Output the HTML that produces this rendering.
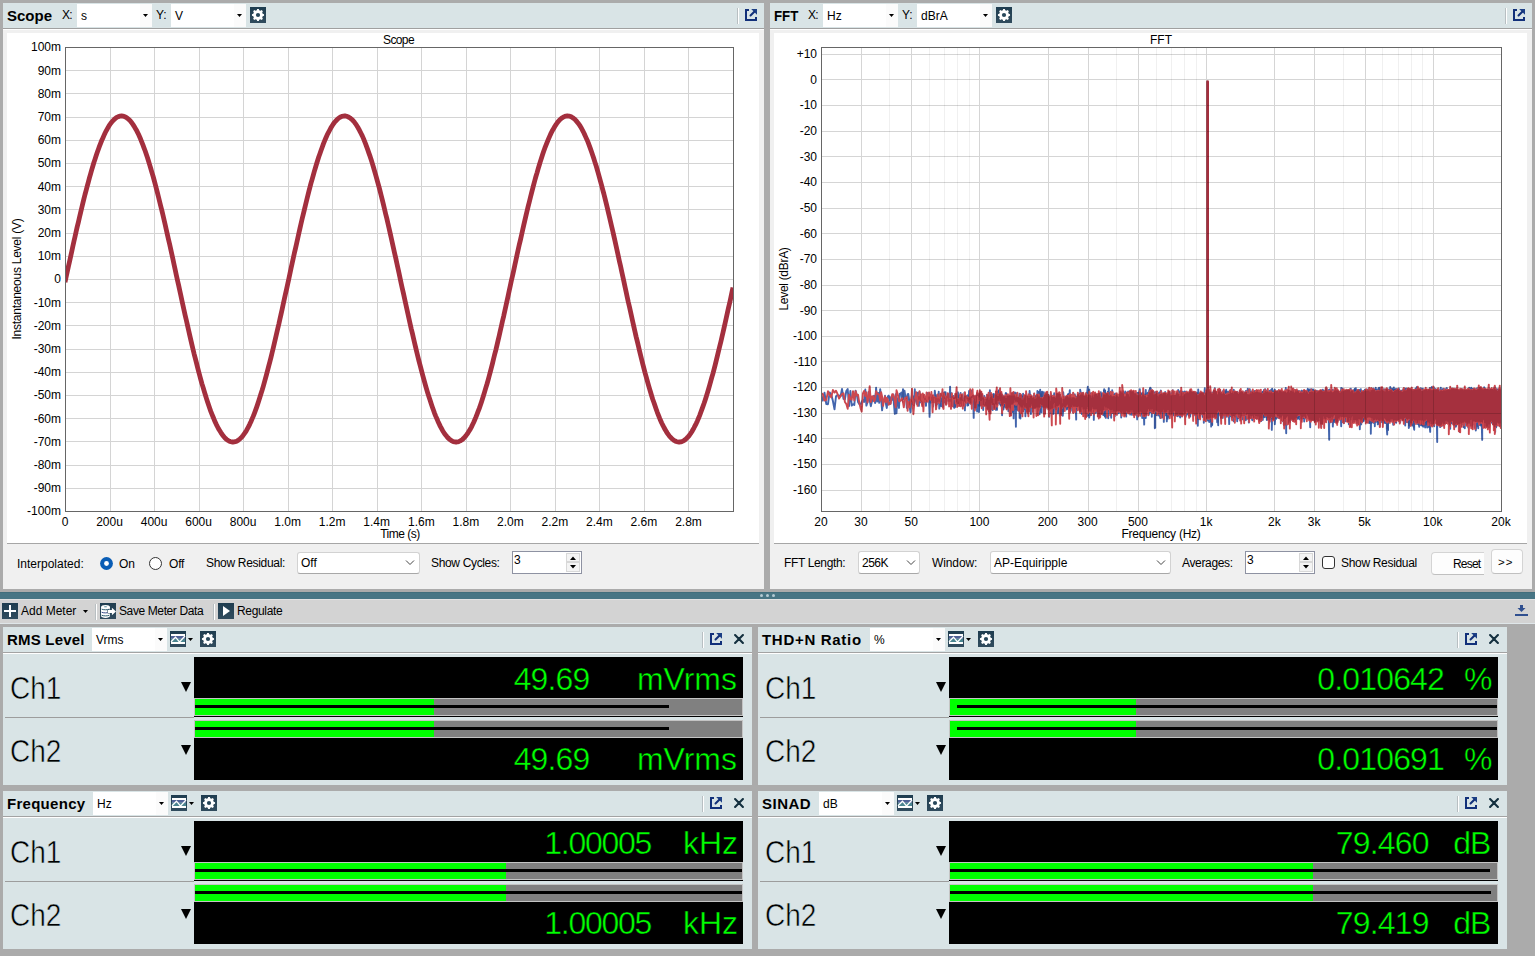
<!DOCTYPE html><html><head><meta charset="utf-8"><title>APx</title><style>
*{margin:0;padding:0;box-sizing:border-box}
html,body{width:1535px;height:956px;overflow:hidden;background:#ababab;position:relative;font-family:"Liberation Sans",sans-serif;font-size:12px;color:#000}
.a{position:absolute}
.t{position:absolute;white-space:nowrap;line-height:14px;height:14px}
.b{font-weight:bold;font-size:15px;line-height:18px;height:18px}
.pan{position:absolute;background:#d9e4e6}
.dd{position:absolute;background:#fff;height:23px}
.dd i{position:absolute;right:0;top:0;bottom:0;width:12px;background:#fbfbfb}
.arr{position:absolute;width:5px;height:3px;background:#000;clip-path:polygon(0 0,100% 0,50% 100%)}
.sep{position:absolute;width:2px;height:16px;background:linear-gradient(90deg,#b8bfc2 50%,#fff 50%)}
.ico{position:absolute;width:16px;height:16px;background:#27475a}
.cb{position:absolute;background:#fff;border:1px solid #d2d2d2;border-bottom-color:#a8a8a8;border-radius:3px}
.ch{position:absolute;font-size:32px;line-height:40px;height:40px;white-space:nowrap;color:#000;-webkit-text-stroke:0.55px #d9e4e6;transform:scaleX(0.875);transform-origin:0 0}
.val{position:absolute;font-size:32px;line-height:40px;height:40px;white-space:nowrap;color:#00ff00;-webkit-text-stroke:0.45px #000}
.tri{position:absolute;width:0;height:0;border-left:5.5px solid transparent;border-right:5.5px solid transparent;border-top:10px solid #000}
.bar{position:absolute;height:18px;background:#808080;border:1px solid #c4c4c4}
.bar b{position:absolute;left:0;top:0;height:16px;background:#00ff00}
.bar u{position:absolute;top:6px;height:3px;background:#000}
</style></head><body>
<svg width="0" height="0" style="position:absolute"><defs><linearGradient id="ig" x1="0" y1="0" x2="0" y2="1"><stop offset="0" stop-color="#1f3d50"/><stop offset="1" stop-color="#314c5e"/></linearGradient></defs></svg>
<div class="pan" style="left:3px;top:3px;width:761px;height:586px;background:#f0f0f0"></div>
<div class="pan" style="left:3px;top:3px;width:761px;height:25px"></div>
<div class="a" style="left:3px;top:28px;width:761px;height:1px;background:#a0a0a0"></div><div class="a" style="left:3px;top:29px;width:761px;height:1px;background:#fff"></div>
<div class="a" style="left:7px;top:33px;width:752px;height:510px;background:#fff"></div>
<div class="a" style="left:7px;top:543px;width:752px;height:1px;background:#a6a6a6"></div>
<div class="pan" style="left:770px;top:3px;width:762px;height:586px;background:#f0f0f0"></div>
<div class="pan" style="left:770px;top:3px;width:762px;height:25px"></div>
<div class="a" style="left:770px;top:28px;width:762px;height:1px;background:#a0a0a0"></div><div class="a" style="left:770px;top:29px;width:762px;height:1px;background:#fff"></div>
<div class="a" style="left:774px;top:33px;width:753px;height:510px;background:#fff"></div>
<div class="a" style="left:774px;top:543px;width:753px;height:1px;background:#a6a6a6"></div>
<div class="t b" style="left:7px;top:7px">Scope</div>
<div class="t" style="left:62px;top:8px;letter-spacing:-0.8px">X:</div>
<div class="dd" style="left:77px;top:4px;width:75px"><i></i></div><div class="t" style="left:81px;top:9px">s</div><div class="arr" style="left:143px;top:14px"></div>
<div class="t" style="left:156px;top:8px">Y:</div>
<div class="dd" style="left:171px;top:4px;width:75px"><i></i></div><div class="t" style="left:175px;top:9px">V</div><div class="arr" style="left:237px;top:14px"></div>
<svg class="a" style="left:250px;top:7px" width="16" height="16" viewBox="0 0 16 16"><rect width="16" height="16" fill="url(#ig)"/><path d="M7.14 1.96 L8.86 1.96 L9.21 3.30 L10.47 3.83 L11.66 3.12 L12.88 4.34 L12.17 5.53 L12.70 6.79 L14.04 7.14 L14.04 8.86 L12.70 9.21 L12.17 10.47 L12.88 11.66 L11.66 12.88 L10.47 12.17 L9.21 12.70 L8.86 14.04 L7.14 14.04 L6.79 12.70 L5.53 12.17 L4.34 12.88 L3.12 11.66 L3.83 10.47 L3.30 9.21 L1.96 8.86 L1.96 7.14 L3.30 6.79 L3.83 5.53 L3.12 4.34 L4.34 3.12 L5.53 3.83 L6.79 3.30Z" fill="#fff"/><circle cx="8" cy="8" r="2.1" fill="#27475a"/></svg>
<div class="sep" style="left:737px;top:8px"></div>
<svg class="a" style="left:745px;top:9px" width="12" height="12" viewBox="0 0 12 12"><path d="M0 0H4V2H2V10H10V8H12V12H0Z" fill="#12307a"/><path d="M6.2 0H12V5.800Z" fill="#1c3f85"/><path d="M9.3 2.700L5.500 6.500" stroke="#12307a" stroke-width="2" stroke-linecap="round"/></svg>
<div class="t b" style="left:774px;top:7px;transform:scaleX(0.885);transform-origin:0 0">FFT</div>
<div class="t" style="left:808px;top:8px;letter-spacing:-0.8px">X:</div>
<div class="dd" style="left:823px;top:4px;width:75px"><i></i></div><div class="t" style="left:827px;top:9px">Hz</div><div class="arr" style="left:889px;top:14px"></div>
<div class="t" style="left:902px;top:8px">Y:</div>
<div class="dd" style="left:917px;top:4px;width:75px"><i></i></div><div class="t" style="left:921px;top:9px">dBrA</div><div class="arr" style="left:983px;top:14px"></div>
<svg class="a" style="left:996px;top:7px" width="16" height="16" viewBox="0 0 16 16"><rect width="16" height="16" fill="url(#ig)"/><path d="M7.14 1.96 L8.86 1.96 L9.21 3.30 L10.47 3.83 L11.66 3.12 L12.88 4.34 L12.17 5.53 L12.70 6.79 L14.04 7.14 L14.04 8.86 L12.70 9.21 L12.17 10.47 L12.88 11.66 L11.66 12.88 L10.47 12.17 L9.21 12.70 L8.86 14.04 L7.14 14.04 L6.79 12.70 L5.53 12.17 L4.34 12.88 L3.12 11.66 L3.83 10.47 L3.30 9.21 L1.96 8.86 L1.96 7.14 L3.30 6.79 L3.83 5.53 L3.12 4.34 L4.34 3.12 L5.53 3.83 L6.79 3.30Z" fill="#fff"/><circle cx="8" cy="8" r="2.1" fill="#27475a"/></svg>
<div class="sep" style="left:1505px;top:8px"></div>
<svg class="a" style="left:1513px;top:9px" width="12" height="12" viewBox="0 0 12 12"><path d="M0 0H4V2H2V10H10V8H12V12H0Z" fill="#12307a"/><path d="M6.2 0H12V5.800Z" fill="#1c3f85"/><path d="M9.3 2.700L5.500 6.500" stroke="#12307a" stroke-width="2" stroke-linecap="round"/></svg>
<svg class="a" style="left:0;top:0" width="1535" height="590" viewBox="0 0 1535 590" font-family="Liberation Sans, sans-serif" font-size="12"><path d="M110.5 47 V511 M154.5 47 V511 M199.5 47 V511 M243.5 47 V511 M288.5 47 V511 M332.5 47 V511 M377.5 47 V511 M421.5 47 V511 M466.5 47 V511 M510.5 47 V511 M555.5 47 V511 M599.5 47 V511 M644.5 47 V511 M688.5 47 V511 M65 70.5 H733 M65 93.5 H733 M65 117.5 H733 M65 140.5 H733 M65 163.5 H733 M65 186.5 H733 M65 209.5 H733 M65 233.5 H733 M65 256.5 H733 M65 279.5 H733 M65 302.5 H733 M65 325.5 H733 M65 349.5 H733 M65 372.5 H733 M65 395.5 H733 M65 418.5 H733 M65 441.5 H733 M65 465.5 H733 M65 488.5 H733" stroke="#000" stroke-opacity="0.17" stroke-width="1" fill="none" shape-rendering="crispEdges"/><clipPath id="c1"><rect x="65" y="47" width="669" height="464"/></clipPath><path clip-path="url(#c1)" d="M65.0 282.2 L66.1 277.1 L67.2 272.0 L68.3 266.9 L69.5 261.8 L70.6 256.7 L71.7 251.7 L72.8 246.6 L73.9 241.6 L75.0 236.7 L76.1 231.8 L77.2 226.9 L78.4 222.1 L79.5 217.3 L80.6 212.6 L81.7 208.0 L82.8 203.4 L83.9 198.9 L85.0 194.5 L86.2 190.2 L87.3 185.9 L88.4 181.8 L89.5 177.7 L90.6 173.8 L91.7 169.9 L92.8 166.2 L93.9 162.5 L95.1 159.0 L96.2 155.6 L97.3 152.3 L98.4 149.2 L99.5 146.2 L100.6 143.3 L101.7 140.5 L102.9 137.9 L104.0 135.4 L105.1 133.0 L106.2 130.8 L107.3 128.8 L108.4 126.9 L109.5 125.1 L110.6 123.5 L111.8 122.0 L112.9 120.7 L114.0 119.6 L115.1 118.6 L116.2 117.8 L117.3 117.1 L118.4 116.6 L119.6 116.2 L120.7 116.0 L121.8 116.0 L122.9 116.1 L124.0 116.4 L125.1 116.8 L126.2 117.4 L127.3 118.2 L128.5 119.1 L129.6 120.2 L130.7 121.4 L131.8 122.8 L132.9 124.4 L134.0 126.1 L135.1 127.9 L136.3 129.9 L137.4 132.1 L138.5 134.3 L139.6 136.8 L140.7 139.3 L141.8 142.1 L142.9 144.9 L144.0 147.9 L145.2 151.0 L146.3 154.2 L147.4 157.5 L148.5 161.0 L149.6 164.6 L150.7 168.3 L151.8 172.1 L153.0 176.0 L154.1 180.0 L155.2 184.1 L156.3 188.3 L157.4 192.6 L158.5 197.0 L159.6 201.5 L160.7 206.0 L161.9 210.6 L163.0 215.3 L164.1 220.0 L165.2 224.8 L166.3 229.7 L167.4 234.6 L168.5 239.5 L169.7 244.5 L170.8 249.5 L171.9 254.5 L173.0 259.6 L174.1 264.7 L175.2 269.8 L176.3 274.9 L177.4 280.0 L178.6 285.1 L179.7 290.2 L180.8 295.3 L181.9 300.4 L183.0 305.5 L184.1 310.5 L185.2 315.5 L186.4 320.5 L187.5 325.4 L188.6 330.3 L189.7 335.1 L190.8 339.9 L191.9 344.6 L193.0 349.2 L194.1 353.8 L195.3 358.3 L196.4 362.7 L197.5 367.1 L198.6 371.3 L199.7 375.5 L200.8 379.6 L201.9 383.6 L203.1 387.4 L204.2 391.2 L205.3 394.8 L206.4 398.4 L207.5 401.8 L208.6 405.1 L209.7 408.3 L210.8 411.3 L212.0 414.3 L213.1 417.0 L214.2 419.7 L215.3 422.2 L216.4 424.6 L217.5 426.8 L218.6 428.9 L219.8 430.8 L220.9 432.6 L222.0 434.3 L223.1 435.7 L224.2 437.1 L225.3 438.2 L226.4 439.3 L227.5 440.1 L228.7 440.8 L229.8 441.4 L230.9 441.7 L232.0 442.0 L233.1 442.0 L234.2 441.9 L235.3 441.7 L236.5 441.3 L237.6 440.7 L238.7 439.9 L239.8 439.0 L240.9 438.0 L242.0 436.8 L243.1 435.4 L244.2 433.9 L245.4 432.2 L246.5 430.4 L247.6 428.4 L248.7 426.3 L249.8 424.1 L250.9 421.7 L252.0 419.1 L253.2 416.4 L254.3 413.6 L255.4 410.7 L256.5 407.6 L257.6 404.4 L258.7 401.0 L259.8 397.6 L260.9 394.0 L262.1 390.3 L263.2 386.6 L264.3 382.7 L265.4 378.7 L266.5 374.6 L267.6 370.4 L268.7 366.1 L269.9 361.7 L271.0 357.3 L272.1 352.8 L273.2 348.2 L274.3 343.5 L275.4 338.8 L276.5 334.0 L277.6 329.2 L278.8 324.3 L279.9 319.3 L281.0 314.4 L282.1 309.4 L283.2 304.3 L284.3 299.3 L285.4 294.2 L286.6 289.1 L287.7 284.0 L288.8 278.9 L289.9 273.8 L291.0 268.6 L292.1 263.5 L293.2 258.5 L294.3 253.4 L295.5 248.4 L296.6 243.4 L297.7 238.4 L298.8 233.5 L299.9 228.6 L301.0 223.7 L302.1 219.0 L303.3 214.2 L304.4 209.6 L305.5 205.0 L306.6 200.5 L307.7 196.0 L308.8 191.7 L309.9 187.4 L311.0 183.2 L312.2 179.1 L313.3 175.1 L314.4 171.2 L315.5 167.5 L316.6 163.8 L317.7 160.2 L318.8 156.8 L320.0 153.5 L321.1 150.3 L322.2 147.2 L323.3 144.2 L324.4 141.4 L325.5 138.8 L326.6 136.2 L327.7 133.8 L328.9 131.6 L330.0 129.5 L331.1 127.5 L332.2 125.7 L333.3 124.0 L334.4 122.5 L335.5 121.2 L336.7 120.0 L337.8 118.9 L338.9 118.0 L340.0 117.3 L341.1 116.7 L342.2 116.3 L343.3 116.1 L344.4 116.0 L345.6 116.0 L346.7 116.3 L347.8 116.7 L348.9 117.2 L350.0 117.9 L351.1 118.8 L352.2 119.8 L353.4 121.0 L354.5 122.3 L355.6 123.8 L356.7 125.5 L357.8 127.3 L358.9 129.2 L360.0 131.3 L361.1 133.5 L362.3 135.9 L363.4 138.4 L364.5 141.1 L365.6 143.9 L366.7 146.8 L367.8 149.9 L368.9 153.1 L370.1 156.4 L371.2 159.8 L372.3 163.4 L373.4 167.0 L374.5 170.8 L375.6 174.7 L376.7 178.6 L377.8 182.7 L379.0 186.9 L380.1 191.2 L381.2 195.5 L382.3 199.9 L383.4 204.4 L384.5 209.0 L385.6 213.7 L386.8 218.4 L387.9 223.2 L389.0 228.0 L390.1 232.9 L391.2 237.8 L392.3 242.8 L393.4 247.8 L394.5 252.8 L395.7 257.9 L396.8 262.9 L397.9 268.0 L399.0 273.1 L400.1 278.3 L401.2 283.4 L402.3 288.5 L403.5 293.6 L404.6 298.7 L405.7 303.7 L406.8 308.8 L407.9 313.8 L409.0 318.8 L410.1 323.7 L411.2 328.6 L412.4 333.4 L413.5 338.2 L414.6 343.0 L415.7 347.6 L416.8 352.2 L417.9 356.8 L419.0 361.2 L420.2 365.6 L421.3 369.9 L422.4 374.1 L423.5 378.2 L424.6 382.2 L425.7 386.1 L426.8 389.9 L427.9 393.6 L429.1 397.2 L430.2 400.6 L431.3 404.0 L432.4 407.2 L433.5 410.3 L434.6 413.3 L435.7 416.1 L436.9 418.8 L438.0 421.4 L439.1 423.8 L440.2 426.1 L441.3 428.2 L442.4 430.2 L443.5 432.0 L444.6 433.7 L445.8 435.2 L446.9 436.6 L448.0 437.9 L449.1 438.9 L450.2 439.8 L451.3 440.6 L452.4 441.2 L453.6 441.6 L454.7 441.9 L455.8 442.0 L456.9 442.0 L458.0 441.8 L459.1 441.4 L460.2 440.9 L461.3 440.2 L462.5 439.4 L463.6 438.4 L464.7 437.2 L465.8 435.9 L466.9 434.4 L468.0 432.8 L469.1 431.0 L470.3 429.1 L471.4 427.1 L472.5 424.8 L473.6 422.5 L474.7 420.0 L475.8 417.4 L476.9 414.6 L478.0 411.7 L479.2 408.6 L480.3 405.5 L481.4 402.2 L482.5 398.8 L483.6 395.3 L484.7 391.6 L485.8 387.9 L487.0 384.0 L488.1 380.1 L489.2 376.0 L490.3 371.8 L491.4 367.6 L492.5 363.3 L493.6 358.8 L494.7 354.3 L495.9 349.8 L497.0 345.1 L498.1 340.4 L499.2 335.7 L500.3 330.8 L501.4 326.0 L502.5 321.0 L503.7 316.1 L504.8 311.1 L505.9 306.1 L507.0 301.0 L508.1 295.9 L509.2 290.8 L510.3 285.7 L511.4 280.6 L512.6 275.5 L513.7 270.4 L514.8 265.3 L515.9 260.2 L517.0 255.1 L518.1 250.1 L519.2 245.1 L520.4 240.1 L521.5 235.2 L522.6 230.3 L523.7 225.4 L524.8 220.6 L525.9 215.9 L527.0 211.2 L528.1 206.6 L529.3 202.0 L530.4 197.5 L531.5 193.2 L532.6 188.9 L533.7 184.6 L534.8 180.5 L535.9 176.5 L537.1 172.6 L538.2 168.7 L539.3 165.0 L540.4 161.4 L541.5 158.0 L542.6 154.6 L543.7 151.3 L544.8 148.2 L546.0 145.2 L547.1 142.4 L548.2 139.7 L549.3 137.1 L550.4 134.6 L551.5 132.3 L552.6 130.2 L553.8 128.2 L554.9 126.3 L556.0 124.6 L557.1 123.0 L558.2 121.6 L559.3 120.3 L560.4 119.3 L561.5 118.3 L562.7 117.5 L563.8 116.9 L564.9 116.4 L566.0 116.1 L567.1 116.0 L568.2 116.0 L569.3 116.2 L570.5 116.5 L571.6 117.0 L572.7 117.7 L573.8 118.5 L574.9 119.4 L576.0 120.6 L577.1 121.9 L578.2 123.3 L579.4 124.9 L580.5 126.6 L581.6 128.5 L582.7 130.6 L583.8 132.8 L584.9 135.1 L586.0 137.6 L587.2 140.2 L588.3 142.9 L589.4 145.8 L590.5 148.8 L591.6 152.0 L592.7 155.2 L593.8 158.6 L594.9 162.1 L596.1 165.7 L597.2 169.5 L598.3 173.3 L599.4 177.3 L600.5 181.3 L601.6 185.4 L602.7 189.7 L603.9 194.0 L605.0 198.4 L606.1 202.9 L607.2 207.4 L608.3 212.1 L609.4 216.8 L610.5 221.5 L611.6 226.3 L612.8 231.2 L613.9 236.1 L615.0 241.1 L616.1 246.0 L617.2 251.1 L618.3 256.1 L619.4 261.2 L620.6 266.3 L621.7 271.4 L622.8 276.5 L623.9 281.6 L625.0 286.7 L626.1 291.8 L627.2 296.9 L628.3 302.0 L629.5 307.0 L630.6 312.1 L631.7 317.0 L632.8 322.0 L633.9 326.9 L635.0 331.8 L636.1 336.6 L637.3 341.3 L638.4 346.0 L639.5 350.7 L640.6 355.2 L641.7 359.7 L642.8 364.1 L643.9 368.4 L645.0 372.6 L646.2 376.8 L647.3 380.8 L648.4 384.8 L649.5 388.6 L650.6 392.3 L651.7 396.0 L652.8 399.5 L654.0 402.8 L655.1 406.1 L656.2 409.2 L657.3 412.3 L658.4 415.1 L659.5 417.9 L660.6 420.5 L661.7 423.0 L662.9 425.3 L664.0 427.5 L665.1 429.5 L666.2 431.4 L667.3 433.1 L668.4 434.7 L669.5 436.2 L670.7 437.4 L671.8 438.6 L672.9 439.5 L674.0 440.4 L675.1 441.0 L676.2 441.5 L677.3 441.8 L678.4 442.0 L679.6 442.0 L680.7 441.9 L681.8 441.6 L682.9 441.1 L684.0 440.5 L685.1 439.7 L686.2 438.7 L687.4 437.6 L688.5 436.4 L689.6 435.0 L690.7 433.4 L691.8 431.7 L692.9 429.8 L694.0 427.8 L695.1 425.6 L696.3 423.3 L697.4 420.9 L698.5 418.3 L699.6 415.6 L700.7 412.7 L701.8 409.7 L702.9 406.6 L704.1 403.3 L705.2 400.0 L706.3 396.5 L707.4 392.9 L708.5 389.2 L709.6 385.4 L710.7 381.4 L711.8 377.4 L713.0 373.3 L714.1 369.1 L715.2 364.8 L716.3 360.4 L717.4 355.9 L718.5 351.3 L719.6 346.7 L720.8 342.0 L721.9 337.3 L723.0 332.5 L724.1 327.6 L725.2 322.7 L726.3 317.8 L727.4 312.8 L728.5 307.8 L729.7 302.7 L730.8 297.7 L731.9 292.6 L733.0 287.5" stroke="#a32f3e" stroke-width="4.8" fill="none" stroke-linejoin="round"/><rect x="65.5" y="47.5" width="668" height="464" fill="none" stroke="#666" stroke-width="1" shape-rendering="crispEdges"/><text x="61" y="51.3" text-anchor="end">100m</text><text x="61" y="74.5" text-anchor="end">90m</text><text x="61" y="97.7" text-anchor="end">80m</text><text x="61" y="120.9" text-anchor="end">70m</text><text x="61" y="144.1" text-anchor="end">60m</text><text x="61" y="167.3" text-anchor="end">50m</text><text x="61" y="190.5" text-anchor="end">40m</text><text x="61" y="213.7" text-anchor="end">30m</text><text x="61" y="236.9" text-anchor="end">20m</text><text x="61" y="260.1" text-anchor="end">10m</text><text x="61" y="283.3" text-anchor="end">0</text><text x="61" y="306.5" text-anchor="end">-10m</text><text x="61" y="329.7" text-anchor="end">-20m</text><text x="61" y="352.9" text-anchor="end">-30m</text><text x="61" y="376.1" text-anchor="end">-40m</text><text x="61" y="399.3" text-anchor="end">-50m</text><text x="61" y="422.5" text-anchor="end">-60m</text><text x="61" y="445.7" text-anchor="end">-70m</text><text x="61" y="468.9" text-anchor="end">-80m</text><text x="61" y="492.1" text-anchor="end">-90m</text><text x="61" y="515.3" text-anchor="end">-100m</text><text x="65.0" y="526" text-anchor="middle">0</text><text x="109.5" y="526" text-anchor="middle">200u</text><text x="154.1" y="526" text-anchor="middle">400u</text><text x="198.6" y="526" text-anchor="middle">600u</text><text x="243.1" y="526" text-anchor="middle">800u</text><text x="287.7" y="526" text-anchor="middle">1.0m</text><text x="332.2" y="526" text-anchor="middle">1.2m</text><text x="376.7" y="526" text-anchor="middle">1.4m</text><text x="421.3" y="526" text-anchor="middle">1.6m</text><text x="465.8" y="526" text-anchor="middle">1.8m</text><text x="510.3" y="526" text-anchor="middle">2.0m</text><text x="554.9" y="526" text-anchor="middle">2.2m</text><text x="599.4" y="526" text-anchor="middle">2.4m</text><text x="643.9" y="526" text-anchor="middle">2.6m</text><text x="688.5" y="526" text-anchor="middle">2.8m</text><text x="398.5" y="44" text-anchor="middle" letter-spacing="-0.6">Scope</text><text x="400" y="538" text-anchor="middle" letter-spacing="-0.5">Time (s)</text><text transform="translate(21,279) rotate(-90)" text-anchor="middle" letter-spacing="-0.25">Instantaneous Level (V)</text><clipPath id="c2"><rect x="822" y="47" width="679" height="464"/></clipPath><path clip-path="url(#c2)" d="M819.2 395.3 L821.0 394.4 L822.8 400.6 L824.5 392.6 L826.3 404.0 L828.0 404.2 L829.6 392.4 L831.3 394.6 L832.9 401.0 L834.5 409.3 L836.0 396.3 L837.6 395.1 L839.1 395.5 L840.6 396.2 L842.0 388.9 L843.5 398.8 L844.9 399.4 L846.3 391.0 L847.7 389.0 L849.0 406.2 L850.4 390.9 L851.7 405.6 L853.0 404.3 L854.3 405.0 L855.6 390.7 L856.9 395.3 L858.1 402.2 L859.3 404.1 L860.5 404.7 L861.7 401.8 L862.9 399.9 L864.1 401.9 L865.3 389.5 L866.4 405.6 L867.5 402.0 L868.6 391.9 L869.7 400.3 L870.8 406.2 L871.9 401.5 L873.0 399.1 L874.0 395.8 L875.1 403.1 L876.1 387.8 L877.2 401.6 L878.2 392.9 L879.2 402.9 L880.2 389.1 L881.1 398.5 L882.1 410.3 L883.1 402.0 L884.0 401.7 L885.0 395.8 L885.9 403.7 L886.8 408.0 L887.8 396.5 L888.7 395.6 L889.6 398.4 L890.5 403.8 L891.4 396.4 L892.2 399.9 L893.1 394.4 L894.0 405.0 L894.8 413.9 L895.7 394.3 L896.5 413.2 L897.3 398.1 L898.2 400.9 L899.0 408.0 L899.8 393.7 L900.6 393.7 L901.4 392.5 L902.2 400.4 L903.0 389.1 L903.8 399.3 L904.5 390.6 L905.3 396.0 L906.1 396.7 L906.8 407.9 L907.6 394.1 L908.3 394.0 L909.1 399.1 L909.8 407.8 L910.5 412.3 L911.3 398.5 L912.0 394.8 L912.7 396.4 L913.4 401.7 L914.1 403.8 L914.8 389.2 L915.5 399.3 L916.2 401.3 L916.9 404.0 L917.5 392.6 L918.2 397.0 L918.9 405.9 L919.5 391.8 L920.2 394.8 L920.9 402.4 L921.5 399.3 L922.2 403.8 L922.8 396.4 L923.4 401.7 L924.1 395.0 L924.7 401.8 L925.3 399.3 L926.0 405.9 L926.6 396.5 L927.2 396.5 L927.8 392.9 L928.4 395.5 L929.0 399.1 L929.6 416.9 L930.2 395.0 L930.8 402.7 L931.4 395.4 L932.0 396.9 L932.6 400.5 L933.1 406.5 L933.7 396.7 L934.3 400.8 L934.8 390.8 L935.4 396.3 L936.0 395.0 L936.5 396.5 L937.1 404.1 L937.6 398.3 L938.2 401.9 L938.7 391.7 L939.3 408.6 L939.8 398.1 L940.4 399.1 L940.9 401.7 L941.4 406.3 L942.0 398.7 L942.5 392.3 L943.0 404.1 L943.5 402.6 L944.0 396.7 L944.6 392.2 L945.1 402.2 L945.6 392.2 L946.1 404.5 L946.6 397.9 L947.1 398.5 L947.6 397.4 L948.1 400.7 L948.6 398.1 L949.1 395.9 L949.6 398.5 L950.1 386.6 L950.5 403.2 L951.0 407.0 L951.6 393.2 L951.9 399.6 L952.5 405.0 L952.9 405.0 L953.4 396.0 L953.9 401.6 L954.3 407.9 L954.8 407.2 L955.3 403.7 L955.7 398.8 L956.2 401.3 L956.6 398.8 L957.1 404.8 L957.6 397.0 L957.9 392.3 L958.4 395.1 L958.9 402.5 L959.3 404.5 L959.8 404.0 L960.2 403.6 L960.6 392.9 L961.1 401.0 L961.6 396.3 L961.9 399.3 L962.4 399.3 L962.8 405.3 L963.2 398.6 L963.6 398.3 L964.1 405.4 L964.4 392.7 L964.9 410.4 L965.3 400.1 L965.7 402.4 L966.2 399.2 L966.6 397.8 L966.9 396.0 L967.4 405.6 L967.8 395.3 L968.2 405.2 L968.6 399.3 L969.1 390.9 L969.4 396.0 L969.8 397.4 L970.2 397.9 L970.6 403.8 L970.9 395.2 L971.4 393.6 L971.8 390.8 L972.2 396.2 L972.6 394.8 L972.9 395.7 L973.3 402.2 L973.7 417.9 L974.1 397.3 L974.4 404.4 L974.8 396.8 L975.2 396.9 L975.6 399.1 L975.9 396.2 L976.3 397.7 L976.7 403.9 L977.1 411.5 L977.4 401.7 L977.8 404.1 L978.2 398.8 L978.6 398.1 L978.9 412.0 L979.3 406.4 L979.6 406.1 L979.9 397.9 L980.3 399.3 L980.7 401.9 L981.1 397.1 L981.4 403.5 L981.8 403.2 L982.1 404.3 L982.4 406.5 L982.8 401.5 L983.2 410.0 L983.6 400.9 L983.9 399.4 L984.2 395.9 L984.6 398.1 L984.9 397.7 L985.2 405.3 L985.6 399.3 L985.9 400.7 L986.2 400.5 L986.6 398.5 L986.9 394.7 L987.2 395.7 L987.6 408.1 L987.9 394.6 L988.2 402.2 L988.6 396.7 L988.9 398.3 L989.2 395.3 L989.6 404.3 L989.9 390.2 L990.2 403.8 L990.6 397.8 L990.9 399.2 L991.1 409.4 L991.4 399.0 L991.8 402.0 L992.1 405.2 L992.4 395.6 L992.7 410.1 L993.1 394.1 L993.4 395.0 L993.6 401.1 L993.9 394.0 L994.3 397.3 L994.6 402.9 L994.9 395.6 L995.2 401.1 L995.6 408.9 L995.9 409.9 L996.1 398.9 L996.4 396.8 L996.8 405.2 L997.1 409.7 L997.4 396.0 L997.6 403.7 L997.9 402.3 L998.3 402.2 L998.6 396.4 L998.9 390.2 L999.1 394.3 L999.4 403.1 L999.7 389.2 L1000.1 404.5 L1000.4 402.2 L1000.6 401.7 L1000.9 405.7 L1001.1 394.5 L1001.4 393.4 L1001.8 406.2 L1002.1 415.3 L1002.4 399.3 L1002.6 399.3 L1002.9 409.7 L1003.1 395.9 L1003.4 409.6 L1003.8 407.2 L1004.1 397.6 L1004.4 405.1 L1004.6 399.7 L1004.9 401.8 L1005.1 400.2 L1005.4 396.2 L1005.6 393.8 L1005.9 392.9 L1006.3 393.6 L1006.6 399.7 L1006.9 394.4 L1007.1 401.4 L1007.4 395.8 L1007.6 402.1 L1007.9 405.6 L1008.1 403.7 L1008.4 411.3 L1008.6 408.4 L1008.9 395.1 L1009.1 411.1 L1009.4 398.7 L1009.8 406.1 L1010.1 404.9 L1010.4 398.6 L1010.6 406.1 L1010.9 406.5 L1011.1 403.3 L1011.4 394.1 L1011.6 404.4 L1011.9 399.4 L1012.1 400.4 L1012.4 412.1 L1012.6 394.5 L1012.9 399.7 L1013.1 404.1 L1013.4 397.5 L1013.6 418.4 L1013.9 402.3 L1014.1 396.5 L1014.4 407.0 L1014.6 403.2 L1014.9 392.5 L1015.1 397.9 L1015.4 404.3 L1015.6 407.2 L1015.9 426.8 L1016.1 393.3 L1016.4 409.9 L1016.6 396.5 L1016.9 400.5 L1017.1 394.9 L1017.4 399.5 L1017.6 407.0 L1017.9 403.4 L1018.1 410.3 L1018.4 400.8 L1018.6 402.6 L1018.9 408.8 L1019.1 400.8 L1019.4 393.8 L1019.6 417.9 L1019.9 396.6 L1020.1 399.2 L1020.4 418.6 L1020.6 394.7 L1020.9 398.3 L1021.2 403.7 L1021.2 402.0 L1021.6 404.6 L1021.9 396.2 L1022.1 396.4 L1022.4 407.6 L1022.6 397.3 L1022.9 406.4 L1023.1 393.7 L1023.4 409.6 L1023.6 407.1 L1023.9 401.8 L1024.2 395.5 L1024.2 402.2 L1024.6 401.7 L1024.9 401.9 L1025.1 397.6 L1025.4 416.3 L1025.6 402.9 L1025.9 408.9 L1026.1 400.2 L1026.4 394.0 L1026.8 407.6 L1026.8 402.8 L1027.1 396.6 L1027.4 406.0 L1027.6 398.2 L1027.9 410.0 L1028.1 399.1 L1028.4 403.2 L1028.8 402.6 L1028.8 408.2 L1029.1 399.6 L1029.4 399.4 L1029.6 391.0 L1029.9 394.3 L1030.2 408.3 L1030.2 404.0 L1030.6 399.6 L1030.9 414.1 L1031.1 397.7 L1031.4 397.5 L1031.8 402.3 L1031.8 407.6 L1032.1 399.2 L1032.4 400.1 L1032.6 399.3 L1032.9 398.0 L1033.2 400.9 L1033.2 397.5 L1033.6 395.8 L1033.9 400.6 L1034.2 393.7 L1034.2 401.9 L1034.6 400.0 L1034.9 401.5 L1035.2 403.4 L1035.2 396.4 L1035.6 395.9 L1035.9 398.9 L1036.1 408.3 L1036.4 400.4 L1036.8 400.0 L1036.8 412.1 L1037.1 405.2 L1037.4 391.0 L1037.8 405.5 L1037.8 397.6 L1038.1 399.4 L1038.4 409.4 L1038.8 403.4 L1038.8 408.3 L1039.2 402.1 L1039.2 391.8 L1039.6 414.3 L1039.9 403.7 L1040.2 389.8 L1040.2 404.0 L1040.6 393.8 L1040.9 400.9 L1041.2 406.3 L1041.2 392.4 L1041.6 412.4 L1041.9 396.5 L1042.2 391.6 L1042.2 397.1 L1042.8 405.5 L1042.8 396.9 L1043.1 406.6 L1043.4 397.7 L1043.8 392.3 L1043.8 405.4 L1044.2 409.8 L1044.2 401.5 L1044.6 400.0 L1044.9 398.9 L1045.2 395.9 L1045.2 410.0 L1045.8 406.5 L1045.8 401.1 L1046.2 399.6 L1046.2 402.4 L1046.6 402.9 L1046.9 395.3 L1047.2 400.4 L1047.2 395.4 L1047.8 395.3 L1047.8 401.5 L1048.2 405.6 L1048.2 400.6 L1048.6 399.0 L1048.9 399.4 L1049.2 401.6 L1049.2 416.7 L1049.8 410.8 L1049.8 399.4 L1050.2 395.2 L1050.2 413.2 L1050.8 410.0 L1050.8 398.6 L1051.2 394.1 L1051.2 407.3 L1051.8 411.6 L1051.8 400.7 L1052.2 401.3 L1052.2 413.5 L1052.6 401.8 L1052.9 414.1 L1053.2 405.5 L1053.2 395.8 L1053.8 401.2 L1053.8 413.5 L1054.2 403.2 L1054.2 393.1 L1054.8 402.3 L1054.8 405.8 L1055.2 407.2 L1055.2 405.8 L1055.8 397.3 L1055.8 403.9 L1056.2 406.7 L1056.2 402.4 L1056.8 395.8 L1056.8 402.9 L1057.2 410.3 L1057.2 403.6 L1057.8 400.3 L1057.8 413.4 L1058.2 403.8 L1058.2 397.1 L1058.8 396.7 L1058.8 407.7 L1059.2 405.8 L1059.2 402.2 L1059.8 397.8 L1059.8 415.5 L1060.2 405.8 L1060.2 397.8 L1060.8 401.8 L1060.8 411.8 L1061.2 407.1 L1061.2 402.2 L1061.8 397.2 L1061.8 407.6 L1062.2 412.2 L1062.2 402.4 L1062.8 399.3 L1062.8 415.7 L1063.2 406.6 L1063.2 392.1 L1063.8 398.6 L1063.8 402.9 L1064.2 408.1 L1064.2 403.9 L1064.8 397.6 L1064.8 406.5 L1065.2 403.2 L1065.2 399.7 L1065.8 397.4 L1065.8 407.4 L1066.2 402.8 L1066.2 396.3 L1066.8 400.5 L1066.8 409.5 L1067.2 409.0 L1067.2 395.8 L1067.8 395.2 L1067.8 405.1 L1068.2 403.5 L1068.2 393.9 L1068.8 394.3 L1068.8 408.6 L1069.2 399.3 L1069.2 397.5 L1069.8 390.1 L1069.8 412.7 L1070.2 404.4 L1070.2 400.0 L1070.8 395.1 L1070.8 404.5 L1071.2 407.0 L1071.2 397.4 L1071.8 398.7 L1071.8 405.7 L1072.2 410.7 L1072.2 401.0 L1072.8 395.0 L1072.8 412.0 L1073.2 404.6 L1073.2 393.3 L1073.8 396.8 L1073.8 408.8 L1074.2 402.4 L1074.2 395.3 L1074.8 394.4 L1074.8 402.6 L1075.2 403.2 L1075.2 398.1 L1075.8 396.5 L1075.8 409.9 L1076.2 419.6 L1076.2 402.4 L1076.8 400.2 L1076.8 409.3 L1077.2 405.9 L1077.2 397.2 L1077.8 398.4 L1077.8 406.8 L1078.2 409.1 L1078.2 393.6 L1078.8 397.6 L1078.8 402.7 L1079.2 401.3 L1079.2 398.7 L1079.8 396.6 L1079.8 402.4 L1080.2 408.6 L1080.2 389.8 L1080.8 393.1 L1080.8 405.2 L1081.2 411.0 L1081.2 395.5 L1081.8 393.6 L1081.8 414.0 L1082.2 409.0 L1082.2 393.3 L1082.8 392.9 L1082.8 411.1 L1083.2 403.5 L1083.2 398.7 L1083.8 397.5 L1083.8 408.5 L1084.2 408.0 L1084.2 396.7 L1084.8 400.7 L1084.8 405.6 L1085.2 404.5 L1085.2 396.5 L1085.8 401.7 L1085.8 404.4 L1086.2 402.3 L1086.2 394.7 L1086.8 399.4 L1086.8 410.3 L1087.2 415.9 L1087.2 392.1 L1087.8 386.8 L1087.8 401.4 L1088.2 411.5 L1088.2 402.5 L1088.8 398.8 L1088.8 408.1 L1089.2 417.5 L1089.2 389.4 L1089.8 400.3 L1089.8 415.8 L1090.2 408.7 L1090.2 395.8 L1090.8 393.4 L1090.8 406.0 L1091.2 407.8 L1091.2 396.8 L1091.8 398.5 L1091.8 413.1 L1092.2 403.8 L1092.2 398.3 L1092.8 396.7 L1092.8 403.1 L1093.2 412.8 L1093.2 400.1 L1093.8 396.5 L1093.8 419.9 L1094.2 404.0 L1094.2 399.1 L1094.8 393.6 L1094.8 405.3 L1095.2 412.3 L1095.2 394.4 L1095.8 398.6 L1095.8 413.0 L1096.2 401.8 L1096.2 395.8 L1096.8 398.1 L1096.8 409.2 L1097.2 408.8 L1097.2 399.9 L1097.8 398.0 L1097.8 402.8 L1098.2 409.6 L1098.2 406.5 L1098.8 394.2 L1098.8 402.8 L1099.2 411.7 L1099.2 399.7 L1099.8 400.0 L1099.8 414.3 L1100.2 406.5 L1100.2 395.7 L1100.8 392.1 L1100.8 404.5 L1101.2 408.6 L1101.2 400.3 L1101.8 393.6 L1101.8 404.8 L1102.2 412.5 L1102.2 395.9 L1102.8 398.3 L1102.8 409.4 L1103.2 415.0 L1103.2 393.8 L1103.8 397.4 L1103.8 401.2 L1104.2 408.5 L1104.2 389.1 L1104.8 393.7 L1104.8 416.6 L1105.2 400.6 L1105.2 393.3 L1105.8 394.5 L1105.8 417.9 L1106.2 407.2 L1106.2 395.8 L1106.8 404.4 L1106.8 407.0 L1107.2 410.9 L1107.2 395.6 L1107.8 391.6 L1107.8 403.7 L1108.2 418.2 L1108.2 399.5 L1108.8 388.1 L1108.8 408.5 L1109.2 411.3 L1109.2 392.8 L1109.8 396.3 L1109.8 408.9 L1110.2 407.7 L1110.2 394.1 L1110.8 396.3 L1110.8 412.7 L1111.2 417.8 L1111.2 401.0 L1111.8 392.8 L1111.8 404.1 L1112.2 404.6 L1112.2 390.2 L1112.8 400.8 L1112.8 410.0 L1113.2 410.4 L1113.2 394.6 L1113.8 400.1 L1113.8 405.3 L1114.2 406.7 L1114.2 394.5 L1114.8 399.2 L1114.8 416.2 L1115.2 409.5 L1115.2 393.4 L1115.8 395.5 L1115.8 402.9 L1116.2 406.9 L1116.2 397.7 L1116.8 396.7 L1116.8 414.4 L1117.2 405.8 L1117.2 396.3 L1117.8 397.1 L1117.8 408.0 L1118.2 411.4 L1118.2 396.2 L1118.8 397.7 L1118.8 413.2 L1119.2 411.3 L1119.2 401.3 L1119.8 397.5 L1119.8 409.1 L1120.2 404.4 L1120.2 399.0 L1120.8 393.0 L1120.8 403.1 L1121.2 417.5 L1121.2 396.3 L1121.8 394.9 L1121.8 412.2 L1122.2 405.5 L1122.2 395.9 L1122.8 392.5 L1122.8 407.5 L1123.2 411.2 L1123.2 397.8 L1123.8 393.3 L1123.8 408.1 L1124.2 409.2 L1124.2 395.0 L1124.8 397.7 L1124.8 408.1 L1125.2 407.4 L1125.2 391.5 L1125.8 400.4 L1125.8 413.2 L1126.2 416.6 L1126.2 398.3 L1126.8 394.2 L1126.8 405.5 L1127.2 402.5 L1127.2 392.8 L1127.8 395.6 L1127.8 406.1 L1128.2 402.8 L1128.2 391.4 L1128.8 393.7 L1128.8 411.3 L1129.2 407.4 L1129.2 392.2 L1129.8 395.1 L1129.8 411.4 L1130.2 414.6 L1130.2 394.9 L1130.8 391.4 L1130.8 411.8 L1131.2 412.3 L1131.2 394.3 L1131.8 400.0 L1131.8 414.7 L1132.2 412.9 L1132.2 394.2 L1132.8 400.5 L1132.8 408.1 L1133.2 403.9 L1133.2 392.8 L1133.8 394.0 L1133.8 409.4 L1134.2 408.3 L1134.2 398.5 L1134.8 393.9 L1134.8 406.9 L1135.2 402.8 L1135.2 393.9 L1135.8 395.9 L1135.8 407.8 L1136.2 414.4 L1136.2 394.9 L1136.8 392.9 L1136.8 407.8 L1137.2 419.4 L1137.2 398.1 L1137.8 399.4 L1137.8 412.3 L1138.2 408.2 L1138.2 392.9 L1138.8 392.7 L1138.8 411.9 L1139.2 411.4 L1139.2 392.2 L1139.8 389.2 L1139.8 413.9 L1140.2 410.2 L1140.2 394.8 L1140.8 393.2 L1140.8 408.9 L1141.2 410.0 L1141.2 394.2 L1141.8 398.8 L1141.8 406.7 L1142.2 418.0 L1142.2 395.7 L1142.8 392.4 L1142.8 410.5 L1143.2 413.3 L1143.2 395.8 L1143.8 394.3 L1143.8 411.6 L1144.2 424.6 L1144.2 398.2 L1144.8 394.6 L1144.8 409.2 L1145.2 413.5 L1145.2 397.5 L1145.8 389.9 L1145.8 418.0 L1146.2 407.1 L1146.2 395.3 L1146.8 393.7 L1146.8 413.0 L1147.2 405.2 L1147.2 398.2 L1147.8 392.6 L1147.8 402.1 L1148.2 413.1 L1148.2 396.7 L1148.8 396.1 L1148.8 414.8 L1149.2 409.6 L1149.2 390.1 L1149.8 395.9 L1149.8 406.5 L1150.2 408.3 L1150.2 387.6 L1150.8 388.3 L1150.8 412.2 L1151.2 406.7 L1151.2 392.3 L1151.8 391.7 L1151.8 416.8 L1152.2 401.8 L1152.2 393.8 L1152.8 397.9 L1152.8 409.1 L1153.2 406.2 L1153.2 395.2 L1153.8 393.6 L1153.8 412.7 L1154.2 411.3 L1154.2 392.1 L1154.8 395.1 L1154.8 428.3 L1155.2 427.7 L1155.2 396.7 L1155.8 399.4 L1155.8 408.3 L1156.2 415.3 L1156.2 391.6 L1156.8 398.6 L1156.8 413.8 L1157.2 410.6 L1157.2 397.5 L1157.8 394.2 L1157.8 410.9 L1158.2 415.5 L1158.2 394.7 L1158.8 393.1 L1158.8 412.1 L1159.2 409.3 L1159.2 394.1 L1159.8 393.7 L1159.8 415.4 L1160.2 418.0 L1160.2 391.8 L1160.8 390.6 L1160.8 410.1 L1161.2 415.6 L1161.2 397.4 L1161.8 392.9 L1161.8 410.8 L1162.2 407.0 L1162.2 398.9 L1162.8 396.4 L1162.8 417.5 L1163.2 410.6 L1163.2 396.1 L1163.8 395.8 L1163.8 421.9 L1164.2 413.4 L1164.2 399.3 L1164.8 395.7 L1164.8 406.0 L1165.2 415.4 L1165.2 391.9 L1165.8 395.5 L1165.8 410.8 L1166.2 410.9 L1166.2 396.0 L1166.8 396.4 L1166.8 421.4 L1167.2 409.9 L1167.2 396.1 L1167.8 396.4 L1167.8 418.8 L1168.2 407.2 L1168.2 393.2 L1168.8 396.4 L1168.8 405.9 L1169.2 417.1 L1169.2 392.3 L1169.8 395.0 L1169.8 412.5 L1170.2 408.3 L1170.2 397.4 L1170.8 397.2 L1170.8 405.8 L1171.2 410.4 L1171.2 393.2 L1171.8 394.5 L1171.8 408.3 L1172.2 415.9 L1172.2 396.0 L1172.8 390.3 L1172.8 415.6 L1173.2 414.5 L1173.2 393.3 L1173.8 396.4 L1173.8 412.8 L1174.2 414.3 L1174.2 393.9 L1174.8 394.9 L1174.8 407.7 L1175.2 414.3 L1175.2 394.2 L1175.8 394.7 L1175.8 411.4 L1176.2 415.5 L1176.2 396.6 L1176.8 396.8 L1176.8 415.5 L1177.2 406.8 L1177.2 397.1 L1177.8 391.3 L1177.8 416.2 L1178.2 411.2 L1178.2 390.0 L1178.8 397.9 L1178.8 411.4 L1179.2 408.7 L1179.2 394.5 L1179.8 393.7 L1179.8 415.7 L1180.2 417.6 L1180.2 391.2 L1180.8 392.0 L1180.8 409.6 L1181.2 410.6 L1181.2 395.2 L1181.8 392.2 L1181.8 408.3 L1182.2 416.3 L1182.2 396.0 L1182.8 391.7 L1182.8 410.6 L1183.2 412.6 L1183.2 397.6 L1183.8 397.1 L1183.8 414.1 L1184.2 409.6 L1184.2 394.8 L1184.8 391.5 L1184.8 413.3 L1185.2 411.2 L1185.2 400.4 L1185.8 395.3 L1185.8 416.8 L1186.2 410.0 L1186.2 392.0 L1186.8 395.9 L1186.8 412.8 L1187.2 414.5 L1187.2 393.2 L1187.8 395.7 L1187.8 410.6 L1188.2 410.8 L1188.2 396.2 L1188.8 392.5 L1188.8 409.5 L1189.2 406.5 L1189.2 395.8 L1189.8 394.3 L1189.8 415.4 L1190.2 416.6 L1190.2 394.7 L1190.8 395.0 L1190.8 407.5 L1191.2 407.5 L1191.2 396.2 L1191.8 393.9 L1191.8 413.3 L1192.2 406.3 L1192.2 392.1 L1192.8 393.9 L1192.8 407.5 L1193.2 411.1 L1193.2 395.0 L1193.8 398.3 L1193.8 415.5 L1194.2 414.4 L1194.2 397.1 L1194.8 392.5 L1194.8 409.6 L1195.2 406.0 L1195.2 396.6 L1195.8 392.4 L1195.8 409.9 L1196.2 404.8 L1196.2 393.2 L1196.8 393.0 L1196.8 415.8 L1197.2 403.4 L1197.2 393.5 L1197.8 393.0 L1197.8 425.8 L1198.2 409.6 L1198.2 389.4 L1198.8 396.1 L1198.8 417.8 L1199.2 410.5 L1199.2 394.4 L1199.8 396.5 L1199.8 418.8 L1200.2 417.1 L1200.2 393.2 L1200.8 396.4 L1200.8 414.6 L1201.2 407.4 L1201.2 394.6 L1201.8 398.1 L1201.8 411.9 L1202.2 414.2 L1202.2 394.3 L1202.8 392.9 L1202.8 417.0 L1203.2 409.6 L1203.2 397.1 L1203.8 394.8 L1203.8 422.8 L1204.2 413.6 L1204.2 395.8 L1204.8 388.2 L1204.8 407.7 L1205.2 409.8 L1205.2 398.0 L1205.8 394.4 L1205.8 417.7 L1206.2 413.9 L1206.2 395.0 L1206.8 393.4 L1206.8 412.3 L1207.2 413.2 L1207.2 394.6 L1207.8 394.6 L1207.8 420.5 L1208.2 419.0 L1208.2 397.9 L1208.8 392.0 L1208.8 413.7 L1209.2 422.0 L1209.2 392.4 L1209.8 390.7 L1209.8 419.3 L1210.2 412.4 L1210.2 391.5 L1210.8 392.9 L1210.8 411.4 L1211.2 426.6 L1211.2 393.1 L1211.8 392.9 L1211.8 411.9 L1212.2 425.0 L1212.2 395.9 L1212.8 392.5 L1212.8 409.4 L1213.2 416.1 L1213.2 397.8 L1213.8 392.7 L1213.8 414.3 L1214.2 410.6 L1214.2 391.7 L1214.8 388.2 L1214.8 413.3 L1215.2 404.1 L1215.2 393.3 L1215.8 391.6 L1215.8 415.6 L1216.2 415.0 L1216.2 391.9 L1216.8 395.7 L1216.8 411.6 L1217.2 422.3 L1217.2 394.4 L1217.8 393.6 L1217.8 412.5 L1218.2 425.2 L1218.2 392.8 L1218.8 393.4 L1218.8 414.2 L1219.2 409.5 L1219.2 394.5 L1219.8 394.0 L1219.8 410.8 L1220.2 414.5 L1220.2 394.6 L1220.8 395.2 L1220.8 408.4 L1221.2 417.7 L1221.2 395.7 L1221.8 397.3 L1221.8 412.7 L1222.2 410.5 L1222.2 396.8 L1222.8 391.2 L1222.8 417.9 L1223.2 408.4 L1223.2 393.0 L1223.8 396.3 L1223.8 408.7 L1224.2 413.6 L1224.2 392.4 L1224.8 391.1 L1224.8 416.1 L1225.2 408.6 L1225.2 391.8 L1225.8 390.7 L1225.8 410.1 L1226.2 415.9 L1226.2 389.8 L1226.8 394.2 L1226.8 416.7 L1227.2 408.8 L1227.2 395.5 L1227.8 393.5 L1227.8 412.2 L1228.2 409.9 L1228.2 391.7 L1228.8 392.1 L1228.8 412.3 L1229.2 424.1 L1229.2 400.0 L1229.8 394.0 L1229.8 408.2 L1230.2 413.4 L1230.2 395.5 L1230.8 389.9 L1230.8 412.4 L1231.2 416.5 L1231.2 391.6 L1231.8 394.8 L1231.8 419.1 L1232.2 416.8 L1232.2 395.7 L1232.8 393.7 L1232.8 417.9 L1233.2 407.9 L1233.2 391.4 L1233.8 389.8 L1233.8 421.3 L1234.2 415.6 L1234.2 396.6 L1234.8 392.3 L1234.8 413.3 L1235.2 413.4 L1235.2 394.8 L1235.8 392.3 L1235.8 411.0 L1236.2 412.3 L1236.2 394.2 L1236.8 395.6 L1236.8 413.4 L1237.2 421.2 L1237.2 391.7 L1237.8 393.0 L1237.8 418.8 L1238.2 415.9 L1238.2 394.7 L1238.8 395.7 L1238.8 413.4 L1239.2 411.4 L1239.2 393.6 L1239.8 395.3 L1239.8 410.2 L1240.2 414.2 L1240.2 391.2 L1240.8 394.3 L1240.8 419.4 L1241.2 411.7 L1241.2 395.5 L1241.8 393.7 L1241.8 412.6 L1242.2 419.4 L1242.2 392.8 L1242.8 392.5 L1242.8 413.9 L1243.2 410.0 L1243.2 392.1 L1243.8 393.2 L1243.8 417.0 L1244.2 410.7 L1244.2 393.1 L1244.8 392.6 L1244.8 409.6 L1245.2 410.0 L1245.2 393.2 L1245.8 391.0 L1245.8 420.2 L1246.2 414.2 L1246.2 393.0 L1246.8 396.6 L1246.8 409.1 L1247.2 413.2 L1247.2 393.5 L1247.8 388.6 L1247.8 418.8 L1248.2 418.0 L1248.2 390.4 L1248.8 394.7 L1248.8 422.6 L1249.2 415.2 L1249.2 393.0 L1249.8 389.2 L1249.8 414.5 L1250.2 413.1 L1250.2 394.0 L1250.8 392.4 L1250.8 416.0 L1251.2 410.9 L1251.2 391.8 L1251.8 393.9 L1251.8 417.7 L1252.2 420.2 L1252.2 391.2 L1252.8 392.5 L1252.8 417.3 L1253.2 415.0 L1253.2 395.1 L1253.8 395.0 L1253.8 417.0 L1254.2 419.5 L1254.2 390.9 L1254.8 391.9 L1254.8 408.0 L1255.2 416.2 L1255.2 395.8 L1255.8 390.9 L1255.8 415.0 L1256.2 409.4 L1256.2 394.5 L1256.8 395.1 L1256.8 416.5 L1257.2 414.5 L1257.2 394.1 L1257.8 393.8 L1257.8 414.6 L1258.2 418.4 L1258.2 393.7 L1258.8 397.0 L1258.8 418.0 L1259.2 415.9 L1259.2 393.8 L1259.8 392.0 L1259.8 414.5 L1260.2 409.7 L1260.2 392.3 L1260.8 393.1 L1260.8 412.2 L1261.2 421.1 L1261.2 394.1 L1261.8 395.2 L1261.8 413.9 L1262.2 410.1 L1262.2 392.0 L1262.8 395.8 L1262.8 419.9 L1263.2 412.9 L1263.2 393.7 L1263.8 390.3 L1263.8 417.1 L1264.2 416.8 L1264.2 389.8 L1264.8 393.0 L1264.8 417.2 L1265.2 413.9 L1265.2 389.1 L1265.8 393.6 L1265.8 414.4 L1266.2 412.3 L1266.2 391.7 L1266.8 390.8 L1266.8 420.1 L1267.2 419.7 L1267.2 394.9 L1267.8 392.4 L1267.8 414.9 L1268.2 415.1 L1268.2 391.2 L1268.8 393.8 L1268.8 410.5 L1269.2 413.4 L1269.2 392.8 L1269.8 390.8 L1269.8 413.9 L1270.2 419.1 L1270.2 393.4 L1270.8 393.1 L1270.8 416.8 L1271.2 407.8 L1271.2 389.6 L1271.8 393.1 L1271.8 429.9 L1272.2 414.4 L1272.2 388.8 L1272.8 393.3 L1272.8 413.3 L1273.2 416.2 L1273.2 394.4 L1273.8 391.2 L1273.8 415.9 L1274.2 414.0 L1274.2 391.4 L1274.8 389.6 L1274.8 424.3 L1275.2 418.5 L1275.2 393.4 L1275.8 394.2 L1275.8 413.0 L1276.2 418.7 L1276.2 393.9 L1276.8 395.5 L1276.8 415.5 L1277.2 417.6 L1277.2 391.3 L1277.8 393.5 L1277.8 415.8 L1278.2 415.0 L1278.2 397.2 L1278.8 392.3 L1278.8 417.9 L1279.2 416.0 L1279.2 394.6 L1279.8 391.2 L1279.8 416.6 L1280.2 414.5 L1280.2 393.2 L1280.8 391.6 L1280.8 417.3 L1281.2 414.3 L1281.2 392.4 L1281.8 391.1 L1281.8 414.0 L1282.2 416.6 L1282.2 394.0 L1282.8 393.0 L1282.8 412.4 L1283.2 421.4 L1283.2 393.9 L1283.8 392.2 L1283.8 424.7 L1284.2 411.0 L1284.2 392.7 L1284.8 391.8 L1284.8 410.5 L1285.2 413.6 L1285.2 395.4 L1285.8 387.9 L1285.8 413.1 L1286.2 433.2 L1286.2 393.6 L1286.8 390.2 L1286.8 413.7 L1287.2 412.7 L1287.2 394.0 L1287.8 389.6 L1287.8 418.9 L1288.2 412.6 L1288.2 392.4 L1288.8 390.2 L1288.8 413.9 L1289.2 411.3 L1289.2 393.3 L1289.8 392.6 L1289.8 412.2 L1290.2 415.3 L1290.2 395.4 L1290.8 394.6 L1290.8 411.4 L1291.2 417.3 L1291.2 391.2 L1291.8 393.4 L1291.8 414.0 L1292.2 419.9 L1292.2 391.9 L1292.8 393.3 L1292.8 415.4 L1293.2 416.0 L1293.2 393.5 L1293.8 391.1 L1293.8 415.2 L1294.2 414.3 L1294.2 389.7 L1294.8 392.4 L1294.8 417.3 L1295.2 415.6 L1295.2 390.1 L1295.8 394.8 L1295.8 415.1 L1296.2 413.3 L1296.2 391.4 L1296.8 392.3 L1296.8 414.6 L1297.2 418.9 L1297.2 394.4 L1297.8 390.8 L1297.8 418.1 L1298.2 418.5 L1298.2 394.7 L1298.8 394.1 L1298.8 411.5 L1299.2 416.5 L1299.2 391.2 L1299.8 392.2 L1299.8 419.4 L1300.2 416.5 L1300.2 393.0 L1300.8 393.1 L1300.8 415.4 L1301.2 416.6 L1301.2 391.3 L1301.8 390.6 L1301.8 417.5 L1302.2 418.2 L1302.2 391.2 L1302.8 391.2 L1302.8 414.6 L1303.2 411.2 L1303.2 391.8 L1303.8 391.3 L1303.8 408.2 L1304.2 421.5 L1304.2 394.0 L1304.8 391.5 L1304.8 414.0 L1305.2 418.6 L1305.2 393.8 L1305.8 394.6 L1305.8 414.5 L1306.2 416.9 L1306.2 392.3 L1306.8 392.8 L1306.8 415.0 L1307.2 415.7 L1307.2 391.1 L1307.8 388.8 L1307.8 411.4 L1308.2 414.3 L1308.2 393.2 L1308.8 389.7 L1308.8 416.0 L1309.2 418.9 L1309.2 392.8 L1309.8 389.5 L1309.8 413.8 L1310.2 427.3 L1310.2 391.6 L1310.8 393.8 L1310.8 414.4 L1311.2 411.3 L1311.2 389.2 L1311.8 391.0 L1311.8 413.5 L1312.2 418.0 L1312.2 389.4 L1312.8 393.1 L1312.8 414.5 L1313.2 411.6 L1313.2 389.4 L1313.8 394.3 L1313.8 411.8 L1314.2 413.4 L1314.2 390.8 L1314.8 392.7 L1314.8 421.5 L1315.2 417.0 L1315.2 392.2 L1315.8 392.5 L1315.8 421.1 L1316.2 409.3 L1316.2 393.3 L1316.8 390.6 L1316.8 412.1 L1317.2 415.6 L1317.2 391.3 L1317.8 392.7 L1317.8 421.2 L1318.2 416.1 L1318.2 393.4 L1318.8 393.9 L1318.8 418.0 L1319.2 414.5 L1319.2 394.9 L1319.8 392.0 L1319.8 420.0 L1320.2 421.1 L1320.2 391.4 L1320.8 390.6 L1320.8 421.3 L1321.2 426.9 L1321.2 392.2 L1321.8 391.5 L1321.8 420.7 L1322.2 414.9 L1322.2 392.4 L1322.8 389.6 L1322.8 416.7 L1323.2 413.6 L1323.2 390.8 L1323.8 393.9 L1323.8 420.0 L1324.2 419.4 L1324.2 390.9 L1324.8 393.9 L1324.8 417.0 L1325.2 411.9 L1325.2 391.9 L1325.8 393.7 L1325.8 417.3 L1326.2 420.4 L1326.2 388.1 L1326.8 390.5 L1326.8 415.8 L1327.2 416.1 L1327.2 391.9 L1327.8 393.9 L1327.8 411.5 L1328.2 419.8 L1328.2 390.8 L1328.8 390.0 L1328.8 422.8 L1329.2 439.7 L1329.2 392.9 L1329.8 389.5 L1329.8 416.8 L1330.2 422.4 L1330.2 391.7 L1330.8 393.8 L1330.8 421.1 L1331.2 419.4 L1331.2 393.1 L1331.8 390.5 L1331.8 414.5 L1332.2 416.5 L1332.2 393.8 L1332.8 389.8 L1332.8 426.6 L1333.2 420.8 L1333.2 394.8 L1333.8 393.0 L1333.8 421.2 L1334.2 416.7 L1334.2 391.1 L1334.8 391.5 L1334.8 422.1 L1335.2 420.2 L1335.2 392.0 L1335.8 390.5 L1335.8 418.4 L1336.2 416.5 L1336.2 390.5 L1336.8 391.4 L1336.8 417.5 L1337.2 422.3 L1337.2 391.5 L1337.8 393.6 L1337.8 419.7 L1338.2 417.1 L1338.2 392.7 L1338.8 393.2 L1338.8 420.0 L1339.2 413.7 L1339.2 392.1 L1339.8 392.6 L1339.8 417.4 L1340.2 413.6 L1340.2 394.0 L1340.8 393.1 L1340.8 416.2 L1341.2 426.3 L1341.2 387.9 L1341.8 390.5 L1341.8 418.1 L1342.2 419.7 L1342.2 388.5 L1342.8 391.9 L1342.8 413.9 L1343.2 422.4 L1343.2 393.0 L1343.8 393.0 L1343.8 423.1 L1344.2 411.7 L1344.2 391.9 L1344.8 392.5 L1344.8 418.9 L1345.2 421.4 L1345.2 393.4 L1345.8 392.0 L1345.8 415.9 L1346.2 419.2 L1346.2 392.4 L1346.8 390.7 L1346.8 417.3 L1347.2 420.0 L1347.2 393.4 L1347.8 390.3 L1347.8 417.7 L1348.2 421.3 L1348.2 393.0 L1348.8 392.9 L1348.8 424.3 L1349.2 415.5 L1349.2 391.0 L1349.8 390.7 L1349.8 423.7 L1350.2 417.5 L1350.2 391.7 L1350.8 388.7 L1350.8 414.8 L1351.2 420.4 L1351.2 394.1 L1351.8 391.8 L1351.8 418.9 L1352.2 417.8 L1352.2 394.3 L1352.8 394.8 L1352.8 417.5 L1353.2 420.4 L1353.2 390.7 L1353.8 390.6 L1353.8 412.8 L1354.2 421.1 L1354.2 390.0 L1354.8 388.8 L1354.8 420.0 L1355.2 418.0 L1355.2 389.5 L1355.8 388.2 L1355.8 420.1 L1356.2 414.4 L1356.2 392.1 L1356.8 391.2 L1356.8 415.1 L1357.2 417.0 L1357.2 391.5 L1357.8 393.8 L1357.8 419.9 L1358.2 415.6 L1358.2 391.3 L1358.8 389.9 L1358.8 420.4 L1359.2 418.4 L1359.2 391.0 L1359.8 391.1 L1359.8 429.3 L1360.2 418.2 L1360.2 390.6 L1360.8 389.2 L1360.8 418.8 L1361.2 424.4 L1361.2 392.2 L1361.8 391.3 L1361.8 415.8 L1362.2 420.9 L1362.2 393.0 L1362.8 391.4 L1362.8 421.7 L1363.2 418.6 L1363.2 391.1 L1363.8 391.0 L1363.8 421.0 L1364.2 417.6 L1364.2 391.5 L1364.8 389.8 L1364.8 415.5 L1365.2 415.7 L1365.2 394.4 L1365.8 392.3 L1365.8 415.8 L1366.2 413.5 L1366.2 391.8 L1366.8 393.8 L1366.8 418.8 L1367.2 414.2 L1367.2 389.4 L1367.8 391.6 L1367.8 415.3 L1368.2 417.2 L1368.2 391.1 L1368.8 393.5 L1368.8 422.7 L1369.2 420.6 L1369.2 388.8 L1369.8 392.9 L1369.8 420.3 L1370.2 415.5 L1370.2 391.4 L1370.8 392.4 L1370.8 433.8 L1371.2 415.8 L1371.2 392.0 L1371.8 391.8 L1371.8 421.8 L1372.2 422.0 L1372.2 390.3 L1372.8 390.4 L1372.8 420.5 L1373.2 422.9 L1373.2 388.5 L1373.8 393.8 L1373.8 421.2 L1374.2 419.3 L1374.2 389.5 L1374.8 390.6 L1374.8 426.3 L1375.2 417.2 L1375.2 389.6 L1375.8 387.8 L1375.8 420.4 L1376.2 421.8 L1376.2 390.4 L1376.8 392.2 L1376.8 417.1 L1377.2 414.6 L1377.2 390.8 L1377.8 395.4 L1377.8 424.4 L1378.2 422.4 L1378.2 389.2 L1378.8 387.9 L1378.8 417.3 L1379.2 417.4 L1379.2 387.8 L1379.8 394.9 L1379.8 426.2 L1380.2 412.0 L1380.2 392.8 L1380.8 392.2 L1380.8 420.9 L1381.2 421.9 L1381.2 388.1 L1381.8 392.8 L1381.8 417.2 L1382.2 417.5 L1382.2 392.3 L1382.8 392.7 L1382.8 423.4 L1383.2 414.4 L1383.2 390.1 L1383.8 389.2 L1383.8 422.9 L1384.2 420.6 L1384.2 394.4 L1384.8 389.8 L1384.8 418.3 L1385.2 423.0 L1385.2 393.6 L1385.8 390.2 L1385.8 417.5 L1386.2 420.7 L1386.2 391.5 L1386.8 389.1 L1386.8 428.8 L1387.2 434.5 L1387.2 392.0 L1387.8 390.1 L1387.8 430.3 L1388.2 420.5 L1388.2 392.3 L1388.8 389.4 L1388.8 421.0 L1389.2 418.1 L1389.2 393.0 L1389.8 391.2 L1389.8 415.4 L1390.2 414.3 L1390.2 386.9 L1390.8 392.0 L1390.8 415.9 L1391.2 420.9 L1391.2 388.4 L1391.8 390.5 L1391.8 419.2 L1392.2 419.2 L1392.2 389.3 L1392.8 390.2 L1392.8 415.9 L1393.2 424.8 L1393.2 389.3 L1393.8 387.4 L1393.8 422.8 L1394.2 417.8 L1394.2 391.7 L1394.8 389.3 L1394.8 417.9 L1395.2 422.3 L1395.2 390.6 L1395.8 388.9 L1395.8 418.1 L1396.2 422.7 L1396.2 391.8 L1396.8 389.2 L1396.8 419.4 L1397.2 420.1 L1397.2 392.1 L1397.8 390.8 L1397.8 416.8 L1398.2 417.5 L1398.2 390.1 L1398.8 388.5 L1398.8 419.8 L1399.2 421.3 L1399.2 389.8 L1399.8 390.8 L1399.8 418.5 L1400.2 422.3 L1400.2 391.3 L1400.8 393.0 L1400.8 418.6 L1401.2 417.3 L1401.2 390.6 L1401.8 391.0 L1401.8 415.6 L1402.2 416.2 L1402.2 391.2 L1402.8 390.9 L1402.8 419.6 L1403.2 417.2 L1403.2 390.3 L1403.8 388.7 L1403.8 422.3 L1404.2 413.8 L1404.2 392.6 L1404.8 388.8 L1404.8 420.2 L1405.2 425.5 L1405.2 392.8 L1405.8 390.8 L1405.8 415.9 L1406.2 421.2 L1406.2 388.4 L1406.8 393.0 L1406.8 420.3 L1407.2 422.3 L1407.2 390.1 L1407.8 390.2 L1407.8 417.2 L1408.2 420.9 L1408.2 391.7 L1408.8 390.5 L1408.8 428.0 L1409.2 426.0 L1409.2 392.5 L1409.8 393.5 L1409.8 425.9 L1410.2 416.5 L1410.2 389.8 L1410.8 391.2 L1410.8 422.9 L1411.2 422.8 L1411.2 392.4 L1411.8 391.9 L1411.8 415.5 L1412.2 425.5 L1412.2 392.4 L1412.8 389.8 L1412.8 416.6 L1413.2 419.2 L1413.2 391.8 L1413.8 391.3 L1413.8 427.2 L1414.2 429.7 L1414.2 391.9 L1414.8 391.6 L1414.8 421.7 L1415.2 419.6 L1415.2 389.3 L1415.8 391.5 L1415.8 422.0 L1416.2 418.8 L1416.2 388.4 L1416.8 387.0 L1416.8 415.7 L1417.2 424.0 L1417.2 391.8 L1417.8 393.1 L1417.8 419.4 L1418.2 420.8 L1418.2 388.8 L1418.8 391.0 L1418.8 420.8 L1419.2 426.7 L1419.2 392.2 L1419.8 389.6 L1419.8 421.7 L1420.2 424.9 L1420.2 392.4 L1420.8 388.1 L1420.8 416.4 L1421.2 424.0 L1421.2 391.8 L1421.8 388.9 L1421.8 423.4 L1422.2 425.8 L1422.2 391.9 L1422.8 388.7 L1422.8 425.8 L1423.2 426.7 L1423.2 390.6 L1423.8 392.0 L1423.8 416.4 L1424.2 422.3 L1424.2 389.7 L1424.8 393.4 L1424.8 425.6 L1425.2 427.5 L1425.2 391.0 L1425.8 389.7 L1425.8 419.4 L1426.2 422.4 L1426.2 390.6 L1426.8 390.7 L1426.8 419.0 L1427.2 427.5 L1427.2 390.2 L1427.8 390.2 L1427.8 424.4 L1428.2 416.0 L1428.2 391.3 L1428.8 391.3 L1428.8 416.4 L1429.2 417.9 L1429.2 393.6 L1429.8 388.0 L1429.8 427.6 L1430.2 431.9 L1430.2 391.6 L1430.8 391.3 L1430.8 421.7 L1431.2 420.5 L1431.2 389.9 L1431.8 387.0 L1431.8 418.0 L1432.2 418.4 L1432.2 391.3 L1432.8 393.6 L1432.8 421.6 L1433.2 418.7 L1433.2 392.8 L1433.8 387.2 L1433.8 418.0 L1434.2 426.2 L1434.2 390.8 L1434.8 389.0 L1434.8 420.9 L1435.2 418.4 L1435.2 393.2 L1435.8 389.3 L1435.8 422.6 L1436.2 419.8 L1436.2 392.0 L1436.8 390.0 L1436.8 420.3 L1437.2 442.0 L1437.2 390.3 L1437.8 391.3 L1437.8 417.8 L1438.2 423.5 L1438.2 388.7 L1438.8 392.1 L1438.8 419.7 L1439.2 423.8 L1439.2 391.6 L1439.8 391.7 L1439.8 419.6 L1440.2 427.1 L1440.2 391.4 L1440.8 387.7 L1440.8 421.9 L1441.2 420.2 L1441.2 390.1 L1441.8 392.4 L1441.8 425.9 L1442.2 416.3 L1442.2 389.7 L1442.8 390.2 L1442.8 418.0 L1443.2 415.4 L1443.2 388.6 L1443.8 390.1 L1443.8 421.9 L1444.2 425.6 L1444.2 389.8 L1444.8 391.3 L1444.8 423.1 L1445.2 418.3 L1445.2 390.7 L1445.8 391.1 L1445.8 417.8 L1446.2 420.4 L1446.2 388.9 L1446.8 388.0 L1446.8 422.7 L1447.2 422.6 L1447.2 393.5 L1447.8 390.2 L1447.8 420.5 L1448.2 422.3 L1448.2 392.0 L1448.8 390.6 L1448.8 418.5 L1449.2 421.2 L1449.2 390.7 L1449.8 391.4 L1449.8 423.0 L1450.2 428.8 L1450.2 388.8 L1450.8 392.3 L1450.8 420.3 L1451.2 420.2 L1451.2 390.4 L1451.8 388.8 L1451.8 420.6 L1452.2 423.6 L1452.2 388.6 L1452.8 391.8 L1452.8 417.9 L1453.2 414.9 L1453.2 389.9 L1453.8 390.5 L1453.8 416.3 L1454.2 423.0 L1454.2 392.1 L1454.8 388.8 L1454.8 422.8 L1455.2 419.7 L1455.2 389.1 L1455.8 390.3 L1455.8 426.8 L1456.2 419.3 L1456.2 390.7 L1456.8 390.6 L1456.8 418.0 L1457.2 416.7 L1457.2 388.7 L1457.8 390.3 L1457.8 417.7 L1458.2 424.3 L1458.2 390.2 L1458.8 391.1 L1458.8 424.3 L1459.2 422.3 L1459.2 391.8 L1459.8 390.7 L1459.8 432.1 L1460.2 425.2 L1460.2 390.5 L1460.8 391.5 L1460.8 419.6 L1461.2 418.1 L1461.2 391.3 L1461.8 389.0 L1461.8 423.3 L1462.2 424.2 L1462.2 389.6 L1462.8 392.1 L1462.8 419.9 L1463.2 422.6 L1463.2 390.6 L1463.8 390.6 L1463.8 427.2 L1464.2 416.5 L1464.2 391.6 L1464.8 391.3 L1464.8 428.2 L1465.2 416.4 L1465.2 390.0 L1465.8 389.4 L1465.8 420.4 L1466.2 421.0 L1466.2 392.1 L1466.8 390.9 L1466.8 421.9 L1467.2 421.9 L1467.2 393.5 L1467.8 391.1 L1467.8 422.8 L1468.2 427.5 L1468.2 389.2 L1468.8 392.2 L1468.8 419.5 L1469.2 420.3 L1469.2 387.8 L1469.8 391.0 L1469.8 420.5 L1470.2 422.3 L1470.2 392.7 L1470.8 388.6 L1470.8 418.1 L1471.2 422.2 L1471.2 387.8 L1471.8 392.6 L1471.8 424.6 L1472.2 417.4 L1472.2 388.9 L1472.8 390.3 L1472.8 420.4 L1473.2 422.3 L1473.2 388.7 L1473.8 390.4 L1473.8 421.5 L1474.2 424.4 L1474.2 390.9 L1474.8 391.8 L1474.8 427.8 L1475.2 421.6 L1475.2 391.1 L1475.8 389.1 L1475.8 430.5 L1476.2 426.6 L1476.2 391.2 L1476.8 390.2 L1476.8 418.7 L1477.2 420.0 L1477.2 388.3 L1477.8 390.3 L1477.8 421.7 L1478.2 428.2 L1478.2 390.3 L1478.8 390.7 L1478.8 419.4 L1479.2 421.6 L1479.2 387.9 L1479.8 391.2 L1479.8 420.7 L1480.2 417.8 L1480.2 387.7 L1480.8 388.3 L1480.8 425.6 L1481.2 420.2 L1481.2 389.7 L1481.8 389.9 L1481.8 426.3 L1482.2 439.9 L1482.2 390.5 L1482.8 390.2 L1482.8 425.0 L1483.2 425.4 L1483.2 390.2 L1483.8 389.7 L1483.8 425.9 L1484.2 421.9 L1484.2 387.3 L1484.8 388.4 L1484.8 421.0 L1485.2 421.6 L1485.2 390.9 L1485.8 391.1 L1485.8 418.0 L1486.2 421.4 L1486.2 390.3 L1486.8 391.2 L1486.8 419.4 L1487.2 420.2 L1487.2 389.7 L1487.8 391.1 L1487.8 418.8 L1488.2 424.6 L1488.2 390.2 L1488.8 387.9 L1488.8 422.3 L1489.2 424.2 L1489.2 388.4 L1489.8 390.1 L1489.8 425.8 L1490.2 420.5 L1490.2 390.6 L1490.8 390.6 L1490.8 423.0 L1491.2 421.8 L1491.2 390.6 L1491.8 390.2 L1491.8 417.5 L1492.2 419.9 L1492.2 390.8 L1492.8 391.2 L1492.8 423.8 L1493.2 421.1 L1493.2 391.1 L1493.8 390.5 L1493.8 421.2 L1494.2 420.8 L1494.2 388.8 L1494.8 389.7 L1494.8 419.4 L1495.2 431.9 L1495.2 387.1 L1495.8 391.1 L1495.8 422.5 L1496.2 427.2 L1496.2 389.8 L1496.8 392.1 L1496.8 419.5 L1497.2 423.0 L1497.2 389.3 L1497.8 389.7 L1497.8 420.3 L1498.2 420.6 L1498.2 390.4 L1498.8 390.3 L1498.8 419.6 L1499.2 425.5 L1499.2 390.2 L1499.8 390.3 L1499.8 419.7 L1500.2 425.6 L1500.2 389.6 L1500.8 391.2 L1500.8 424.4 L1501.1 400.5 L1501.4 406.8" stroke="#4365ad" stroke-width="1.9" fill="none" stroke-linejoin="round"/><path clip-path="url(#c2)" d="M902 392.3 H902 V392.3 H903 H903 V390.4 H904 H904 V399.5 H903 H903 V399.5 H902Z M906 395.8 H906 V395.8 H907 H907 V396.9 H906Z M909 398.9 H909 V398.9 H910 H910 V408.0 H909Z M911 396.2 H911 V396.2 H912 H912 V396.2 H913 H913 V396.2 H914 H914 V399.1 H915 H915 V401.9 H914 H914 V401.9 H913 H913 V398.7 H912 H912 V398.7 H911Z M916 399.1 H916 V399.1 H917 H917 V401.5 H916Z M918 392.4 H918 V392.4 H919 H919 V394.6 H920 H920 V394.6 H921 H921 V399.1 H922 H922 V399.1 H923 H923 V396.2 H924 H924 V399.1 H925 H925 V399.1 H926 H926 V396.3 H927 H927 V395.3 H928 H928 V395.3 H929 H929 V395.3 H930 H930 V395.2 H931 H931 V395.2 H932 H932 V396.5 H933 H933 V400.7 H932 H932 V400.7 H931 H931 V402.9 H930 H930 V402.9 H929 H929 V399.3 H928 H928 V396.7 H927 H927 V399.5 H926 H926 V402.0 H925 H925 V401.9 H924 H924 V401.9 H923 H923 V401.9 H922 H922 V402.6 H921 H921 V399.5 H920 H920 V397.2 H919 H919 V397.2 H918Z M935 394.8 H935 V394.8 H936 H936 V396.1 H937 H937 V396.3 H938 H938 V398.1 H939 H939 V397.9 H940 H940 V398.9 H941 H941 V398.5 H942 H942 V398.5 H943 H943 V392.1 H944 H944 V392.0 H945 H945 V392.0 H946 H946 V397.2 H947 H947 V397.7 H948 H948 V397.2 H949 H949 V395.7 H950 H950 V393.0 H951 H951 V399.4 H952 H952 V395.8 H953 H953 V401.4 H954 H954 V398.6 H955 H955 V398.6 H956 H956 V398.6 H957 H957 V394.9 H958 H958 V394.9 H959 H959 V394.9 H960 H960 V396.1 H961 H961 V396.1 H962 H962 V398.1 H963 H963 V398.1 H964 H964 V398.1 H965 H965 V397.6 H966 H966 V395.8 H967 H967 V395.8 H968 H968 V395.1 H969 H969 V395.8 H970 H970 V393.4 H971 H971 V393.4 H972 H972 V393.4 H973 H973 V395.5 H974 H974 V396.7 H975 H975 V396.6 H976 H976 V396.7 H977 H977 V397.9 H978 H978 V398.6 H979 H979 V397.9 H980 H980 V397.7 H981 H981 V399.1 H982 H982 V401.3 H983 H983 V397.9 H984 H984 V397.5 H985 H985 V397.9 H986 H986 V395.5 H987 H987 V394.5 H988 H988 V395.1 H989 H989 V395.1 H990 H990 V395.1 H991 H991 V397.6 H992 H992 V394.8 H993 H993 V393.9 H994 H994 V394.8 H995 H995 V396.6 H996 H996 V396.6 H997 H997 V396.2 H998 H998 V390.0 H999 H999 V390.0 H1000 H1000 V393.2 H1001 H1001 V394.3 H1002 H1002 V395.7 H1003 H1003 V397.4 H1004 H1004 V396.0 H1005 H1005 V393.4 H1006 H1006 V393.4 H1007 H1007 V394.2 H1008 H1008 V395.6 H1009 H1009 V398.4 H1010 H1010 V398.4 H1011 H1011 V394.3 H1012 H1012 V394.3 H1013 H1013 V396.3 H1014 H1014 V396.3 H1015 H1015 V393.1 H1016 H1016 V394.7 H1017 H1017 V396.3 H1018 H1018 V399.3 H1019 H1019 V394.5 H1020 H1020 V394.5 H1021 H1021 V396.0 H1022 H1022 V396.0 H1023 H1023 V395.3 H1024 H1024 V397.4 H1025 H1025 V395.3 H1026 H1026 V396.4 H1027 H1027 V396.4 H1028 H1028 V398.0 H1029 H1029 V394.1 H1030 H1030 V394.1 H1031 H1031 V397.5 H1032 H1032 V397.3 H1033 H1033 V395.6 H1034 H1034 V395.6 H1035 H1035 V396.2 H1036 H1036 V395.7 H1037 H1037 V397.4 H1038 H1038 V391.6 H1039 H1039 V391.6 H1040 H1040 V392.2 H1041 H1041 V392.2 H1042 H1042 V392.1 H1043 H1043 V396.7 H1044 H1044 V395.7 H1045 H1045 V398.7 H1046 H1046 V395.2 H1047 H1047 V395.1 H1048 H1048 V395.2 H1049 H1049 V398.4 H1050 H1050 V395.0 H1051 H1051 V398.4 H1052 H1052 V395.6 H1053 H1053 V395.6 H1054 H1054 V397.9 H1055 H1055 V396.7 H1056 H1056 V396.7 H1057 H1057 V396.5 H1058 H1058 V396.9 H1059 H1059 V396.9 H1060 H1060 V397.6 H1061 H1061 V397.6 H1062 H1062 V397.0 H1063 H1063 V397.4 H1064 H1064 V397.4 H1065 H1065 V397.2 H1066 H1066 V395.6 H1067 H1067 V394.1 H1068 H1068 V393.7 H1069 H1069 V393.7 H1070 H1070 V394.9 H1071 H1071 V394.9 H1072 H1072 V394.8 H1073 H1073 V394.2 H1074 H1074 V394.2 H1075 H1075 V395.1 H1076 H1076 V396.3 H1077 H1077 V397.0 H1078 H1078 V396.4 H1079 H1079 V392.9 H1080 H1080 V392.9 H1081 H1081 V392.9 H1082 H1082 V393.1 H1083 H1083 V396.5 H1084 H1084 V396.5 H1085 H1085 V396.3 H1086 H1086 V391.9 H1087 H1087 V391.9 H1088 H1088 V389.2 H1089 H1089 V395.6 H1090 H1090 V393.2 H1091 H1091 V395.6 H1092 H1092 V396.5 H1093 H1093 V396.3 H1094 H1094 V394.2 H1095 H1095 V394.2 H1096 H1096 V395.6 H1097 H1097 V395.6 H1098 H1098 V397.3 H1099 H1099 V394.0 H1100 H1100 V393.4 H1101 H1101 V393.4 H1102 H1102 V393.6 H1103 H1103 V389.7 H1104 H1104 V389.7 H1105 H1105 V389.7 H1106 H1106 V394.3 H1107 H1107 V391.4 H1108 H1108 V391.4 H1109 H1109 V392.6 H1110 H1110 V393.9 H1111 H1111 V392.6 H1112 H1112 V392.6 H1113 H1113 V394.4 H1114 H1114 V394.3 H1115 H1115 V394.3 H1116 H1116 V395.3 H1117 H1117 V396.1 H1118 H1118 V396.1 H1119 H1119 V396.6 H1120 H1120 V396.1 H1121 H1121 V394.7 H1122 H1122 V394.5 H1123 H1123 V393.1 H1124 H1124 V392.7 H1125 H1125 V392.7 H1126 H1126 V392.6 H1127 H1127 V392.6 H1128 H1128 V392.0 H1129 H1129 V391.2 H1130 H1130 V392.0 H1131 H1131 V394.0 H1132 H1132 V394.0 H1133 H1133 V393.7 H1134 H1134 V393.7 H1135 H1135 V393.7 H1136 H1136 V393.7 H1137 H1137 V392.7 H1138 H1138 V391.9 H1139 H1139 V391.9 H1140 H1140 V391.9 H1141 H1141 V393.3 H1142 H1142 V393.3 H1143 H1143 V393.3 H1144 H1144 V394.1 H1145 H1145 V393.5 H1146 H1146 V393.5 H1147 H1147 V393.5 H1148 H1148 V391.8 H1149 H1149 V388.1 H1150 H1150 V388.1 H1151 H1151 V390.8 H1152 H1152 V393.4 H1153 H1153 V392.6 H1154 H1154 V392.6 H1155 H1155 V392.6 H1156 H1156 V394.0 H1157 H1157 V392.9 H1158 H1158 V393.5 H1159 H1159 V392.9 H1160 H1160 V391.6 H1161 H1161 V392.7 H1162 H1162 V395.9 H1163 H1163 V395.6 H1164 H1164 V393.9 H1165 H1165 V393.9 H1166 H1166 V393.9 H1167 H1167 V394.3 H1168 H1168 V393.0 H1169 H1169 V393.0 H1170 H1170 V393.0 H1171 H1171 V394.3 H1172 H1172 V393.0 H1173 H1173 V393.1 H1174 H1174 V393.7 H1175 H1175 V394.5 H1176 H1176 V394.0 H1177 H1177 V391.1 H1178 H1178 V391.1 H1179 H1179 V391.8 H1180 H1180 V391.8 H1181 H1181 V391.8 H1182 H1182 V392.0 H1183 H1183 V394.6 H1184 H1184 V394.6 H1185 H1185 V391.8 H1186 H1186 V393.0 H1187 H1187 V393.0 H1188 H1188 V393.0 H1189 H1189 V394.1 H1190 H1190 V394.2 H1191 H1191 V393.7 H1192 H1192 V393.7 H1193 H1193 V393.7 H1194 H1194 V393.9 H1195 H1195 V392.3 H1196 H1196 V392.8 H1197 H1197 V392.8 H1198 H1198 V392.8 H1199 H1199 V393.0 H1200 H1200 V393.5 H1201 H1201 V393.0 H1202 H1202 V394.1 H1203 H1203 V393.8 H1204 H1204 V393.8 H1205 H1205 V393.2 H1206 H1206 V394.2 H1207 H1207 V394.4 H1208 H1208 V390.9 H1209 H1209 V390.9 H1210 H1210 V390.9 H1211 H1211 V392.3 H1212 H1212 V392.5 H1213 H1213 V391.5 H1214 H1214 V391.4 H1215 H1215 V391.4 H1216 H1216 V391.7 H1217 H1217 V392.6 H1218 H1218 V393.2 H1219 H1219 V393.8 H1220 H1220 V394.3 H1221 H1221 V395.0 H1222 H1222 V392.8 H1223 H1223 V392.0 H1224 H1224 V390.9 H1225 H1225 V390.5 H1226 H1226 V390.5 H1227 H1227 V391.8 H1228 H1228 V391.8 H1229 H1229 V391.9 H1230 H1230 V391.4 H1231 H1231 V391.4 H1232 H1232 V391.2 H1233 H1233 V391.2 H1234 H1234 V391.2 H1235 H1235 V392.1 H1236 H1236 V392.1 H1237 H1237 V392.8 H1238 H1238 V392.8 H1239 H1239 V393.4 H1240 H1240 V393.5 H1241 H1241 V392.3 H1242 H1242 V392.3 H1243 H1243 V392.3 H1244 H1244 V392.6 H1245 H1245 V392.4 H1246 H1246 V392.6 H1247 H1247 V390.2 H1248 H1248 V389.0 H1249 H1249 V392.2 H1250 H1250 V391.6 H1251 H1251 V391.6 H1252 H1252 V391.6 H1253 H1253 V391.7 H1254 H1254 V390.7 H1255 H1255 V390.7 H1256 H1256 V393.6 H1257 H1257 V393.6 H1258 H1258 V393.6 H1259 H1259 V392.1 H1260 H1260 V392.1 H1261 H1261 V392.1 H1262 H1262 V391.3 H1263 H1263 V390.1 H1264 H1264 V389.6 H1265 H1265 V389.6 H1266 H1266 V390.8 H1267 H1267 V390.8 H1268 H1268 V391.0 H1269 H1269 V391.0 H1270 H1270 V390.6 H1271 H1271 V389.4 H1272 H1272 V391.0 H1273 H1273 V391.2 H1274 H1274 V391.0 H1275 H1275 V392.4 H1276 H1276 V393.2 H1277 H1277 V392.1 H1278 H1278 V392.5 H1279 H1279 V392.1 H1280 H1280 V391.4 H1281 H1281 V391.4 H1282 H1282 V392.0 H1283 H1283 V392.0 H1284 H1284 V391.6 H1285 H1285 V391.4 H1286 H1286 V390.0 H1287 H1287 V390.0 H1288 H1288 V390.0 H1289 H1289 V390.4 H1290 H1290 V392.4 H1291 H1291 V391.7 H1292 H1292 V391.0 H1293 H1293 V390.9 H1294 H1294 V389.9 H1295 H1295 V391.2 H1296 H1296 V390.6 H1297 H1297 V391.2 H1298 H1298 V391.0 H1299 H1299 V391.6 H1300 H1300 V392.0 H1301 H1301 V391.0 H1302 H1302 V391.0 H1303 H1303 V391.0 H1304 H1304 V391.3 H1305 H1305 V392.1 H1306 H1306 V390.9 H1307 H1307 V389.5 H1308 H1308 V389.3 H1309 H1309 V389.5 H1310 H1310 V389.3 H1311 H1311 V389.2 H1312 H1312 V389.2 H1313 H1313 V389.2 H1314 H1314 V390.8 H1315 H1315 V392.0 H1316 H1316 V391.1 H1317 H1317 V391.1 H1318 H1318 V392.3 H1319 H1319 V391.2 H1320 H1320 V391.2 H1321 H1321 V390.4 H1322 H1322 V390.6 H1323 H1323 V390.6 H1324 H1324 V390.7 H1325 H1325 V390.7 H1326 H1326 V390.3 H1327 H1327 V390.3 H1328 H1328 V389.8 H1329 H1329 V389.8 H1330 H1330 V390.3 H1331 H1331 V390.3 H1332 H1332 V390.3 H1333 H1333 V390.9 H1334 H1334 V391.3 H1335 H1335 V390.3 H1336 H1336 V390.3 H1337 H1337 V391.2 H1338 H1338 V391.9 H1339 H1339 V392.4 H1340 H1340 V390.3 H1341 H1341 V388.3 H1342 H1342 V388.3 H1343 H1343 V391.7 H1344 H1344 V391.8 H1345 H1345 V391.7 H1346 H1346 V390.5 H1347 H1347 V390.5 H1348 H1348 V390.5 H1349 H1349 V390.5 H1350 H1350 V390.5 H1351 H1351 V391.0 H1352 H1352 V391.6 H1353 H1353 V389.8 H1354 H1354 V388.6 H1355 H1355 V388.6 H1356 H1356 V389.3 H1357 H1357 V391.1 H1358 H1358 V390.8 H1359 H1359 V389.7 H1360 H1360 V390.4 H1361 H1361 V390.4 H1362 H1362 V390.9 H1363 H1363 V390.8 H1364 H1364 V390.8 H1365 H1365 V390.8 H1366 H1366 V391.4 H1367 H1367 V390.9 H1368 H1368 V389.2 H1369 H1369 V391.2 H1370 H1370 V391.2 H1371 H1371 V390.2 H1372 H1372 V388.3 H1373 H1373 V388.3 H1374 H1374 V389.3 H1375 H1375 V389.3 H1376 H1376 V389.3 H1377 H1377 V389.6 H1378 H1378 V387.7 H1379 H1379 V387.7 H1380 H1380 V387.9 H1381 H1381 V389.0 H1382 H1382 V389.0 H1383 H1383 V389.9 H1384 H1384 V389.6 H1385 H1385 V390.0 H1386 H1386 V389.9 H1387 H1387 V389.2 H1388 H1388 V389.9 H1389 H1389 V389.2 H1390 H1390 V388.2 H1391 H1391 V389.1 H1392 H1392 V388.2 H1393 H1393 V389.1 H1394 H1394 V388.7 H1395 H1395 V389.1 H1396 H1396 V389.0 H1397 H1397 V389.0 H1398 H1398 V389.6 H1399 H1399 V389.6 H1400 H1400 V390.6 H1401 H1401 V390.7 H1402 H1402 V390.1 H1403 H1403 V390.1 H1404 H1404 V388.6 H1405 H1405 V388.6 H1406 H1406 V389.9 H1407 H1407 V389.9 H1408 H1408 V390.0 H1409 H1409 V390.3 H1410 H1410 V391.0 H1411 H1411 V391.0 H1412 H1412 V391.1 H1413 H1413 V391.1 H1414 H1414 V389.7 H1415 H1415 V388.2 H1416 H1416 V388.2 H1417 H1417 V388.2 H1418 H1418 V389.4 H1419 H1419 V390.3 H1420 H1420 V388.7 H1421 H1421 V388.7 H1422 H1422 V388.7 H1423 H1423 V389.5 H1424 H1424 V390.8 H1425 H1425 V389.5 H1426 H1426 V390.0 H1427 H1427 V390.0 H1428 H1428 V390.0 H1429 H1429 V389.2 H1430 H1430 V387.8 H1431 H1431 V389.2 H1432 H1432 V387.0 H1433 H1433 V388.8 H1434 H1434 V388.8 H1435 H1435 V389.1 H1436 H1436 V389.8 H1437 H1437 V389.8 H1438 H1438 V390.1 H1439 H1439 V391.4 H1440 H1440 V389.9 H1441 H1441 V389.5 H1442 H1442 V389.5 H1443 H1443 V389.6 H1444 H1444 V389.6 H1445 H1445 V388.7 H1446 H1446 V388.7 H1447 H1447 V390.0 H1448 H1448 V390.4 H1449 H1449 V389.2 H1450 H1450 V388.6 H1451 H1451 V388.6 H1452 H1452 V388.6 H1453 H1453 V389.7 H1454 H1454 V388.9 H1455 H1455 V388.9 H1456 H1456 V390.1 H1457 H1457 V390.0 H1458 H1458 V390.1 H1459 H1459 V390.3 H1460 H1460 V390.5 H1461 H1461 V389.4 H1462 H1462 V389.4 H1463 H1463 V390.4 H1464 H1464 V389.8 H1465 H1465 V389.8 H1466 H1466 V390.7 H1467 H1467 V389.4 H1468 H1468 V388.9 H1469 H1469 V388.9 H1470 H1470 V388.4 H1471 H1471 V388.4 H1472 H1472 V388.5 H1473 H1473 V390.1 H1474 H1474 V390.7 H1475 H1475 V390.9 H1476 H1476 V388.9 H1477 H1477 V390.0 H1478 H1478 V389.1 H1479 H1479 V387.7 H1480 H1480 V387.7 H1481 H1481 V389.2 H1482 H1482 V389.7 H1483 H1483 V389.5 H1484 H1484 V388.2 H1485 H1485 V388.2 H1486 H1486 V390.1 H1487 H1487 V389.5 H1488 H1488 V388.2 H1489 H1489 V388.2 H1490 H1490 V389.9 H1491 H1491 V390.4 H1492 H1492 V390.3 H1493 H1493 V389.5 H1494 H1494 V388.6 H1495 H1495 V388.6 H1496 H1496 V389.6 H1497 H1497 V389.5 H1498 H1498 V389.9 H1499 H1499 V390.0 H1500 H1500 V390.1 H1501 H1501 V390.2 H1502 H1502 V424.6 H1501 H1501 V425.7 H1500 H1500 V425.7 H1499 H1499 V423.2 H1498 H1498 V422.0 H1497 H1497 V427.4 H1496 H1496 V427.4 H1495 H1495 V421.4 H1494 H1494 V422.3 H1493 H1493 V422.3 H1492 H1492 V422.9 H1491 H1491 V423.4 H1490 H1490 V424.8 H1489 H1489 V424.8 H1488 H1488 V422.5 H1487 H1487 V421.6 H1486 H1486 V421.8 H1485 H1485 V425.6 H1484 H1484 V426.1 H1483 H1483 V426.5 H1482 H1482 V426.5 H1481 H1481 V425.5 H1480 H1480 V425.8 H1479 H1479 V423.1 H1478 H1478 V426.8 H1477 H1477 V426.8 H1476 H1476 V428.0 H1475 H1475 V424.6 H1474 H1474 V424.6 H1473 H1473 V422.9 H1472 H1472 V422.9 H1471 H1471 V422.5 H1470 H1470 V422.5 H1469 H1469 V425.8 H1468 H1468 V425.8 H1467 H1467 V422.1 H1466 H1466 V422.1 H1465 H1465 V427.4 H1464 H1464 V427.4 H1463 H1463 V424.4 H1462 H1462 V424.4 H1461 H1461 V425.4 H1460 H1460 V425.4 H1459 H1459 V424.8 H1458 H1458 V424.5 H1457 H1457 V426.6 H1456 H1456 V426.6 H1455 H1455 V423.2 H1454 H1454 V423.0 H1453 H1453 V422.4 H1452 H1452 V423.8 H1451 H1451 V423.2 H1450 H1450 V423.2 H1449 H1449 V422.5 H1448 H1448 V422.8 H1447 H1447 V422.8 H1446 H1446 V423.3 H1445 H1445 V423.3 H1444 H1444 V422.1 H1443 H1443 V420.3 H1442 H1442 V426.1 H1441 H1441 V422.4 H1440 H1440 V424.0 H1439 H1439 V423.7 H1438 H1438 V423.7 H1437 H1437 V422.8 H1436 H1436 V422.3 H1435 H1435 V422.3 H1434 H1434 V421.8 H1433 H1433 V420.7 H1432 H1432 V421.6 H1431 H1431 V427.8 H1430 H1430 V427.8 H1429 H1429 V427.7 H1428 H1428 V424.9 H1427 H1427 V424.9 H1426 H1426 V425.8 H1425 H1425 V425.8 H1424 H1424 V426.0 H1423 H1423 V426.0 H1422 H1422 V426.0 H1421 H1421 V425.6 H1420 H1420 V425.6 H1419 H1419 V425.6 H1418 H1418 V421.0 H1417 H1417 V422.2 H1416 H1416 V422.2 H1415 H1415 V427.4 H1414 H1414 V427.4 H1413 H1413 V425.7 H1412 H1412 V423.1 H1411 H1411 V426.1 H1410 H1410 V426.2 H1409 H1409 V426.2 H1408 H1408 V422.5 H1407 H1407 V422.5 H1406 H1406 V421.4 H1405 H1405 V422.5 H1404 H1404 V420.4 H1403 H1403 V419.8 H1402 H1402 V419.8 H1401 H1401 V421.5 H1400 H1400 V421.5 H1399 H1399 V420.5 H1398 H1398 V420.3 H1397 H1397 V422.5 H1396 H1396 V422.5 H1395 H1395 V423.0 H1394 H1394 V423.0 H1393 H1393 V420.2 H1392 H1392 V419.4 H1391 H1391 V418.3 H1390 H1390 V418.3 H1389 H1389 V430.5 H1388 H1388 V430.5 H1387 H1387 V429.0 H1386 H1386 V420.9 H1385 H1385 V423.1 H1384 H1384 V423.1 H1383 H1383 V423.1 H1382 H1382 V421.1 H1381 H1381 V422.1 H1380 H1380 V422.6 H1379 H1379 V424.6 H1378 H1378 V422.6 H1377 H1377 V422.0 H1376 H1376 V422.0 H1375 H1375 V423.1 H1374 H1374 V421.4 H1373 H1373 V422.2 H1372 H1372 V424.0 H1371 H1371 V424.0 H1370 H1370 V424.0 H1369 H1369 V420.8 H1368 H1368 V419.0 H1367 H1367 V417.5 H1366 H1366 V417.8 H1365 H1365 V419.7 H1364 H1364 V421.2 H1363 H1363 V421.9 H1362 H1362 V421.9 H1361 H1361 V424.6 H1360 H1360 V420.6 H1359 H1359 V420.6 H1358 H1358 V420.1 H1357 H1357 V420.1 H1356 H1356 V420.3 H1355 H1355 V420.3 H1354 H1354 V420.6 H1353 H1353 V419.1 H1352 H1352 V419.1 H1351 H1351 V420.6 H1350 H1350 V423.9 H1349 H1349 V423.9 H1348 H1348 V421.5 H1347 H1347 V420.2 H1346 H1346 V419.4 H1345 H1345 V421.6 H1344 H1344 V422.6 H1343 H1343 V422.6 H1342 H1342 V419.9 H1341 H1341 V419.1 H1340 H1340 V417.6 H1339 H1339 V419.9 H1338 H1338 V420.2 H1337 H1337 V419.9 H1336 H1336 V420.4 H1335 H1335 V421.4 H1334 H1334 V422.3 H1333 H1333 V421.4 H1332 H1332 V422.6 H1331 H1331 V422.6 H1330 H1330 V423.0 H1329 H1329 V423.0 H1328 H1328 V420.0 H1327 H1327 V417.5 H1326 H1326 V417.5 H1325 H1325 V419.6 H1324 H1324 V419.6 H1323 H1323 V420.2 H1322 H1322 V421.5 H1321 H1321 V421.5 H1320 H1320 V421.3 H1319 H1319 V420.3 H1318 H1318 V420.3 H1317 H1317 V420.0 H1316 H1316 V421.3 H1315 H1315 V421.3 H1314 H1314 V418.2 H1313 H1313 V416.0 H1312 H1312 V418.2 H1311 H1311 V415.4 H1310 H1310 V419.1 H1309 H1309 V416.2 H1308 H1308 V416.2 H1307 H1307 V416.2 H1306 H1306 V417.1 H1305 H1305 V419.0 H1304 H1304 V419.0 H1303 H1303 V417.7 H1302 H1302 V417.7 H1301 H1301 V416.8 H1300 H1300 V416.7 H1299 H1299 V418.7 H1298 H1298 V418.7 H1297 H1297 V418.3 H1296 H1296 V416.0 H1295 H1295 V416.2 H1294 H1294 V416.2 H1293 H1293 V416.2 H1292 H1292 V417.5 H1291 H1291 V416.5 H1290 H1290 V415.2 H1289 H1289 V414.3 H1288 H1288 V414.6 H1287 H1287 V419.1 H1286 H1286 V414.6 H1285 H1285 V421.6 H1284 H1284 V421.6 H1283 H1283 V421.6 H1282 H1282 V416.8 H1281 H1281 V416.8 H1280 H1280 V417.5 H1279 H1279 V417.8 H1278 H1278 V418.1 H1277 H1277 V418.7 H1276 H1276 V418.9 H1275 H1275 V418.7 H1274 H1274 V418.0 H1273 H1273 V418.5 H1272 H1272 V419.3 H1271 H1271 V419.3 H1270 H1270 V417.0 H1269 H1269 V415.3 H1268 H1268 V419.9 H1267 H1267 V419.9 H1266 H1266 V417.0 H1265 H1265 V417.3 H1264 H1264 V417.4 H1263 H1263 V420.1 H1262 H1262 V420.1 H1261 H1261 V415.2 H1260 H1260 V418.2 H1259 H1259 V418.2 H1258 H1258 V418.1 H1257 H1257 V416.2 H1256 H1256 V416.7 H1255 H1255 V417.2 H1254 H1254 V417.5 H1253 H1253 V417.9 H1252 H1252 V417.9 H1251 H1251 V414.7 H1250 H1250 V415.4 H1249 H1249 V419.0 H1248 H1248 V419.0 H1247 H1247 V419.4 H1246 H1246 V419.4 H1245 H1245 V417.2 H1244 H1244 V417.2 H1243 H1243 V417.2 H1242 H1242 V419.6 H1241 H1241 V414.4 H1240 H1240 V413.6 H1239 H1239 V419.0 H1238 H1238 V419.0 H1237 H1237 V414.7 H1236 H1236 V413.6 H1235 H1235 V415.8 H1234 H1234 V418.1 H1233 H1233 V419.3 H1232 H1232 V418.1 H1231 H1231 V416.7 H1230 H1230 V414.9 H1229 H1229 V414.9 H1228 H1228 V416.1 H1227 H1227 V416.1 H1226 H1226 V416.3 H1225 H1225 V413.8 H1224 H1224 V413.8 H1223 H1223 V417.9 H1222 H1222 V414.7 H1221 H1221 V414.7 H1220 H1220 V414.4 H1219 H1219 V422.5 H1218 H1218 V422.5 H1217 H1217 V415.8 H1216 H1216 V415.2 H1215 H1215 V414.5 H1214 H1214 V416.3 H1213 H1213 V425.2 H1212 H1212 V425.2 H1211 H1211 V422.2 H1210 H1210 V419.5 H1209 H1209 V420.7 H1208 H1208 V419.2 H1207 H1207 V414.6 H1206 H1206 V414.6 H1205 H1205 V415.9 H1204 H1204 V417.2 H1203 H1203 V417.2 H1202 H1202 V414.8 H1201 H1201 V417.3 H1200 H1200 V418.0 H1199 H1199 V420.0 H1198 H1198 V420.0 H1197 H1197 V412.9 H1196 H1196 V411.6 H1195 H1195 V414.6 H1194 H1194 V414.6 H1193 H1193 V411.3 H1192 H1192 V413.5 H1191 H1191 V415.6 H1190 H1190 V415.6 H1189 H1189 V414.7 H1188 H1188 V413.0 H1187 H1187 V414.7 H1186 H1186 V413.5 H1185 H1185 V413.5 H1184 H1184 V413.5 H1183 H1183 V412.8 H1182 H1182 V411.2 H1181 H1181 V415.9 H1180 H1180 V415.9 H1179 H1179 V415.9 H1178 H1178 V415.7 H1177 H1177 V415.7 H1176 H1176 V414.5 H1175 H1175 V414.5 H1174 H1174 V415.8 H1173 H1173 V415.8 H1172 H1172 V415.8 H1171 H1171 V412.7 H1170 H1170 V412.7 H1169 H1169 V417.3 H1168 H1168 V419.0 H1167 H1167 V419.0 H1166 H1166 V411.1 H1165 H1165 V415.6 H1164 H1164 V417.7 H1163 H1163 V417.7 H1162 H1162 V411.0 H1161 H1161 V415.8 H1160 H1160 V415.6 H1159 H1159 V413.5 H1158 H1158 V414.0 H1157 H1157 V415.5 H1156 H1156 V427.9 H1155 H1155 V427.9 H1154 H1154 V412.9 H1153 H1153 V412.9 H1152 H1152 V412.4 H1151 H1151 V412.4 H1150 H1150 V413.3 H1149 H1149 V413.3 H1148 H1148 V413.2 H1147 H1147 V415.4 H1146 H1146 V418.2 H1145 H1145 V415.4 H1144 H1144 V414.8 H1143 H1143 V414.8 H1142 H1142 V414.8 H1141 H1141 V411.6 H1140 H1140 V412.1 H1139 H1139 V414.1 H1138 H1138 V412.5 H1137 H1137 V414.6 H1136 H1136 V412.6 H1135 H1135 V408.5 H1134 H1134 V409.6 H1133 H1133 V413.1 H1132 H1132 V413.1 H1131 H1131 V412.5 H1130 H1130 V411.6 H1129 H1129 V411.5 H1128 H1128 V408.3 H1127 H1127 V413.4 H1126 H1126 V413.4 H1125 H1125 V412.2 H1124 H1124 V409.4 H1123 H1123 V412.4 H1122 H1122 V412.4 H1121 H1121 V412.4 H1120 H1120 V411.6 H1119 H1119 V411.6 H1118 H1118 V411.6 H1117 H1117 V407.1 H1116 H1116 V414.6 H1115 H1115 V412.0 H1114 H1114 V410.6 H1113 H1113 V413.9 H1112 H1112 V413.9 H1111 H1111 V413.9 H1110 H1110 V412.9 H1109 H1109 V411.5 H1108 H1108 V411.1 H1107 H1107 V411.1 H1106 H1106 V416.8 H1105 H1105 V416.8 H1104 H1104 V415.2 H1103 H1103 V412.7 H1102 H1102 V408.8 H1101 H1101 V411.9 H1100 H1100 V411.9 H1099 H1099 V409.8 H1098 H1098 V409.4 H1097 H1097 V412.5 H1096 H1096 V412.5 H1095 H1095 V413.2 H1094 H1094 V413.0 H1093 H1093 V413.3 H1092 H1092 V411.0 H1091 H1091 V416.0 H1090 H1090 V416.0 H1089 H1089 V416.1 H1088 H1088 V411.7 H1087 H1087 V410.5 H1086 H1086 V409.9 H1085 H1085 V408.2 H1084 H1084 V408.7 H1083 H1083 V411.3 H1082 H1082 V411.3 H1081 H1081 V408.8 H1080 H1080 V408.8 H1079 H1079 V407.0 H1078 H1078 V409.5 H1077 H1077 V410.1 H1076 H1076 V410.1 H1075 H1075 V409.0 H1074 H1074 V409.0 H1073 H1073 V410.9 H1072 H1072 V407.2 H1071 H1071 V409.0 H1070 H1070 V409.0 H1069 H1069 V408.8 H1068 H1068 V409.2 H1067 H1067 V409.2 H1066 H1066 V407.6 H1065 H1065 V406.8 H1064 H1064 V412.4 H1063 H1063 V412.4 H1062 H1062 V412.0 H1061 H1061 V412.0 H1060 H1060 V412.0 H1059 H1059 V413.6 H1058 H1058 V410.5 H1057 H1057 V407.4 H1056 H1056 V406.9 H1055 H1055 V407.4 H1054 H1054 V413.7 H1053 H1053 V413.7 H1052 H1052 V413.4 H1051 H1051 V411.8 H1050 H1050 V413.4 H1049 H1049 V411.0 H1048 H1048 V405.5 H1047 H1047 V404.5 H1046 H1046 V410.0 H1045 H1045 V410.0 H1044 H1044 V406.8 H1043 H1043 V406.8 H1042 H1042 V406.5 H1041 H1041 V412.6 H1040 H1040 V409.6 H1039 H1039 V409.6 H1038 H1038 V409.6 H1037 H1037 V408.5 H1036 H1036 V408.5 H1035 H1035 V402.1 H1034 H1034 V401.1 H1033 H1033 V406.2 H1032 H1032 V407.8 H1031 H1031 V408.5 H1030 H1030 V408.4 H1029 H1029 V408.4 H1028 H1028 V408.4 H1027 H1027 V409.1 H1026 H1026 V409.1 H1025 H1025 V409.8 H1024 H1024 V407.8 H1023 H1023 V407.8 H1022 H1022 V407.8 H1021 H1021 V418.1 H1020 H1020 V418.1 H1019 H1019 V410.5 H1018 H1018 V410.1 H1017 H1017 V410.1 H1016 H1016 V410.1 H1015 H1015 V407.4 H1014 H1014 V412.3 H1013 H1013 V412.3 H1012 H1012 V406.7 H1011 H1011 V406.7 H1010 H1010 V411.3 H1009 H1009 V411.3 H1008 H1008 V408.6 H1007 H1007 V401.6 H1006 H1006 V402.0 H1005 H1005 V407.4 H1004 H1004 V409.8 H1003 H1003 V409.9 H1002 H1002 V406.4 H1001 H1001 V405.9 H1000 H1000 V403.3 H999 H999 V403.3 H998 H998 V405.4 H997 H997 V409.9 H996 H996 V409.1 H995 H995 V403.1 H994 H994 V403.1 H993 H993 V405.4 H992 H992 V409.6 H991 H991 V404.5 H990 H990 V404.0 H989 H989 V404.5 H988 H988 V402.4 H987 H987 V405.5 H986 H986 V400.9 H985 H985 V401.1 H984 H984 V406.7 H983 H983 V406.7 H982 H982 V404.5 H981 H981 V406.3 H980 H980 V406.6 H979 H979 V406.6 H978 H978 V404.3 H977 H977 V404.1 H976 H976 V404.1 H975 H975 V404.6 H974 H974 V404.6 H973 H973 V402.4 H972 H972 V396.4 H971 H971 V398.1 H970 H970 V399.5 H969 H969 V405.4 H968 H968 V405.4 H967 H967 V402.6 H966 H966 V402.6 H965 H965 V405.6 H964 H964 V405.5 H963 H963 V399.5 H962 H962 V403.8 H961 H961 V404.2 H960 H960 V404.2 H959 H959 V404.2 H958 H958 V399.0 H957 H957 V403.9 H956 H956 V407.4 H955 H955 V407.4 H954 H954 V407.4 H953 H953 V405.2 H952 H952 V405.2 H951 H951 V403.4 H950 H950 V398.7 H949 H949 V398.7 H948 H948 V398.7 H947 H947 V398.7 H946 H946 V402.4 H945 H945 V402.4 H944 H944 V402.8 H943 H943 V404.3 H942 H942 V401.9 H941 H941 V406.5 H940 H940 V399.3 H939 H939 V402.1 H938 H938 V402.1 H937 H937 V398.5 H936 H936 V396.7 H935Z" fill="#39579c"/><path clip-path="url(#c2)" d="M954 401.4 H954 V401.4 H955 H955 V401.1 H956 H956 V398.6 H957 H957 V401.5 H956 H956 V403.9 H955 H955 V403.9 H954Z M958 396.8 H958 V396.8 H959 H959 V402.3 H960 H960 V400.8 H961 H961 V399.1 H962 H962 V398.4 H963 H963 V398.4 H964 H964 V398.4 H965 H965 V399.0 H966 H966 V397.6 H967 H967 V397.6 H968 H968 V395.8 H969 H969 V397.2 H970 H970 V395.0 H971 H971 V397.6 H970 H970 V398.1 H969 H969 V399.5 H968 H968 V399.5 H967 H967 V400.3 H966 H966 V400.3 H965 H965 V402.6 H964 H964 V399.5 H963 H963 V399.5 H962 H962 V401.2 H961 H961 V403.8 H960 H960 V403.8 H959 H959 V402.7 H958Z M972 394.6 H972 V394.6 H973 H973 V397.1 H974 H974 V397.1 H975 H975 V396.7 H976 H976 V397.5 H977 H977 V398.6 H978 H978 V401.5 H979 H979 V399.1 H980 H980 V399.1 H981 H981 V401.7 H982 H982 V403.0 H983 H983 V399.2 H984 H984 V397.9 H985 H985 V398.3 H986 H986 V398.3 H987 H987 V395.5 H988 H988 V395.5 H989 H989 V396.5 H990 H990 V397.6 H991 H991 V398.8 H992 H992 V395.4 H993 H993 V394.8 H994 H994 V395.4 H995 H995 V397.1 H996 H996 V398.7 H997 H997 V396.6 H998 H998 V394.1 H999 H999 V394.1 H1000 H1000 V394.3 H1001 H1001 V399.1 H1002 H1002 V399.1 H1003 H1003 V399.1 H1004 H1004 V397.4 H1005 H1005 V393.6 H1006 H1006 V393.6 H1007 H1007 V395.6 H1008 H1008 V398.5 H1009 H1009 V398.5 H1010 H1010 V398.5 H1011 H1011 V398.4 H1012 H1012 V397.3 H1013 H1013 V397.3 H1014 H1014 V397.3 H1015 H1015 V396.3 H1016 H1016 V396.3 H1017 H1017 V399.3 H1018 H1018 V400.6 H1019 H1019 V396.4 H1020 H1020 V396.4 H1021 H1021 V396.2 H1022 H1022 V396.2 H1023 H1023 V397.1 H1024 H1024 V399.9 H1025 H1025 V397.4 H1026 H1026 V398.0 H1027 H1027 V398.0 H1028 H1028 V398.9 H1029 H1029 V399.2 H1030 H1030 V397.3 H1031 H1031 V399.0 H1032 H1032 V397.3 H1033 H1033 V397.3 H1034 H1034 V395.7 H1035 H1035 V396.3 H1036 H1036 V396.2 H1037 H1037 V399.2 H1038 H1038 V397.4 H1039 H1039 V393.6 H1040 H1040 V393.6 H1041 H1041 V393.6 H1042 H1042 V396.3 H1043 H1043 V396.9 H1044 H1044 V397.5 H1045 H1045 V399.4 H1046 H1046 V395.7 H1047 H1047 V395.2 H1048 H1048 V397.2 H1049 H1049 V398.8 H1050 H1050 V398.4 H1051 H1051 V400.5 H1052 H1052 V399.5 H1053 H1053 V397.9 H1054 H1054 V399.5 H1055 H1055 V397.1 H1056 H1056 V397.1 H1057 H1057 V396.7 H1058 H1058 V398.9 H1059 H1059 V397.6 H1060 H1060 V398.2 H1061 H1061 V398.2 H1062 H1062 V398.6 H1063 H1063 V398.4 H1064 H1064 V398.4 H1065 H1065 V397.4 H1066 H1066 V396.1 H1067 H1067 V395.0 H1068 H1068 V394.1 H1069 H1069 V394.1 H1070 H1070 V397.2 H1071 H1071 V397.2 H1072 H1072 V396.6 H1073 H1073 V394.8 H1074 H1074 V395.1 H1075 H1075 V396.3 H1076 H1076 V397.0 H1077 H1077 V397.4 H1078 H1078 V396.4 H1079 H1079 V393.9 H1080 H1080 V393.4 H1081 H1081 V393.1 H1082 H1082 V393.4 H1083 H1083 V397.3 H1084 H1084 V397.3 H1085 H1085 V397.7 H1086 H1086 V394.5 H1087 H1087 V394.3 H1088 H1088 V394.3 H1089 H1089 V396.6 H1090 H1090 V395.6 H1091 H1091 V396.5 H1092 H1092 V396.6 H1093 H1093 V396.5 H1094 H1094 V395.2 H1095 H1095 V395.2 H1096 H1096 V396.2 H1097 H1097 V396.2 H1098 H1098 V397.8 H1099 H1099 V395.5 H1100 H1100 V395.5 H1101 H1101 V395.5 H1102 H1102 V395.7 H1103 H1103 V393.5 H1104 H1104 V393.1 H1105 H1105 V393.1 H1106 H1106 V395.3 H1107 H1107 V395.4 H1108 H1108 V392.6 H1109 H1109 V393.9 H1110 H1110 V395.4 H1111 H1111 V393.9 H1112 H1112 V394.4 H1113 H1113 V394.8 H1114 H1114 V394.4 H1115 H1115 V394.8 H1116 H1116 V395.6 H1117 H1117 V396.5 H1118 H1118 V396.9 H1119 H1119 V397.3 H1120 H1120 V396.6 H1121 H1121 V395.7 H1122 H1122 V394.7 H1123 H1123 V394.5 H1124 H1124 V393.1 H1125 H1125 V394.8 H1126 H1126 V392.7 H1127 H1127 V392.8 H1128 H1128 V392.8 H1129 H1129 V392.0 H1130 H1130 V394.1 H1131 H1131 V394.1 H1132 H1132 V396.2 H1133 H1133 V393.8 H1134 H1134 V393.7 H1135 H1135 V394.7 H1136 H1136 V394.7 H1137 H1137 V392.7 H1138 H1138 V392.0 H1139 H1139 V392.0 H1140 H1140 V393.0 H1141 H1141 V394.0 H1142 H1142 V394.1 H1143 H1143 V394.1 H1144 H1144 V394.4 H1145 H1145 V394.3 H1146 H1146 V394.3 H1147 H1147 V394.3 H1148 H1148 V392.4 H1149 H1149 V389.9 H1150 H1150 V389.9 H1151 H1151 V391.5 H1152 H1152 V393.6 H1153 H1153 V393.4 H1154 H1154 V393.4 H1155 H1155 V394.9 H1156 H1156 V396.5 H1157 H1157 V394.0 H1158 H1158 V393.9 H1159 H1159 V393.5 H1160 H1160 V392.7 H1161 H1161 V394.5 H1162 H1162 V396.2 H1163 H1163 V395.9 H1164 H1164 V395.0 H1165 H1165 V395.0 H1166 H1166 V395.3 H1167 H1167 V394.7 H1168 H1168 V394.3 H1169 H1169 V394.3 H1170 H1170 V394.3 H1171 H1171 V394.3 H1172 H1172 V393.1 H1173 H1173 V393.7 H1174 H1174 V394.0 H1175 H1175 V394.6 H1176 H1176 V394.5 H1177 H1177 V395.9 H1178 H1178 V393.5 H1179 H1179 V393.5 H1180 H1180 V392.0 H1181 H1181 V392.0 H1182 H1182 V392.7 H1183 H1183 V394.6 H1184 H1184 V394.6 H1185 H1185 V395.1 H1186 H1186 V395.1 H1187 H1187 V395.5 H1188 H1188 V394.1 H1189 H1189 V394.2 H1190 H1190 V394.5 H1191 H1191 V394.0 H1192 H1192 V393.7 H1193 H1193 V394.0 H1194 H1194 V394.0 H1195 H1195 V392.8 H1196 H1196 V393.0 H1197 H1197 V392.8 H1198 H1198 V393.7 H1199 H1199 V393.5 H1200 H1200 V394.2 H1201 H1201 V393.5 H1202 H1202 V394.4 H1203 H1203 V394.1 H1204 H1204 V394.2 H1205 H1205 V393.8 H1206 H1206 V394.4 H1207 H1207 V394.4 H1208 H1208 V391.8 H1209 H1209 V391.3 H1210 H1210 V391.3 H1211 H1211 V392.7 H1212 H1212 V392.7 H1213 H1213 V391.7 H1214 H1214 V391.5 H1215 H1215 V391.5 H1216 H1216 V392.5 H1217 H1217 V393.4 H1218 H1218 V393.4 H1219 H1219 V394.3 H1220 H1220 V394.4 H1221 H1221 V395.5 H1222 H1222 V395.5 H1223 H1223 V392.2 H1224 H1224 V391.6 H1225 H1225 V390.9 H1226 H1226 V391.6 H1227 H1227 V393.3 H1228 H1228 V391.9 H1229 H1229 V393.8 H1230 H1230 V393.8 H1231 H1231 V394.6 H1232 H1232 V393.5 H1233 H1233 V392.1 H1234 H1234 V392.1 H1235 H1235 V394.0 H1236 H1236 V392.8 H1237 H1237 V393.6 H1238 H1238 V393.4 H1239 H1239 V394.1 H1240 H1240 V394.0 H1241 H1241 V392.6 H1242 H1242 V392.6 H1243 H1243 V392.4 H1244 H1244 V392.8 H1245 H1245 V392.6 H1246 H1246 V392.8 H1247 H1247 V393.0 H1248 H1248 V390.2 H1249 H1249 V392.8 H1250 H1250 V392.2 H1251 H1251 V392.2 H1252 H1252 V392.3 H1253 H1253 V392.3 H1254 H1254 V391.7 H1255 H1255 V391.7 H1256 H1256 V393.9 H1257 H1257 V393.8 H1258 H1258 V393.6 H1259 H1259 V392.9 H1260 H1260 V392.9 H1261 H1261 V392.4 H1262 H1262 V391.8 H1263 H1263 V391.3 H1264 H1264 V390.1 H1265 H1265 V390.6 H1266 H1266 V391.5 H1267 H1267 V391.0 H1268 H1268 V392.2 H1269 H1269 V392.6 H1270 H1270 V391.4 H1271 H1271 V391.4 H1272 H1272 V391.4 H1273 H1273 V392.4 H1274 H1274 V391.2 H1275 H1275 V392.4 H1276 H1276 V393.4 H1277 H1277 V392.5 H1278 H1278 V393.3 H1279 H1279 V392.5 H1280 H1280 V392.2 H1281 H1281 V392.0 H1282 H1282 V392.0 H1283 H1283 V392.5 H1284 H1284 V392.0 H1285 H1285 V391.6 H1286 H1286 V391.4 H1287 H1287 V392.2 H1288 H1288 V390.4 H1289 H1289 V392.2 H1290 H1290 V392.4 H1291 H1291 V392.4 H1292 H1292 V391.7 H1293 H1293 V391.7 H1294 H1294 V390.9 H1295 H1295 V392.1 H1296 H1296 V391.2 H1297 H1297 V392.1 H1298 H1298 V391.6 H1299 H1299 V392.0 H1300 H1300 V392.1 H1301 H1301 V391.0 H1302 H1302 V391.0 H1303 H1303 V391.1 H1304 H1304 V391.6 H1305 H1305 V392.7 H1306 H1306 V391.6 H1307 H1307 V390.9 H1308 H1308 V389.5 H1309 H1309 V391.4 H1310 H1310 V390.8 H1311 H1311 V390.8 H1312 H1312 V389.2 H1313 H1313 V390.6 H1314 H1314 V391.9 H1315 H1315 V392.3 H1316 H1316 V392.0 H1317 H1317 V392.3 H1318 H1318 V392.5 H1319 H1319 V391.8 H1320 H1320 V391.8 H1321 H1321 V391.3 H1322 H1322 V391.3 H1323 H1323 V390.7 H1324 H1324 V391.5 H1325 H1325 V391.7 H1326 H1326 V391.7 H1327 H1327 V390.6 H1328 H1328 V390.6 H1329 H1329 V390.6 H1330 H1330 V391.5 H1331 H1331 V391.8 H1332 H1332 V392.4 H1333 H1333 V391.3 H1334 H1334 V391.3 H1335 H1335 V390.9 H1336 H1336 V391.2 H1337 H1337 V391.3 H1338 H1338 V392.5 H1339 H1339 V392.5 H1340 H1340 V391.9 H1341 H1341 V390.3 H1342 H1342 V390.3 H1343 H1343 V392.3 H1344 H1344 V392.3 H1345 H1345 V391.8 H1346 H1346 V391.2 H1347 H1347 V391.2 H1348 H1348 V390.8 H1349 H1349 V390.8 H1350 H1350 V390.8 H1351 H1351 V391.5 H1352 H1352 V391.6 H1353 H1353 V390.4 H1354 H1354 V389.3 H1355 H1355 V389.3 H1356 H1356 V390.9 H1357 H1357 V391.3 H1358 H1358 V390.9 H1359 H1359 V390.4 H1360 H1360 V390.8 H1361 H1361 V391.1 H1362 H1362 V391.1 H1363 H1363 V390.9 H1364 H1364 V390.8 H1365 H1365 V391.3 H1366 H1366 V391.6 H1367 H1367 V391.4 H1368 H1368 V390.9 H1369 H1369 V392.2 H1370 H1370 V391.6 H1371 H1371 V391.6 H1372 H1372 V390.1 H1373 H1373 V389.3 H1374 H1374 V389.3 H1375 H1375 V389.3 H1376 H1376 V389.4 H1377 H1377 V390.2 H1378 H1378 V389.0 H1379 H1379 V389.0 H1380 H1380 V389.0 H1381 H1381 V392.0 H1382 H1382 V389.9 H1383 H1383 V390.7 H1384 H1384 V389.9 H1385 H1385 V390.2 H1386 H1386 V390.0 H1387 H1387 V389.9 H1388 H1388 V391.0 H1389 H1389 V391.0 H1390 H1390 V389.2 H1391 H1391 V389.2 H1392 H1392 V389.1 H1393 H1393 V389.2 H1394 H1394 V389.1 H1395 H1395 V389.2 H1396 H1396 V390.4 H1397 H1397 V389.9 H1398 H1398 V389.9 H1399 H1399 V390.6 H1400 H1400 V391.1 H1401 H1401 V390.8 H1402 H1402 V390.4 H1403 H1403 V390.7 H1404 H1404 V390.6 H1405 H1405 V390.6 H1406 H1406 V390.0 H1407 H1407 V390.0 H1408 H1408 V390.3 H1409 H1409 V391.0 H1410 H1410 V391.5 H1411 H1411 V391.5 H1412 H1412 V391.4 H1413 H1413 V391.4 H1414 H1414 V391.0 H1415 H1415 V389.1 H1416 H1416 V389.1 H1417 H1417 V388.6 H1418 H1418 V390.3 H1419 H1419 V390.8 H1420 H1420 V389.4 H1421 H1421 V389.4 H1422 H1422 V389.4 H1423 H1423 V390.4 H1424 H1424 V391.6 H1425 H1425 V390.4 H1426 H1426 V390.0 H1427 H1427 V390.0 H1428 H1428 V390.0 H1429 H1429 V391.1 H1430 H1430 V389.2 H1431 H1431 V389.7 H1432 H1432 V389.2 H1433 H1433 V389.6 H1434 H1434 V389.1 H1435 H1435 V389.6 H1436 H1436 V390.1 H1437 H1437 V390.1 H1438 H1438 V390.5 H1439 H1439 V391.5 H1440 H1440 V391.1 H1441 H1441 V389.9 H1442 H1442 V389.9 H1443 H1443 V389.9 H1444 H1444 V389.9 H1445 H1445 V389.6 H1446 H1446 V390.0 H1447 H1447 V390.0 H1448 H1448 V390.4 H1449 H1449 V390.3 H1450 H1450 V389.2 H1451 H1451 V388.6 H1452 H1452 V389.7 H1453 H1453 V390.1 H1454 H1454 V389.7 H1455 H1455 V390.1 H1456 H1456 V390.1 H1457 H1457 V390.1 H1458 H1458 V390.3 H1459 H1459 V390.3 H1460 H1460 V390.9 H1461 H1461 V389.7 H1462 H1462 V389.7 H1463 H1463 V390.4 H1464 H1464 V390.4 H1465 H1465 V390.5 H1466 H1466 V390.9 H1467 H1467 V390.7 H1468 H1468 V389.0 H1469 H1469 V389.0 H1470 H1470 V388.9 H1471 H1471 V388.7 H1472 H1472 V388.7 H1473 H1473 V390.2 H1474 H1474 V390.7 H1475 H1475 V391.0 H1476 H1476 V390.0 H1477 H1477 V390.0 H1478 H1478 V390.0 H1479 H1479 V388.1 H1480 H1480 V388.1 H1481 H1481 V389.5 H1482 H1482 V390.0 H1483 H1483 V389.7 H1484 H1484 V389.5 H1485 H1485 V390.1 H1486 H1486 V390.7 H1487 H1487 V389.9 H1488 H1488 V389.4 H1489 H1489 V389.4 H1490 H1490 V390.0 H1491 H1491 V390.4 H1492 H1492 V390.6 H1493 H1493 V390.0 H1494 H1494 V389.5 H1495 H1495 V389.5 H1496 H1496 V389.7 H1497 H1497 V389.9 H1498 H1498 V390.0 H1499 H1499 V390.1 H1500 H1500 V390.2 H1501 H1501 V390.3 H1502 H1502 V423.9 H1501 H1501 V424.8 H1500 H1500 V424.8 H1499 H1499 V420.8 H1498 H1498 V420.8 H1497 H1497 V423.2 H1496 H1496 V422.7 H1495 H1495 V421.3 H1494 H1494 V421.4 H1493 H1493 V422.0 H1492 H1492 V422.3 H1491 H1491 V423.2 H1490 H1490 V424.4 H1489 H1489 V424.4 H1488 H1488 V420.7 H1487 H1487 V421.5 H1486 H1486 V421.6 H1485 H1485 V423.3 H1484 H1484 V425.6 H1483 H1483 V425.6 H1482 H1482 V425.8 H1481 H1481 V425.0 H1480 H1480 V423.0 H1479 H1479 V423.0 H1478 H1478 V423.1 H1477 H1477 V422.2 H1476 H1476 V426.8 H1475 H1475 V422.2 H1474 H1474 V422.5 H1473 H1473 V422.5 H1472 H1472 V422.4 H1471 H1471 V422.4 H1470 H1470 V421.0 H1469 H1469 V423.0 H1468 H1468 V423.0 H1467 H1467 V421.8 H1466 H1466 V421.2 H1465 H1465 V423.8 H1464 H1464 V423.8 H1463 H1463 V423.8 H1462 H1462 V423.5 H1461 H1461 V424.8 H1460 H1460 V424.8 H1459 H1459 V424.5 H1458 H1458 V423.7 H1457 H1457 V421.0 H1456 H1456 V423.0 H1455 H1455 V423.0 H1454 H1454 V422.4 H1453 H1453 V420.8 H1452 H1452 V422.4 H1451 H1451 V421.4 H1450 H1450 V422.5 H1449 H1449 V421.4 H1448 H1448 V422.5 H1447 H1447 V420.6 H1446 H1446 V422.6 H1445 H1445 V422.6 H1444 H1444 V420.3 H1443 H1443 V419.2 H1442 H1442 V422.4 H1441 H1441 V422.1 H1440 H1440 V423.7 H1439 H1439 V420.2 H1438 H1438 V420.5 H1437 H1437 V422.3 H1436 H1436 V421.1 H1435 H1435 V421.6 H1434 H1434 V421.6 H1433 H1433 V420.5 H1432 H1432 V421.0 H1431 H1431 V421.9 H1430 H1430 V421.9 H1429 H1429 V424.6 H1428 H1428 V424.6 H1427 H1427 V424.6 H1426 H1426 V422.7 H1425 H1425 V422.7 H1424 H1424 V425.8 H1423 H1423 V426.0 H1422 H1422 V425.1 H1421 H1421 V425.1 H1420 H1420 V425.1 H1419 H1419 V424.2 H1418 H1418 V421.0 H1417 H1417 V419.8 H1416 H1416 V421.9 H1415 H1415 V422.2 H1414 H1414 V421.9 H1413 H1413 V421.4 H1412 H1412 V423.0 H1411 H1411 V423.1 H1410 H1410 V426.1 H1409 H1409 V426.1 H1408 H1408 V421.4 H1407 H1407 V421.4 H1406 H1406 V420.5 H1405 H1405 V420.4 H1404 H1404 V419.8 H1403 H1403 V419.7 H1402 H1402 V419.6 H1401 H1401 V420.5 H1400 H1400 V420.5 H1399 H1399 V420.0 H1398 H1398 V420.3 H1397 H1397 V422.3 H1396 H1396 V422.3 H1395 H1395 V422.5 H1394 H1394 V420.2 H1393 H1393 V419.4 H1392 H1392 V419.4 H1391 H1391 V417.0 H1390 H1390 V417.0 H1389 H1389 V421.2 H1388 H1388 V429.0 H1387 H1387 V423.2 H1386 H1386 V420.8 H1385 H1385 V421.0 H1384 H1384 V421.0 H1383 H1383 V422.1 H1382 H1382 V420.8 H1381 H1381 V421.1 H1380 H1380 V421.1 H1379 H1379 V422.6 H1378 H1378 V422.0 H1377 H1377 V421.8 H1376 H1376 V421.8 H1375 H1375 V421.4 H1374 H1374 V420.7 H1373 H1373 V422.0 H1372 H1372 V422.2 H1371 H1371 V420.8 H1370 H1370 V422.9 H1369 H1369 V420.5 H1368 H1368 V417.5 H1367 H1367 V416.4 H1366 H1366 V417.5 H1365 H1365 V418.8 H1364 H1364 V421.1 H1363 H1363 V421.1 H1362 H1362 V421.1 H1361 H1361 V419.9 H1360 H1360 V418.6 H1359 H1359 V420.1 H1358 H1358 V420.1 H1357 H1357 V418.2 H1356 H1356 V420.2 H1355 H1355 V420.2 H1354 H1354 V419.5 H1353 H1353 V418.7 H1352 H1352 V418.7 H1351 H1351 V418.7 H1350 H1350 V421.5 H1349 H1349 V421.5 H1348 H1348 V420.2 H1347 H1347 V419.4 H1346 H1346 V419.1 H1345 H1345 V419.1 H1344 H1344 V419.9 H1343 H1343 V419.9 H1342 H1342 V419.1 H1341 H1341 V418.3 H1340 H1340 V417.6 H1339 H1339 V417.7 H1338 H1338 V419.9 H1337 H1337 V418.6 H1336 H1336 V418.6 H1335 H1335 V421.0 H1334 H1334 V421.4 H1333 H1333 V421.0 H1332 H1332 V421.3 H1331 H1331 V421.3 H1330 H1330 V422.6 H1329 H1329 V420.0 H1328 H1328 V416.3 H1327 H1327 V416.3 H1326 H1326 V417.2 H1325 H1325 V417.2 H1324 H1324 V417.2 H1323 H1323 V418.8 H1322 H1322 V420.9 H1321 H1321 V421.3 H1320 H1320 V420.2 H1319 H1319 V420.2 H1318 H1318 V420.0 H1317 H1317 V415.8 H1316 H1316 V417.2 H1315 H1315 V417.2 H1314 H1314 V416.0 H1313 H1313 V414.7 H1312 H1312 V416.0 H1311 H1311 V414.6 H1310 H1310 V416.2 H1309 H1309 V415.9 H1308 H1308 V415.9 H1307 H1307 V415.9 H1306 H1306 V416.2 H1305 H1305 V418.8 H1304 H1304 V418.4 H1303 H1303 V417.4 H1302 H1302 V417.4 H1301 H1301 V416.7 H1300 H1300 V416.7 H1299 H1299 V418.3 H1298 H1298 V418.3 H1297 H1297 V415.8 H1296 H1296 V415.8 H1295 H1295 V416.0 H1294 H1294 V415.6 H1293 H1293 V416.2 H1292 H1292 V416.5 H1291 H1291 V416.2 H1290 H1290 V414.1 H1289 H1289 V414.1 H1288 H1288 V414.3 H1287 H1287 V414.6 H1286 H1286 V413.9 H1285 H1285 V414.6 H1284 H1284 V414.6 H1283 H1283 V416.8 H1282 H1282 V415.9 H1281 H1281 V416.2 H1280 H1280 V416.8 H1279 H1279 V416.2 H1278 H1278 V417.8 H1277 H1277 V417.8 H1276 H1276 V418.7 H1275 H1275 V418.4 H1274 H1274 V416.4 H1273 H1273 V416.4 H1272 H1272 V418.5 H1271 H1271 V418.5 H1270 H1270 V416.3 H1269 H1269 V415.1 H1268 H1268 V417.9 H1267 H1267 V417.9 H1266 H1266 V414.6 H1265 H1265 V417.0 H1264 H1264 V417.3 H1263 H1263 V414.1 H1262 H1262 V414.1 H1261 H1261 V414.7 H1260 H1260 V418.1 H1259 H1259 V418.1 H1258 H1258 V417.5 H1257 H1257 V415.2 H1256 H1256 V416.4 H1255 H1255 V416.4 H1254 H1254 V417.2 H1253 H1253 V417.5 H1252 H1252 V416.2 H1251 H1251 V413.3 H1250 H1250 V414.7 H1249 H1249 V418.2 H1248 H1248 V418.2 H1247 H1247 V419.0 H1246 H1246 V414.4 H1245 H1245 V411.7 H1244 H1244 V414.1 H1243 H1243 V414.1 H1242 H1242 V414.4 H1241 H1241 V413.4 H1240 H1240 V413.4 H1239 H1239 V416.1 H1238 H1238 V416.1 H1237 H1237 V413.6 H1236 H1236 V413.5 H1235 H1235 V415.4 H1234 H1234 V417.0 H1233 H1233 V418.1 H1232 H1232 V417.0 H1231 H1231 V413.6 H1230 H1230 V413.6 H1229 H1229 V412.5 H1228 H1228 V413.2 H1227 H1227 V413.2 H1226 H1226 V416.1 H1225 H1225 V410.3 H1224 H1224 V410.7 H1223 H1223 V412.9 H1222 H1222 V412.9 H1221 H1221 V412.9 H1220 H1220 V414.2 H1219 H1219 V414.7 H1218 H1218 V415.2 H1217 H1217 V415.2 H1216 H1216 V413.8 H1215 H1215 V413.5 H1214 H1214 V415.2 H1213 H1213 V416.3 H1212 H1212 V414.0 H1211 H1211 V419.5 H1210 H1210 V419.2 H1209 H1209 V419.2 H1208 H1208 V414.1 H1207 H1207 V414.1 H1206 H1206 V414.1 H1205 H1205 V414.6 H1204 H1204 V415.9 H1203 H1203 V414.4 H1202 H1202 V414.4 H1201 H1201 V414.8 H1200 H1200 V417.3 H1199 H1199 V419.0 H1198 H1198 V419.0 H1197 H1197 V411.6 H1196 H1196 V410.1 H1195 H1195 V412.3 H1194 H1194 V412.3 H1193 H1193 V409.8 H1192 H1192 V412.0 H1191 H1191 V413.5 H1190 H1190 V412.0 H1189 H1189 V411.7 H1188 H1188 V411.7 H1187 H1187 V413.0 H1186 H1186 V412.1 H1185 H1185 V411.4 H1184 H1184 V412.8 H1183 H1183 V411.2 H1182 H1182 V410.8 H1181 H1181 V412.8 H1180 H1180 V412.8 H1179 H1179 V411.6 H1178 H1178 V415.7 H1177 H1177 V414.5 H1176 H1176 V414.5 H1175 H1175 V414.5 H1174 H1174 V414.7 H1173 H1173 V414.7 H1172 H1172 V413.3 H1171 H1171 V412.0 H1170 H1170 V412.0 H1169 H1169 V416.3 H1168 H1168 V416.3 H1167 H1167 V416.3 H1166 H1166 V411.0 H1165 H1165 V413.6 H1164 H1164 V413.6 H1163 H1163 V415.8 H1162 H1162 V410.3 H1161 H1161 V415.6 H1160 H1160 V413.5 H1159 H1159 V412.3 H1158 H1158 V412.3 H1157 H1157 V414.0 H1156 H1156 V415.5 H1155 H1155 V412.9 H1154 H1154 V412.5 H1153 H1153 V409.3 H1152 H1152 V409.3 H1151 H1151 V409.8 H1150 H1150 V411.2 H1149 H1149 V411.2 H1148 H1148 V408.6 H1147 H1147 V413.7 H1146 H1146 V415.4 H1145 H1145 V413.7 H1144 H1144 V413.5 H1143 H1143 V413.5 H1142 H1142 V410.7 H1141 H1141 V410.4 H1140 H1140 V411.6 H1139 H1139 V412.5 H1138 H1138 V412.1 H1137 H1137 V412.6 H1136 H1136 V408.5 H1135 H1135 V408.0 H1134 H1134 V409.6 H1133 H1133 V412.5 H1132 H1132 V412.5 H1131 H1131 V412.0 H1130 H1130 V411.5 H1129 H1129 V408.3 H1128 H1128 V407.5 H1127 H1127 V412.2 H1126 H1126 V412.2 H1125 H1125 V411.4 H1124 H1124 V408.3 H1123 H1123 V411.4 H1122 H1122 V407.7 H1121 H1121 V411.5 H1120 H1120 V411.5 H1119 H1119 V411.5 H1118 H1118 V409.0 H1117 H1117 V406.8 H1116 H1116 V412.0 H1115 H1115 V409.7 H1114 H1114 V410.2 H1113 H1113 V410.6 H1112 H1112 V412.9 H1111 H1111 V412.9 H1110 H1110 V411.5 H1109 H1109 V411.1 H1108 H1108 V407.4 H1107 H1107 V407.4 H1106 H1106 V407.4 H1105 H1105 V415.2 H1104 H1104 V412.7 H1103 H1103 V409.6 H1102 H1102 V406.7 H1101 H1101 V408.8 H1100 H1100 V407.7 H1099 H1099 V409.0 H1098 H1098 V409.3 H1097 H1097 V409.4 H1096 H1096 V410.7 H1095 H1095 V412.5 H1094 H1094 V412.1 H1093 H1093 V413.0 H1092 H1092 V409.5 H1091 H1091 V413.3 H1090 H1090 V409.5 H1089 H1089 V416.0 H1088 H1088 V410.5 H1087 H1087 V409.9 H1086 H1086 V408.2 H1085 H1085 V407.1 H1084 H1084 V408.2 H1083 H1083 V409.2 H1082 H1082 V411.2 H1081 H1081 V405.6 H1080 H1080 V405.4 H1079 H1079 V406.1 H1078 H1078 V409.3 H1077 H1077 V409.6 H1076 H1076 V409.6 H1075 H1075 V404.2 H1074 H1074 V406.5 H1073 H1073 V409.0 H1072 H1072 V406.5 H1071 H1071 V407.2 H1070 H1070 V408.8 H1069 H1069 V407.5 H1068 H1068 V407.5 H1067 H1067 V407.6 H1066 H1066 V406.7 H1065 H1065 V406.7 H1064 H1064 V411.8 H1063 H1063 V411.8 H1062 H1062 V411.8 H1061 H1061 V407.3 H1060 H1060 V407.9 H1059 H1059 V407.9 H1058 H1058 V406.9 H1057 H1057 V406.9 H1056 H1056 V406.8 H1055 H1055 V406.8 H1054 H1054 V413.7 H1053 H1053 V411.8 H1052 H1052 V411.8 H1051 H1051 V411.0 H1050 H1050 V411.0 H1049 H1049 V406.9 H1048 H1048 V403.1 H1047 H1047 V403.1 H1046 H1046 V406.7 H1045 H1045 V406.7 H1044 H1044 V405.7 H1043 H1043 V406.5 H1042 H1042 V406.2 H1041 H1041 V406.5 H1040 H1040 V408.5 H1039 H1039 V408.5 H1038 H1038 V408.5 H1037 H1037 V405.4 H1036 H1036 V403.6 H1035 H1035 V401.7 H1034 H1034 V400.8 H1033 H1033 V402.5 H1032 H1032 V406.2 H1031 H1031 V406.2 H1030 H1030 V408.0 H1029 H1029 V408.0 H1028 H1028 V407.8 H1027 H1027 V407.8 H1026 H1026 V407.3 H1025 H1025 V407.3 H1024 H1024 V407.3 H1023 H1023 V407.3 H1022 H1022 V404.8 H1021 H1021 V404.8 H1020 H1020 V409.0 H1019 H1019 V409.0 H1018 H1018 V407.2 H1017 H1017 V407.4 H1016 H1016 V407.4 H1015 H1015 V407.2 H1014 H1014 V407.2 H1013 H1013 V404.6 H1012 H1012 V406.3 H1011 H1011 V406.3 H1010 H1010 V408.6 H1009 H1009 V408.6 H1008 H1008 V405.8 H1007 H1007 V399.9 H1006 H1006 V400.4 H1005 H1005 V405.3 H1004 H1004 V407.4 H1003 H1003 V409.8 H1002 H1002 V405.9 H1001 H1001 V404.7 H1000 H1000 V402.4 H999 H999 V402.5 H998 H998 V403.9 H997 H997 V409.1 H996 H996 V405.4 H995 H995 V401.3 H994 H994 V401.3 H993 H993 V402.2 H992 H992 V405.4 H991 H991 V404.0 H990 H990 V402.4 H989 H989 V402.4 H988 H988 V400.7 H987 H987 V400.9 H986 H986 V400.7 H985 H985 V399.6 H984 H984 V401.7 H983 H983 V404.5 H982 H982 V403.7 H981 H981 V403.7 H980 H980 V406.3 H979 H979 V406.3 H978 H978 V404.1 H977 H977 V401.9 H976 H976 V399.3 H975 H975 V402.4 H974 H974 V402.4 H973 H973 V396.4 H972Z" fill="#324e90"/><path clip-path="url(#c2)" d="M819.2 384.4 L821.0 393.0 L822.8 394.1 L824.5 400.5 L826.3 399.9 L828.0 391.3 L829.6 394.8 L831.3 397.4 L832.9 390.0 L834.5 392.6 L836.0 390.7 L837.6 394.2 L839.1 398.6 L840.6 396.0 L842.0 394.1 L843.5 393.3 L844.9 401.9 L846.3 404.1 L847.7 408.8 L849.0 394.8 L850.4 398.9 L851.7 399.7 L853.0 391.1 L854.3 400.5 L855.6 391.1 L856.9 395.6 L858.1 394.8 L859.3 402.9 L860.5 407.9 L861.7 411.6 L862.9 393.4 L864.1 390.9 L865.3 396.0 L866.4 392.3 L867.5 402.5 L868.6 397.3 L869.7 386.2 L870.8 402.1 L871.9 396.5 L873.0 396.3 L874.0 401.4 L875.1 399.7 L876.1 391.1 L877.2 393.9 L878.2 393.9 L879.2 394.9 L880.2 400.7 L881.1 392.3 L882.1 396.5 L883.1 405.8 L884.0 400.2 L885.0 396.4 L885.9 402.2 L886.8 397.9 L887.8 399.5 L888.7 404.8 L889.6 403.1 L890.5 403.9 L891.4 398.9 L892.2 394.2 L893.1 394.5 L894.0 396.8 L894.8 401.2 L895.7 407.3 L896.5 390.3 L897.3 392.8 L898.2 396.1 L899.0 400.9 L899.8 401.3 L900.6 400.6 L901.4 399.2 L902.2 398.3 L903.0 402.3 L903.8 407.4 L904.5 402.2 L905.3 398.0 L906.1 398.7 L906.8 397.0 L907.6 410.7 L908.3 402.0 L909.1 405.3 L909.8 407.5 L910.5 399.9 L911.3 401.8 L912.0 388.6 L912.7 404.7 L913.4 414.2 L914.1 405.7 L914.8 398.8 L915.5 397.2 L916.2 392.2 L916.9 396.9 L917.5 405.9 L918.2 399.6 L918.9 396.4 L919.5 391.1 L920.2 400.7 L920.9 394.1 L921.5 401.7 L922.2 406.2 L922.8 393.5 L923.4 411.4 L924.1 394.7 L924.7 398.0 L925.3 400.1 L926.0 401.7 L926.6 392.4 L927.2 400.0 L927.8 401.8 L928.4 399.5 L929.0 392.5 L929.6 396.7 L930.2 396.9 L930.8 399.9 L931.4 392.0 L932.0 400.7 L932.6 412.3 L933.1 395.2 L933.7 402.7 L934.3 397.1 L934.8 397.4 L935.4 398.1 L936.0 409.4 L936.5 406.0 L937.1 402.1 L937.6 394.4 L938.2 398.4 L938.7 401.5 L939.3 403.0 L939.8 399.0 L940.4 393.6 L940.9 393.6 L941.4 395.7 L942.0 396.2 L942.5 389.1 L943.0 407.4 L943.5 408.9 L944.0 393.5 L944.6 398.8 L945.1 397.9 L945.6 396.6 L946.1 404.7 L946.6 404.2 L947.1 396.4 L947.6 393.3 L948.1 398.0 L948.6 393.6 L949.1 406.5 L949.6 401.6 L950.1 398.9 L950.5 400.6 L951.0 408.9 L951.6 396.3 L951.9 393.5 L952.5 406.4 L952.9 397.8 L953.4 397.3 L953.9 399.1 L954.3 398.9 L954.8 397.7 L955.3 393.6 L955.7 403.4 L956.2 393.1 L956.6 387.2 L957.1 407.0 L957.6 401.7 L957.9 399.3 L958.4 403.8 L958.9 406.0 L959.3 403.8 L959.8 397.8 L960.2 394.3 L960.6 406.3 L961.1 397.1 L961.6 400.2 L961.9 395.2 L962.4 394.3 L962.8 408.6 L963.2 399.7 L963.6 401.0 L964.1 401.5 L964.4 405.7 L964.9 392.2 L965.3 396.2 L965.7 395.4 L966.2 397.4 L966.6 402.9 L966.9 399.1 L967.4 397.2 L967.8 397.5 L968.2 401.1 L968.6 397.9 L969.1 402.2 L969.4 402.9 L969.8 399.8 L970.2 389.3 L970.6 396.8 L970.9 403.5 L971.4 397.7 L971.8 408.7 L972.2 396.3 L972.6 389.3 L972.9 396.4 L973.3 395.6 L973.7 395.5 L974.1 398.9 L974.4 401.7 L974.8 410.6 L975.2 407.8 L975.6 408.4 L975.9 402.4 L976.3 395.2 L976.7 395.6 L977.1 392.6 L977.4 390.7 L977.8 403.4 L978.2 394.7 L978.6 395.6 L978.9 393.4 L979.3 397.3 L979.6 400.0 L979.9 390.2 L980.3 400.7 L980.7 391.4 L981.1 405.5 L981.4 391.7 L981.8 408.2 L982.1 398.3 L982.4 394.0 L982.8 399.4 L983.2 397.9 L983.6 405.2 L983.9 405.9 L984.2 404.7 L984.6 397.5 L984.9 405.3 L985.2 406.0 L985.6 399.1 L985.9 401.9 L986.2 414.4 L986.6 402.7 L986.9 397.7 L987.2 394.9 L987.6 409.0 L987.9 409.5 L988.2 407.2 L988.6 392.8 L988.9 399.9 L989.2 412.1 L989.6 419.8 L989.9 397.8 L990.2 403.0 L990.6 413.5 L990.9 397.1 L991.1 393.0 L991.4 400.1 L991.8 394.4 L992.1 396.4 L992.4 403.1 L992.7 404.9 L993.1 398.7 L993.4 409.1 L993.6 404.9 L993.9 408.3 L994.3 398.8 L994.6 404.0 L994.9 409.0 L995.2 395.6 L995.6 404.2 L995.9 402.6 L996.1 394.8 L996.4 391.0 L996.8 387.4 L997.1 406.7 L997.4 399.4 L997.6 405.1 L997.9 400.6 L998.3 398.6 L998.6 396.2 L998.9 394.3 L999.1 394.0 L999.4 399.3 L999.7 400.7 L1000.1 388.1 L1000.4 402.7 L1000.6 392.8 L1000.9 396.9 L1001.1 398.9 L1001.4 391.9 L1001.8 405.6 L1002.1 413.3 L1002.4 394.8 L1002.6 405.0 L1002.9 405.7 L1003.1 402.6 L1003.4 396.8 L1003.8 402.9 L1004.1 403.3 L1004.4 403.2 L1004.6 396.3 L1004.9 398.9 L1005.1 398.4 L1005.4 398.1 L1005.6 394.9 L1005.9 401.6 L1006.3 408.0 L1006.6 409.3 L1006.9 409.5 L1007.1 398.1 L1007.4 401.2 L1007.6 396.1 L1007.9 394.2 L1008.1 402.0 L1008.4 395.4 L1008.6 407.1 L1008.9 403.2 L1009.1 408.3 L1009.4 407.4 L1009.8 416.1 L1010.1 398.0 L1010.4 388.2 L1010.6 395.7 L1010.9 404.1 L1011.1 415.5 L1011.4 398.6 L1011.6 395.7 L1011.9 403.9 L1012.1 404.9 L1012.4 400.3 L1012.6 392.6 L1012.9 402.5 L1013.1 410.0 L1013.4 391.9 L1013.6 402.6 L1013.9 395.6 L1014.1 404.3 L1014.4 397.6 L1014.6 400.0 L1014.9 396.4 L1015.1 398.9 L1015.4 398.3 L1015.6 394.8 L1015.9 402.3 L1016.1 405.0 L1016.4 401.2 L1016.6 400.1 L1016.9 397.7 L1017.1 399.8 L1017.4 392.6 L1017.6 397.5 L1017.9 401.8 L1018.1 397.2 L1018.4 410.7 L1018.6 402.6 L1018.9 400.9 L1019.1 405.0 L1019.4 403.8 L1019.6 400.4 L1019.9 401.1 L1020.1 398.1 L1020.4 394.0 L1020.6 413.2 L1020.9 394.9 L1021.2 406.3 L1021.2 399.7 L1021.6 407.4 L1021.9 403.7 L1022.1 400.8 L1022.4 416.4 L1022.6 404.0 L1022.9 399.6 L1023.1 411.8 L1023.4 397.6 L1023.6 404.7 L1023.9 404.4 L1024.2 395.4 L1024.2 405.2 L1024.6 402.0 L1024.9 395.1 L1025.1 407.8 L1025.4 406.6 L1025.6 408.0 L1025.9 403.7 L1026.1 391.2 L1026.4 395.6 L1026.8 405.1 L1026.8 403.3 L1027.1 412.1 L1027.4 405.2 L1027.6 413.4 L1027.9 396.4 L1028.1 407.5 L1028.4 416.2 L1028.8 394.3 L1028.8 399.0 L1029.1 399.3 L1029.4 411.6 L1029.6 402.7 L1029.9 407.2 L1030.2 404.3 L1030.2 399.5 L1030.6 395.9 L1030.9 395.2 L1031.1 407.4 L1031.4 398.1 L1031.8 396.3 L1031.8 402.7 L1032.1 404.2 L1032.4 405.7 L1032.6 401.4 L1032.9 397.8 L1033.2 412.2 L1033.2 401.1 L1033.6 417.5 L1033.9 407.2 L1034.2 393.4 L1034.2 404.1 L1034.6 397.5 L1034.9 408.1 L1035.2 405.8 L1035.2 400.3 L1035.6 404.0 L1035.9 407.1 L1036.1 408.0 L1036.4 416.0 L1036.8 394.6 L1036.8 403.1 L1037.1 398.4 L1037.4 403.5 L1037.8 406.3 L1037.8 400.2 L1038.1 415.3 L1038.4 407.3 L1038.8 394.5 L1038.8 410.6 L1039.2 403.7 L1039.2 395.7 L1039.6 402.3 L1039.9 399.7 L1040.2 398.4 L1040.2 407.6 L1040.6 401.1 L1040.9 398.1 L1041.2 402.9 L1041.2 400.5 L1041.6 398.5 L1041.9 402.2 L1042.2 398.9 L1042.2 404.7 L1042.8 405.1 L1042.8 397.8 L1043.1 404.0 L1043.4 401.2 L1043.8 397.1 L1043.8 407.6 L1044.2 416.6 L1044.2 406.1 L1044.6 394.8 L1044.9 395.5 L1045.2 393.5 L1045.2 404.9 L1045.8 406.9 L1045.8 400.2 L1046.2 392.3 L1046.2 399.9 L1046.6 407.6 L1046.9 398.5 L1047.2 407.6 L1047.2 391.7 L1047.8 401.0 L1047.8 405.2 L1048.2 409.4 L1048.2 396.3 L1048.6 397.2 L1048.9 416.4 L1049.2 399.8 L1049.2 409.3 L1049.8 407.0 L1049.8 403.7 L1050.2 396.0 L1050.2 410.9 L1050.8 407.3 L1050.8 391.9 L1051.2 401.0 L1051.2 404.5 L1051.8 425.4 L1051.8 395.6 L1052.2 400.5 L1052.2 408.2 L1052.6 401.2 L1052.9 397.4 L1053.2 408.3 L1053.2 400.6 L1053.8 395.8 L1053.8 401.9 L1054.2 402.4 L1054.2 396.8 L1054.8 399.1 L1054.8 402.5 L1055.2 407.4 L1055.2 402.2 L1055.8 397.4 L1055.8 424.6 L1056.2 403.3 L1056.2 388.4 L1056.8 393.8 L1056.8 409.8 L1057.2 401.3 L1057.2 393.2 L1057.8 399.5 L1057.8 405.8 L1058.2 406.6 L1058.2 395.8 L1058.8 397.4 L1058.8 401.7 L1059.2 405.4 L1059.2 392.2 L1059.8 392.7 L1059.8 400.7 L1060.2 423.8 L1060.2 397.8 L1060.8 398.5 L1060.8 402.2 L1061.2 415.2 L1061.2 398.9 L1061.8 403.4 L1061.8 406.8 L1062.2 407.9 L1062.2 388.0 L1062.8 399.3 L1062.8 406.0 L1063.2 404.7 L1063.2 403.5 L1063.8 396.3 L1063.8 405.3 L1064.2 403.0 L1064.2 399.4 L1064.8 404.9 L1064.8 411.0 L1065.2 402.0 L1065.2 397.8 L1065.8 399.0 L1065.8 407.1 L1066.2 405.1 L1066.2 400.6 L1066.8 395.8 L1066.8 401.2 L1067.2 406.0 L1067.2 402.0 L1067.8 396.7 L1067.8 402.9 L1068.2 400.4 L1068.2 397.7 L1068.8 395.4 L1068.8 405.1 L1069.2 418.8 L1069.2 397.6 L1069.8 407.2 L1069.8 412.4 L1070.2 409.0 L1070.2 394.2 L1070.8 401.1 L1070.8 407.7 L1071.2 404.6 L1071.2 394.6 L1071.8 398.7 L1071.8 400.4 L1072.2 407.4 L1072.2 397.3 L1072.8 401.3 L1072.8 403.4 L1073.2 413.0 L1073.2 392.6 L1073.8 397.6 L1073.8 402.9 L1074.2 406.8 L1074.2 402.7 L1074.8 395.4 L1074.8 405.5 L1075.2 412.1 L1075.2 398.9 L1075.8 401.0 L1075.8 404.3 L1076.2 401.1 L1076.2 398.0 L1076.8 402.1 L1076.8 406.9 L1077.2 406.1 L1077.2 401.1 L1077.8 392.7 L1077.8 410.3 L1078.2 402.3 L1078.2 397.3 L1078.8 394.7 L1078.8 401.1 L1079.2 407.0 L1079.2 396.2 L1079.8 396.1 L1079.8 411.5 L1080.2 413.0 L1080.2 394.9 L1080.8 392.9 L1080.8 411.9 L1081.2 404.9 L1081.2 400.0 L1081.8 394.6 L1081.8 407.1 L1082.2 405.2 L1082.2 395.7 L1082.8 393.1 L1082.8 409.2 L1083.2 416.2 L1083.2 392.6 L1083.8 398.3 L1083.8 404.2 L1084.2 407.6 L1084.2 402.8 L1084.8 396.2 L1084.8 412.8 L1085.2 419.0 L1085.2 397.3 L1085.8 393.3 L1085.8 401.3 L1086.2 417.1 L1086.2 397.4 L1086.8 394.5 L1086.8 403.6 L1087.2 408.9 L1087.2 395.5 L1087.8 398.2 L1087.8 406.0 L1088.2 413.6 L1088.2 402.0 L1088.8 394.7 L1088.8 408.0 L1089.2 398.4 L1089.2 391.7 L1089.8 397.9 L1089.8 411.8 L1090.2 410.0 L1090.2 398.6 L1090.8 399.5 L1090.8 406.9 L1091.2 415.1 L1091.2 395.8 L1091.8 393.0 L1091.8 404.8 L1092.2 404.7 L1092.2 398.3 L1092.8 398.0 L1092.8 412.4 L1093.2 405.1 L1093.2 391.6 L1093.8 394.7 L1093.8 408.9 L1094.2 414.5 L1094.2 401.9 L1094.8 398.1 L1094.8 399.0 L1095.2 410.1 L1095.2 392.4 L1095.8 398.9 L1095.8 411.3 L1096.2 400.9 L1096.2 394.3 L1096.8 395.6 L1096.8 407.5 L1097.2 408.8 L1097.2 393.9 L1097.8 400.6 L1097.8 416.6 L1098.2 412.1 L1098.2 401.1 L1098.8 391.1 L1098.8 418.5 L1099.2 414.3 L1099.2 393.3 L1099.8 393.2 L1099.8 409.5 L1100.2 417.4 L1100.2 395.7 L1100.8 397.9 L1100.8 410.5 L1101.2 407.3 L1101.2 400.0 L1101.8 399.7 L1101.8 414.0 L1102.2 414.3 L1102.2 401.3 L1102.8 399.6 L1102.8 412.7 L1103.2 405.9 L1103.2 392.8 L1103.8 397.1 L1103.8 401.9 L1104.2 410.4 L1104.2 393.6 L1104.8 394.9 L1104.8 409.7 L1105.2 404.1 L1105.2 395.1 L1105.8 395.5 L1105.8 404.3 L1106.2 407.4 L1106.2 396.7 L1106.8 393.8 L1106.8 410.0 L1107.2 416.8 L1107.2 403.5 L1107.8 392.8 L1107.8 407.8 L1108.2 406.1 L1108.2 404.5 L1108.8 398.3 L1108.8 408.7 L1109.2 409.6 L1109.2 396.0 L1109.8 395.5 L1109.8 407.9 L1110.2 415.4 L1110.2 397.3 L1110.8 391.6 L1110.8 409.7 L1111.2 404.5 L1111.2 394.8 L1111.8 398.0 L1111.8 412.9 L1112.2 412.0 L1112.2 398.8 L1112.8 392.3 L1112.8 404.4 L1113.2 406.4 L1113.2 398.4 L1113.8 395.9 L1113.8 408.4 L1114.2 420.5 L1114.2 400.4 L1114.8 397.2 L1114.8 410.0 L1115.2 405.0 L1115.2 395.4 L1115.8 400.4 L1115.8 406.1 L1116.2 411.2 L1116.2 393.7 L1116.8 393.3 L1116.8 414.8 L1117.2 410.9 L1117.2 396.8 L1117.8 396.4 L1117.8 411.3 L1118.2 409.2 L1118.2 394.7 L1118.8 398.5 L1118.8 404.5 L1119.2 411.9 L1119.2 399.7 L1119.8 387.6 L1119.8 411.0 L1120.2 408.7 L1120.2 391.1 L1120.8 391.6 L1120.8 407.0 L1121.2 412.9 L1121.2 392.6 L1121.8 394.2 L1121.8 415.8 L1122.2 404.5 L1122.2 385.0 L1122.8 390.7 L1122.8 413.1 L1123.2 411.4 L1123.2 393.9 L1123.8 396.8 L1123.8 413.6 L1124.2 416.6 L1124.2 394.3 L1124.8 400.1 L1124.8 413.4 L1125.2 415.6 L1125.2 402.4 L1125.8 402.1 L1125.8 409.2 L1126.2 410.4 L1126.2 394.3 L1126.8 392.4 L1126.8 411.6 L1127.2 410.7 L1127.2 394.7 L1127.8 392.5 L1127.8 412.9 L1128.2 413.4 L1128.2 394.6 L1128.8 396.6 L1128.8 405.1 L1129.2 411.7 L1129.2 400.5 L1129.8 391.1 L1129.8 404.5 L1130.2 413.4 L1130.2 390.6 L1130.8 398.3 L1130.8 406.6 L1131.2 410.1 L1131.2 390.2 L1131.8 395.3 L1131.8 410.0 L1132.2 412.2 L1132.2 391.8 L1132.8 391.8 L1132.8 401.8 L1133.2 415.0 L1133.2 391.0 L1133.8 390.7 L1133.8 407.7 L1134.2 417.3 L1134.2 401.5 L1134.8 393.1 L1134.8 407.2 L1135.2 411.6 L1135.2 400.7 L1135.8 390.9 L1135.8 414.8 L1136.2 412.9 L1136.2 395.5 L1136.8 393.8 L1136.8 402.4 L1137.2 413.3 L1137.2 396.2 L1137.8 395.5 L1137.8 409.9 L1138.2 416.5 L1138.2 397.6 L1138.8 395.4 L1138.8 411.2 L1139.2 413.8 L1139.2 397.6 L1139.8 391.3 L1139.8 411.0 L1140.2 415.7 L1140.2 394.6 L1140.8 399.1 L1140.8 407.7 L1141.2 408.7 L1141.2 395.7 L1141.8 397.5 L1141.8 404.3 L1142.2 403.3 L1142.2 397.5 L1142.8 394.6 L1142.8 412.7 L1143.2 416.0 L1143.2 388.3 L1143.8 400.3 L1143.8 410.0 L1144.2 416.1 L1144.2 395.9 L1144.8 395.7 L1144.8 408.0 L1145.2 416.2 L1145.2 398.1 L1145.8 400.6 L1145.8 415.1 L1146.2 411.6 L1146.2 398.1 L1146.8 395.2 L1146.8 411.1 L1147.2 405.6 L1147.2 397.1 L1147.8 398.0 L1147.8 409.3 L1148.2 415.2 L1148.2 395.2 L1148.8 395.4 L1148.8 408.7 L1149.2 404.9 L1149.2 392.4 L1149.8 397.3 L1149.8 410.9 L1150.2 409.0 L1150.2 390.4 L1150.8 396.3 L1150.8 411.3 L1151.2 408.7 L1151.2 394.2 L1151.8 390.6 L1151.8 407.9 L1152.2 413.0 L1152.2 389.9 L1152.8 396.2 L1152.8 407.8 L1153.2 408.4 L1153.2 391.0 L1153.8 394.6 L1153.8 411.7 L1154.2 413.4 L1154.2 397.3 L1154.8 395.9 L1154.8 404.7 L1155.2 410.6 L1155.2 394.3 L1155.8 394.0 L1155.8 410.4 L1156.2 410.7 L1156.2 391.7 L1156.8 393.1 L1156.8 405.1 L1157.2 414.6 L1157.2 391.4 L1157.8 397.4 L1157.8 409.2 L1158.2 410.3 L1158.2 396.7 L1158.8 396.7 L1158.8 411.8 L1159.2 413.5 L1159.2 394.6 L1159.8 396.8 L1159.8 414.5 L1160.2 411.4 L1160.2 394.0 L1160.8 395.0 L1160.8 412.9 L1161.2 417.8 L1161.2 391.1 L1161.8 398.6 L1161.8 411.5 L1162.2 406.4 L1162.2 393.6 L1162.8 394.7 L1162.8 409.5 L1163.2 407.3 L1163.2 398.6 L1163.8 393.5 L1163.8 418.7 L1164.2 405.1 L1164.2 392.8 L1164.8 394.3 L1164.8 412.2 L1165.2 411.2 L1165.2 395.5 L1165.8 393.1 L1165.8 412.2 L1166.2 407.1 L1166.2 396.2 L1166.8 400.1 L1166.8 411.6 L1167.2 409.6 L1167.2 393.5 L1167.8 395.8 L1167.8 407.9 L1168.2 414.6 L1168.2 390.5 L1168.8 394.1 L1168.8 405.3 L1169.2 409.7 L1169.2 391.5 L1169.8 391.4 L1169.8 418.2 L1170.2 412.0 L1170.2 394.4 L1170.8 395.7 L1170.8 414.7 L1171.2 410.4 L1171.2 396.8 L1171.8 398.3 L1171.8 409.7 L1172.2 427.5 L1172.2 390.6 L1172.8 390.4 L1172.8 407.7 L1173.2 411.0 L1173.2 395.3 L1173.8 397.3 L1173.8 410.6 L1174.2 410.0 L1174.2 395.3 L1174.8 391.5 L1174.8 421.4 L1175.2 409.4 L1175.2 396.3 L1175.8 395.4 L1175.8 409.7 L1176.2 413.4 L1176.2 395.2 L1176.8 395.7 L1176.8 415.6 L1177.2 412.8 L1177.2 390.9 L1177.8 391.7 L1177.8 412.9 L1178.2 412.1 L1178.2 396.9 L1178.8 394.2 L1178.8 412.4 L1179.2 415.0 L1179.2 399.0 L1179.8 396.9 L1179.8 414.9 L1180.2 414.9 L1180.2 397.8 L1180.8 391.0 L1180.8 413.9 L1181.2 415.2 L1181.2 387.6 L1181.8 396.6 L1181.8 410.0 L1182.2 416.4 L1182.2 392.6 L1182.8 397.6 L1182.8 411.5 L1183.2 414.7 L1183.2 396.4 L1183.8 400.2 L1183.8 408.6 L1184.2 409.0 L1184.2 392.6 L1184.8 395.7 L1184.8 410.2 L1185.2 424.2 L1185.2 394.7 L1185.8 393.9 L1185.8 410.0 L1186.2 413.6 L1186.2 392.4 L1186.8 391.5 L1186.8 407.1 L1187.2 411.8 L1187.2 396.7 L1187.8 396.9 L1187.8 408.5 L1188.2 412.0 L1188.2 392.7 L1188.8 392.2 L1188.8 413.0 L1189.2 417.8 L1189.2 397.3 L1189.8 390.7 L1189.8 409.4 L1190.2 412.8 L1190.2 389.5 L1190.8 393.7 L1190.8 407.6 L1191.2 413.2 L1191.2 389.3 L1191.8 391.2 L1191.8 411.9 L1192.2 411.6 L1192.2 392.2 L1192.8 391.9 L1192.8 409.3 L1193.2 420.9 L1193.2 392.8 L1193.8 391.7 L1193.8 413.6 L1194.2 414.1 L1194.2 393.6 L1194.8 392.0 L1194.8 412.5 L1195.2 412.9 L1195.2 395.2 L1195.8 392.4 L1195.8 414.3 L1196.2 423.6 L1196.2 393.6 L1196.8 395.2 L1196.8 414.1 L1197.2 411.3 L1197.2 395.5 L1197.8 395.7 L1197.8 412.4 L1198.2 410.8 L1198.2 395.5 L1198.8 398.5 L1198.8 418.1 L1199.2 412.6 L1199.2 394.5 L1199.8 396.4 L1199.8 409.5 L1200.2 419.4 L1200.2 395.6 L1200.8 391.5 L1200.8 409.7 L1201.2 413.7 L1201.2 394.4 L1201.8 398.7 L1201.8 411.5 L1202.2 411.6 L1202.2 392.4 L1202.8 398.0 L1202.8 414.5 L1203.2 410.5 L1203.2 393.3 L1203.8 393.5 L1203.8 420.2 L1204.2 405.7 L1204.2 397.1 L1204.8 395.1 L1204.8 407.5 L1205.2 411.5 L1205.2 395.5 L1205.8 395.9 L1205.8 421.3 L1206.2 411.9 L1206.2 390.3 L1206.8 393.1 L1206.8 409.6 L1207.2 418.6 L1207.2 393.7 L1207.8 396.6 L1207.8 411.8 L1208.2 413.6 L1208.2 389.8 L1208.8 396.5 L1208.8 419.1 L1209.2 418.1 L1209.2 390.3 L1209.8 393.2 L1209.8 418.3 L1210.2 408.5 L1210.2 386.1 L1210.8 392.0 L1210.8 406.0 L1211.2 411.5 L1211.2 394.4 L1211.8 398.2 L1211.8 417.5 L1212.2 421.8 L1212.2 393.8 L1212.8 393.7 L1212.8 409.6 L1213.2 417.3 L1213.2 394.2 L1213.8 390.4 L1213.8 416.5 L1214.2 408.8 L1214.2 390.2 L1214.8 389.0 L1214.8 414.9 L1215.2 418.6 L1215.2 391.3 L1215.8 392.4 L1215.8 412.8 L1216.2 417.8 L1216.2 394.7 L1216.8 395.7 L1216.8 412.7 L1217.2 412.4 L1217.2 394.6 L1217.8 389.5 L1217.8 409.9 L1218.2 411.4 L1218.2 394.4 L1218.8 391.6 L1218.8 408.6 L1219.2 411.6 L1219.2 388.6 L1219.8 397.8 L1219.8 411.4 L1220.2 415.6 L1220.2 389.7 L1220.8 396.6 L1220.8 413.8 L1221.2 423.8 L1221.2 393.8 L1221.8 398.0 L1221.8 409.1 L1222.2 413.6 L1222.2 398.3 L1222.8 391.9 L1222.8 412.1 L1223.2 415.4 L1223.2 397.2 L1223.8 389.4 L1223.8 412.3 L1224.2 415.3 L1224.2 396.0 L1224.8 395.0 L1224.8 408.5 L1225.2 424.0 L1225.2 394.5 L1225.8 397.6 L1225.8 412.4 L1226.2 413.5 L1226.2 396.9 L1226.8 395.3 L1226.8 407.5 L1227.2 414.4 L1227.2 393.4 L1227.8 393.7 L1227.8 415.5 L1228.2 416.5 L1228.2 395.2 L1228.8 395.3 L1228.8 412.7 L1229.2 408.8 L1229.2 394.2 L1229.8 390.4 L1229.8 408.3 L1230.2 413.0 L1230.2 396.2 L1230.8 395.2 L1230.8 415.1 L1231.2 411.7 L1231.2 392.9 L1231.8 387.5 L1231.8 414.6 L1232.2 420.4 L1232.2 393.7 L1232.8 391.4 L1232.8 417.9 L1233.2 416.1 L1233.2 393.9 L1233.8 393.8 L1233.8 411.0 L1234.2 410.7 L1234.2 397.1 L1234.8 391.2 L1234.8 422.7 L1235.2 417.3 L1235.2 391.7 L1235.8 391.9 L1235.8 413.7 L1236.2 410.9 L1236.2 394.1 L1236.8 392.0 L1236.8 414.5 L1237.2 413.4 L1237.2 394.8 L1237.8 394.4 L1237.8 416.7 L1238.2 412.7 L1238.2 393.7 L1238.8 393.0 L1238.8 414.6 L1239.2 417.9 L1239.2 394.9 L1239.8 390.3 L1239.8 408.9 L1240.2 420.6 L1240.2 394.3 L1240.8 388.9 L1240.8 412.7 L1241.2 423.6 L1241.2 392.1 L1241.8 391.9 L1241.8 417.0 L1242.2 410.9 L1242.2 392.3 L1242.8 391.3 L1242.8 411.3 L1243.2 408.1 L1243.2 395.5 L1243.8 393.6 L1243.8 415.9 L1244.2 423.2 L1244.2 393.5 L1244.8 394.4 L1244.8 410.7 L1245.2 410.2 L1245.2 392.2 L1245.8 393.5 L1245.8 414.7 L1246.2 412.4 L1246.2 393.5 L1246.8 391.1 L1246.8 409.9 L1247.2 418.6 L1247.2 397.7 L1247.8 394.1 L1247.8 414.6 L1248.2 412.1 L1248.2 394.7 L1248.8 396.6 L1248.8 412.3 L1249.2 422.0 L1249.2 389.4 L1249.8 396.1 L1249.8 414.8 L1250.2 418.3 L1250.2 393.6 L1250.8 396.5 L1250.8 411.5 L1251.2 415.5 L1251.2 397.2 L1251.8 392.2 L1251.8 415.2 L1252.2 418.0 L1252.2 393.7 L1252.8 389.5 L1252.8 408.3 L1253.2 409.9 L1253.2 391.7 L1253.8 395.3 L1253.8 412.4 L1254.2 421.6 L1254.2 393.1 L1254.8 392.7 L1254.8 413.7 L1255.2 414.5 L1255.2 393.6 L1255.8 390.8 L1255.8 410.4 L1256.2 415.9 L1256.2 392.3 L1256.8 390.0 L1256.8 419.0 L1257.2 412.0 L1257.2 396.1 L1257.8 395.8 L1257.8 412.4 L1258.2 416.2 L1258.2 392.3 L1258.8 390.1 L1258.8 420.1 L1259.2 423.1 L1259.2 394.7 L1259.8 394.1 L1259.8 416.1 L1260.2 421.4 L1260.2 392.6 L1260.8 389.6 L1260.8 411.9 L1261.2 418.0 L1261.2 394.2 L1261.8 394.5 L1261.8 420.0 L1262.2 413.4 L1262.2 395.9 L1262.8 395.2 L1262.8 412.8 L1263.2 407.5 L1263.2 393.5 L1263.8 396.1 L1263.8 413.6 L1264.2 411.8 L1264.2 391.5 L1264.8 389.7 L1264.8 415.6 L1265.2 415.1 L1265.2 395.2 L1265.8 393.2 L1265.8 415.8 L1266.2 413.1 L1266.2 391.5 L1266.8 393.0 L1266.8 415.0 L1267.2 410.3 L1267.2 392.2 L1267.8 388.9 L1267.8 417.0 L1268.2 414.0 L1268.2 393.1 L1268.8 392.0 L1268.8 428.6 L1269.2 418.1 L1269.2 394.6 L1269.8 395.4 L1269.8 421.6 L1270.2 416.6 L1270.2 393.8 L1270.8 391.1 L1270.8 415.3 L1271.2 413.3 L1271.2 391.7 L1271.8 393.4 L1271.8 416.8 L1272.2 414.4 L1272.2 399.0 L1272.8 392.7 L1272.8 420.7 L1273.2 419.2 L1273.2 394.6 L1273.8 392.9 L1273.8 419.9 L1274.2 412.6 L1274.2 393.3 L1274.8 393.4 L1274.8 414.3 L1275.2 413.8 L1275.2 390.8 L1275.8 391.1 L1275.8 413.4 L1276.2 416.5 L1276.2 393.5 L1276.8 394.0 L1276.8 409.9 L1277.2 412.7 L1277.2 391.5 L1277.8 392.8 L1277.8 414.7 L1278.2 417.3 L1278.2 395.3 L1278.8 390.0 L1278.8 414.9 L1279.2 418.2 L1279.2 394.0 L1279.8 391.1 L1279.8 409.5 L1280.2 417.2 L1280.2 390.4 L1280.8 391.9 L1280.8 423.3 L1281.2 416.1 L1281.2 392.4 L1281.8 388.9 L1281.8 412.8 L1282.2 415.1 L1282.2 393.3 L1282.8 391.2 L1282.8 420.7 L1283.2 412.6 L1283.2 393.6 L1283.8 394.2 L1283.8 414.9 L1284.2 428.5 L1284.2 393.9 L1284.8 391.3 L1284.8 418.7 L1285.2 417.5 L1285.2 390.3 L1285.8 393.8 L1285.8 411.5 L1286.2 413.2 L1286.2 395.2 L1286.8 392.7 L1286.8 414.2 L1287.2 424.5 L1287.2 389.6 L1287.8 394.1 L1287.8 417.1 L1288.2 415.7 L1288.2 392.3 L1288.8 386.6 L1288.8 406.8 L1289.2 421.3 L1289.2 396.3 L1289.8 393.8 L1289.8 428.6 L1290.2 414.5 L1290.2 393.6 L1290.8 392.0 L1290.8 417.7 L1291.2 419.5 L1291.2 386.5 L1291.8 391.6 L1291.8 417.2 L1292.2 411.7 L1292.2 391.8 L1292.8 394.1 L1292.8 421.0 L1293.2 419.7 L1293.2 388.5 L1293.8 395.1 L1293.8 419.4 L1294.2 421.9 L1294.2 393.2 L1294.8 389.9 L1294.8 415.8 L1295.2 415.8 L1295.2 394.1 L1295.8 392.9 L1295.8 418.3 L1296.2 424.2 L1296.2 391.8 L1296.8 389.4 L1296.8 416.0 L1297.2 413.0 L1297.2 390.5 L1297.8 391.4 L1297.8 415.4 L1298.2 414.1 L1298.2 393.0 L1298.8 396.0 L1298.8 414.8 L1299.2 412.1 L1299.2 393.2 L1299.8 391.2 L1299.8 413.2 L1300.2 415.4 L1300.2 394.0 L1300.8 394.5 L1300.8 428.3 L1301.2 412.9 L1301.2 392.3 L1301.8 393.2 L1301.8 421.9 L1302.2 413.7 L1302.2 392.4 L1302.8 393.7 L1302.8 416.2 L1303.2 416.7 L1303.2 393.9 L1303.8 390.2 L1303.8 411.5 L1304.2 413.4 L1304.2 389.9 L1304.8 390.8 L1304.8 417.7 L1305.2 413.0 L1305.2 393.5 L1305.8 390.9 L1305.8 413.9 L1306.2 417.7 L1306.2 393.1 L1306.8 391.2 L1306.8 421.3 L1307.2 413.0 L1307.2 391.8 L1307.8 394.1 L1307.8 414.8 L1308.2 416.0 L1308.2 394.1 L1308.8 398.7 L1308.8 418.8 L1309.2 420.4 L1309.2 393.6 L1309.8 391.9 L1309.8 413.7 L1310.2 419.5 L1310.2 393.2 L1310.8 392.1 L1310.8 421.8 L1311.2 420.5 L1311.2 389.5 L1311.8 392.2 L1311.8 413.4 L1312.2 417.0 L1312.2 391.5 L1312.8 392.7 L1312.8 420.0 L1313.2 420.3 L1313.2 394.4 L1313.8 393.1 L1313.8 412.3 L1314.2 415.3 L1314.2 391.4 L1314.8 393.2 L1314.8 422.2 L1315.2 416.7 L1315.2 390.1 L1315.8 393.4 L1315.8 424.5 L1316.2 416.0 L1316.2 395.8 L1316.8 393.2 L1316.8 413.6 L1317.2 421.2 L1317.2 391.3 L1317.8 394.3 L1317.8 419.9 L1318.2 416.0 L1318.2 392.5 L1318.8 391.1 L1318.8 427.8 L1319.2 413.7 L1319.2 392.3 L1319.8 391.7 L1319.8 413.2 L1320.2 417.6 L1320.2 390.2 L1320.8 390.5 L1320.8 417.2 L1321.2 428.0 L1321.2 390.2 L1321.8 392.1 L1321.8 424.3 L1322.2 413.7 L1322.2 393.4 L1322.8 391.7 L1322.8 411.4 L1323.2 415.8 L1323.2 391.5 L1323.8 392.4 L1323.8 416.2 L1324.2 428.0 L1324.2 394.0 L1324.8 393.2 L1324.8 419.1 L1325.2 417.5 L1325.2 391.4 L1325.8 387.9 L1325.8 414.5 L1326.2 422.3 L1326.2 387.2 L1326.8 388.7 L1326.8 416.9 L1327.2 419.0 L1327.2 395.8 L1327.8 392.7 L1327.8 415.6 L1328.2 417.7 L1328.2 391.4 L1328.8 393.4 L1328.8 419.8 L1329.2 417.8 L1329.2 390.8 L1329.8 391.4 L1329.8 422.1 L1330.2 416.5 L1330.2 394.2 L1330.8 390.5 L1330.8 416.0 L1331.2 413.0 L1331.2 384.9 L1331.8 392.7 L1331.8 421.7 L1332.2 420.1 L1332.2 393.6 L1332.8 391.7 L1332.8 415.5 L1333.2 417.2 L1333.2 392.2 L1333.8 393.5 L1333.8 418.4 L1334.2 413.6 L1334.2 390.8 L1334.8 387.7 L1334.8 414.3 L1335.2 415.1 L1335.2 393.6 L1335.8 390.7 L1335.8 414.1 L1336.2 423.0 L1336.2 392.1 L1336.8 388.2 L1336.8 415.0 L1337.2 424.9 L1337.2 393.1 L1337.8 389.9 L1337.8 422.0 L1338.2 416.5 L1338.2 390.6 L1338.8 393.4 L1338.8 417.3 L1339.2 419.0 L1339.2 391.4 L1339.8 393.3 L1339.8 416.2 L1340.2 419.6 L1340.2 393.9 L1340.8 393.5 L1340.8 411.2 L1341.2 412.6 L1341.2 393.4 L1341.8 389.5 L1341.8 416.7 L1342.2 414.3 L1342.2 391.7 L1342.8 391.7 L1342.8 422.1 L1343.2 412.6 L1343.2 392.6 L1343.8 389.1 L1343.8 423.2 L1344.2 417.1 L1344.2 391.9 L1344.8 390.7 L1344.8 414.5 L1345.2 414.6 L1345.2 390.7 L1345.8 390.5 L1345.8 417.2 L1346.2 416.9 L1346.2 389.6 L1346.8 391.8 L1346.8 421.6 L1347.2 416.3 L1347.2 393.0 L1347.8 390.7 L1347.8 421.6 L1348.2 422.0 L1348.2 389.9 L1348.8 390.3 L1348.8 414.7 L1349.2 417.9 L1349.2 391.4 L1349.8 389.3 L1349.8 427.1 L1350.2 416.0 L1350.2 392.3 L1350.8 392.0 L1350.8 417.3 L1351.2 420.1 L1351.2 393.3 L1351.8 390.3 L1351.8 427.3 L1352.2 416.1 L1352.2 393.1 L1352.8 390.6 L1352.8 414.8 L1353.2 414.6 L1353.2 393.5 L1353.8 395.1 L1353.8 423.1 L1354.2 422.1 L1354.2 393.4 L1354.8 392.4 L1354.8 419.7 L1355.2 414.6 L1355.2 392.3 L1355.8 392.7 L1355.8 416.3 L1356.2 423.5 L1356.2 392.7 L1356.8 391.7 L1356.8 420.2 L1357.2 425.6 L1357.2 391.0 L1357.8 390.0 L1357.8 418.3 L1358.2 415.7 L1358.2 390.0 L1358.8 392.0 L1358.8 414.6 L1359.2 424.8 L1359.2 392.5 L1359.8 393.5 L1359.8 418.8 L1360.2 415.2 L1360.2 393.9 L1360.8 394.9 L1360.8 419.6 L1361.2 421.6 L1361.2 395.5 L1361.8 391.0 L1361.8 422.5 L1362.2 418.4 L1362.2 391.6 L1362.8 392.6 L1362.8 413.1 L1363.2 415.8 L1363.2 392.0 L1363.8 393.6 L1363.8 415.9 L1364.2 417.6 L1364.2 393.4 L1364.8 390.8 L1364.8 416.6 L1365.2 416.7 L1365.2 390.4 L1365.8 392.6 L1365.8 423.5 L1366.2 413.9 L1366.2 389.1 L1366.8 392.2 L1366.8 417.5 L1367.2 417.0 L1367.2 392.2 L1367.8 390.9 L1367.8 422.8 L1368.2 417.3 L1368.2 390.0 L1368.8 391.8 L1368.8 415.8 L1369.2 417.1 L1369.2 387.8 L1369.8 393.9 L1369.8 417.0 L1370.2 420.2 L1370.2 392.0 L1370.8 392.8 L1370.8 415.5 L1371.2 417.7 L1371.2 387.9 L1371.8 390.2 L1371.8 416.5 L1372.2 421.4 L1372.2 390.4 L1372.8 391.7 L1372.8 415.9 L1373.2 418.4 L1373.2 388.9 L1373.8 390.2 L1373.8 422.3 L1374.2 415.5 L1374.2 392.7 L1374.8 390.9 L1374.8 418.1 L1375.2 418.5 L1375.2 391.7 L1375.8 391.3 L1375.8 419.7 L1376.2 421.0 L1376.2 393.2 L1376.8 394.3 L1376.8 420.4 L1377.2 419.7 L1377.2 391.0 L1377.8 391.1 L1377.8 418.4 L1378.2 418.8 L1378.2 390.9 L1378.8 390.6 L1378.8 420.7 L1379.2 420.9 L1379.2 391.7 L1379.8 392.7 L1379.8 427.1 L1380.2 417.9 L1380.2 392.2 L1380.8 392.0 L1380.8 419.6 L1381.2 419.0 L1381.2 387.3 L1381.8 389.7 L1381.8 416.6 L1382.2 420.7 L1382.2 387.3 L1382.8 390.5 L1382.8 427.0 L1383.2 418.6 L1383.2 391.1 L1383.8 393.2 L1383.8 415.5 L1384.2 416.3 L1384.2 393.5 L1384.8 393.7 L1384.8 419.7 L1385.2 415.1 L1385.2 389.2 L1385.8 391.8 L1385.8 421.3 L1386.2 416.3 L1386.2 392.0 L1386.8 388.2 L1386.8 418.4 L1387.2 422.6 L1387.2 393.1 L1387.8 393.6 L1387.8 420.5 L1388.2 418.4 L1388.2 389.9 L1388.8 393.4 L1388.8 421.6 L1389.2 421.5 L1389.2 392.1 L1389.8 392.4 L1389.8 422.9 L1390.2 419.3 L1390.2 390.2 L1390.8 389.6 L1390.8 417.9 L1391.2 416.0 L1391.2 390.4 L1391.8 390.6 L1391.8 418.7 L1392.2 422.0 L1392.2 392.1 L1392.8 392.6 L1392.8 418.6 L1393.2 412.5 L1393.2 392.5 L1393.8 393.8 L1393.8 414.1 L1394.2 424.6 L1394.2 391.9 L1394.8 391.0 L1394.8 412.5 L1395.2 420.1 L1395.2 393.0 L1395.8 390.5 L1395.8 415.9 L1396.2 421.4 L1396.2 393.8 L1396.8 389.8 L1396.8 415.8 L1397.2 415.7 L1397.2 391.1 L1397.8 390.0 L1397.8 420.2 L1398.2 414.5 L1398.2 388.6 L1398.8 393.2 L1398.8 419.3 L1399.2 421.5 L1399.2 390.8 L1399.8 391.2 L1399.8 423.5 L1400.2 414.2 L1400.2 394.3 L1400.8 391.2 L1400.8 418.9 L1401.2 416.2 L1401.2 391.8 L1401.8 391.8 L1401.8 417.1 L1402.2 420.4 L1402.2 394.1 L1402.8 392.4 L1402.8 420.3 L1403.2 416.3 L1403.2 389.5 L1403.8 388.0 L1403.8 423.9 L1404.2 414.7 L1404.2 394.1 L1404.8 391.4 L1404.8 417.2 L1405.2 417.8 L1405.2 390.8 L1405.8 390.8 L1405.8 417.3 L1406.2 415.2 L1406.2 391.1 L1406.8 390.3 L1406.8 419.1 L1407.2 422.0 L1407.2 389.3 L1407.8 391.7 L1407.8 416.0 L1408.2 419.9 L1408.2 388.1 L1408.8 388.6 L1408.8 418.6 L1409.2 415.7 L1409.2 391.0 L1409.8 389.0 L1409.8 418.1 L1410.2 418.8 L1410.2 388.8 L1410.8 390.2 L1410.8 425.8 L1411.2 424.3 L1411.2 389.3 L1411.8 387.6 L1411.8 418.7 L1412.2 422.8 L1412.2 389.5 L1412.8 390.8 L1412.8 416.3 L1413.2 419.4 L1413.2 390.8 L1413.8 390.8 L1413.8 419.2 L1414.2 415.8 L1414.2 389.6 L1414.8 390.2 L1414.8 418.2 L1415.2 422.3 L1415.2 390.7 L1415.8 389.7 L1415.8 423.9 L1416.2 415.7 L1416.2 389.7 L1416.8 390.3 L1416.8 422.8 L1417.2 419.6 L1417.2 391.6 L1417.8 386.6 L1417.8 418.0 L1418.2 422.7 L1418.2 392.4 L1418.8 388.4 L1418.8 419.8 L1419.2 419.5 L1419.2 391.3 L1419.8 389.1 L1419.8 420.0 L1420.2 424.0 L1420.2 389.4 L1420.8 389.3 L1420.8 419.5 L1421.2 418.6 L1421.2 392.1 L1421.8 391.3 L1421.8 420.1 L1422.2 416.0 L1422.2 392.0 L1422.8 392.1 L1422.8 424.3 L1423.2 416.1 L1423.2 389.6 L1423.8 392.0 L1423.8 424.5 L1424.2 416.2 L1424.2 390.3 L1424.8 390.3 L1424.8 421.2 L1425.2 420.2 L1425.2 389.3 L1425.8 387.8 L1425.8 416.5 L1426.2 416.3 L1426.2 390.0 L1426.8 390.7 L1426.8 419.9 L1427.2 419.1 L1427.2 392.9 L1427.8 389.5 L1427.8 419.9 L1428.2 425.3 L1428.2 391.8 L1428.8 389.9 L1428.8 421.7 L1429.2 420.7 L1429.2 389.7 L1429.8 390.5 L1429.8 416.5 L1430.2 416.3 L1430.2 388.4 L1430.8 391.1 L1430.8 425.8 L1431.2 423.9 L1431.2 391.5 L1431.8 390.1 L1431.8 421.2 L1432.2 426.5 L1432.2 390.5 L1432.8 391.8 L1432.8 423.9 L1433.2 420.6 L1433.2 386.5 L1433.8 389.4 L1433.8 424.9 L1434.2 420.5 L1434.2 392.2 L1434.8 391.7 L1434.8 423.3 L1435.2 417.3 L1435.2 390.0 L1435.8 391.6 L1435.8 417.6 L1436.2 420.0 L1436.2 390.2 L1436.8 389.8 L1436.8 425.1 L1437.2 424.6 L1437.2 389.7 L1437.8 390.3 L1437.8 415.1 L1438.2 420.1 L1438.2 388.2 L1438.8 391.7 L1438.8 425.6 L1439.2 418.7 L1439.2 392.9 L1439.8 393.7 L1439.8 425.4 L1440.2 425.6 L1440.2 391.9 L1440.8 390.8 L1440.8 424.4 L1441.2 426.2 L1441.2 390.2 L1441.8 390.9 L1441.8 417.2 L1442.2 425.3 L1442.2 391.8 L1442.8 390.7 L1442.8 422.3 L1443.2 418.7 L1443.2 392.4 L1443.8 390.4 L1443.8 420.9 L1444.2 428.0 L1444.2 389.0 L1444.8 391.5 L1444.8 423.6 L1445.2 423.9 L1445.2 391.6 L1445.8 390.4 L1445.8 418.7 L1446.2 419.8 L1446.2 390.2 L1446.8 393.4 L1446.8 417.4 L1447.2 420.6 L1447.2 389.5 L1447.8 391.2 L1447.8 423.8 L1448.2 422.1 L1448.2 391.6 L1448.8 389.9 L1448.8 434.3 L1449.2 420.4 L1449.2 391.8 L1449.8 389.7 L1449.8 419.3 L1450.2 426.5 L1450.2 386.6 L1450.8 390.4 L1450.8 421.5 L1451.2 417.5 L1451.2 390.1 L1451.8 391.4 L1451.8 421.1 L1452.2 419.8 L1452.2 388.9 L1452.8 388.5 L1452.8 420.5 L1453.2 424.5 L1453.2 391.6 L1453.8 388.7 L1453.8 420.0 L1454.2 429.2 L1454.2 390.4 L1454.8 389.5 L1454.8 424.4 L1455.2 423.3 L1455.2 390.6 L1455.8 389.2 L1455.8 420.4 L1456.2 424.4 L1456.2 388.6 L1456.8 391.3 L1456.8 419.7 L1457.2 424.2 L1457.2 385.6 L1457.8 391.6 L1457.8 421.0 L1458.2 420.8 L1458.2 389.8 L1458.8 392.3 L1458.8 431.2 L1459.2 421.4 L1459.2 392.1 L1459.8 389.7 L1459.8 423.8 L1460.2 432.2 L1460.2 388.6 L1460.8 390.9 L1460.8 419.3 L1461.2 422.2 L1461.2 389.5 L1461.8 389.0 L1461.8 426.9 L1462.2 417.1 L1462.2 389.7 L1462.8 391.8 L1462.8 423.1 L1463.2 419.1 L1463.2 390.8 L1463.8 389.3 L1463.8 417.5 L1464.2 425.4 L1464.2 391.6 L1464.8 386.4 L1464.8 422.1 L1465.2 418.1 L1465.2 390.2 L1465.8 389.6 L1465.8 418.4 L1466.2 422.6 L1466.2 390.3 L1466.8 391.6 L1466.8 425.2 L1467.2 426.0 L1467.2 391.3 L1467.8 388.9 L1467.8 419.6 L1468.2 423.7 L1468.2 390.0 L1468.8 388.6 L1468.8 434.1 L1469.2 419.1 L1469.2 389.7 L1469.8 392.0 L1469.8 419.8 L1470.2 419.8 L1470.2 391.3 L1470.8 392.9 L1470.8 418.0 L1471.2 428.3 L1471.2 389.6 L1471.8 390.4 L1471.8 426.2 L1472.2 419.6 L1472.2 389.8 L1472.8 390.3 L1472.8 429.3 L1473.2 419.2 L1473.2 390.7 L1473.8 390.5 L1473.8 421.9 L1474.2 418.2 L1474.2 388.5 L1474.8 388.6 L1474.8 418.3 L1475.2 429.0 L1475.2 389.7 L1475.8 392.1 L1475.8 421.9 L1476.2 419.8 L1476.2 390.3 L1476.8 391.2 L1476.8 421.8 L1477.2 421.6 L1477.2 389.3 L1477.8 390.0 L1477.8 419.3 L1478.2 418.5 L1478.2 391.0 L1478.8 385.5 L1478.8 421.5 L1479.2 424.6 L1479.2 388.7 L1479.8 390.8 L1479.8 419.5 L1480.2 421.6 L1480.2 387.9 L1480.8 386.9 L1480.8 421.6 L1481.2 423.0 L1481.2 391.2 L1481.8 389.0 L1481.8 422.1 L1482.2 418.2 L1482.2 390.9 L1482.8 389.7 L1482.8 420.4 L1483.2 427.9 L1483.2 388.1 L1483.8 392.4 L1483.8 418.8 L1484.2 417.5 L1484.2 391.2 L1484.8 389.5 L1484.8 421.4 L1485.2 427.9 L1485.2 389.0 L1485.8 392.4 L1485.8 419.8 L1486.2 423.1 L1486.2 389.1 L1486.8 390.5 L1486.8 427.3 L1487.2 417.8 L1487.2 391.1 L1487.8 389.1 L1487.8 429.4 L1488.2 424.2 L1488.2 389.7 L1488.8 384.6 L1488.8 420.2 L1489.2 427.7 L1489.2 392.1 L1489.8 390.2 L1489.8 432.6 L1490.2 418.0 L1490.2 390.3 L1490.8 389.1 L1490.8 421.6 L1491.2 420.0 L1491.2 389.5 L1491.8 388.1 L1491.8 421.3 L1492.2 419.1 L1492.2 389.3 L1492.8 391.1 L1492.8 421.3 L1493.2 424.7 L1493.2 390.6 L1493.8 392.0 L1493.8 430.2 L1494.2 425.5 L1494.2 387.9 L1494.8 385.7 L1494.8 434.0 L1495.2 426.9 L1495.2 390.0 L1495.8 388.8 L1495.8 423.7 L1496.2 424.7 L1496.2 390.6 L1496.8 392.1 L1496.8 421.7 L1497.2 422.4 L1497.2 391.8 L1497.8 391.2 L1497.8 425.6 L1498.2 420.2 L1498.2 391.1 L1498.8 388.9 L1498.8 418.8 L1499.2 421.1 L1499.2 389.9 L1499.8 385.7 L1499.8 426.2 L1500.2 419.2 L1500.2 388.8 L1500.8 390.8 L1500.8 428.1 L1501.1 400.7 L1501.4 400.7" stroke="#cc484f" stroke-width="1.9" fill="none" stroke-linejoin="round"/><path clip-path="url(#c2)" d="M902 399.0 H902 V399.0 H903 H903 V402.5 H902Z M906 397.8 H906 V397.8 H907 H907 V398.9 H906Z M909 401.8 H909 V401.8 H910 H910 V405.5 H909Z M911 399.7 H911 V399.7 H912 H912 V401.6 H913 H913 V404.5 H914 H914 V398.6 H915 H915 V405.9 H914 H914 V405.9 H913 H913 V404.9 H912 H912 V402.0 H911Z M918 396.2 H918 V396.2 H919 H919 V396.2 H920 H920 V393.9 H921 H921 V400.5 H922 H922 V401.5 H923 H923 V394.5 H924 H924 V397.8 H925 H925 V397.8 H926 H926 V399.8 H927 H927 V401.9 H926 H926 V400.3 H925 H925 V400.3 H924 H924 V398.2 H923 H923 V406.4 H922 H922 V401.9 H921 H921 V400.9 H920 H920 V399.8 H919 H919 V399.8 H918Z M928 396.5 H928 V396.5 H929 H929 V396.5 H930 H930 V399.7 H929 H929 V399.7 H928Z M931 396.7 H931 V396.7 H932 H932 V395.0 H933 H933 V396.9 H934 H934 V397.2 H935 H935 V397.2 H936 H936 V397.9 H937 H937 V398.2 H938 H938 V398.2 H939 H939 V398.8 H940 H940 V393.4 H941 H941 V393.4 H942 H942 V395.5 H943 H943 V393.3 H944 H944 V396.4 H945 H945 V397.7 H946 H946 V396.2 H947 H947 V393.4 H948 H948 V393.4 H949 H949 V398.7 H950 H950 V398.7 H951 H951 V396.1 H952 H952 V396.1 H953 H953 V397.5 H954 H954 V397.1 H955 H955 V392.9 H956 H956 V392.9 H957 H957 V399.1 H958 H958 V399.1 H959 H959 V397.6 H960 H960 V396.9 H961 H961 V394.1 H962 H962 V395.0 H963 H963 V399.5 H964 H964 V395.2 H965 H965 V395.2 H966 H966 V396.0 H967 H967 V397.3 H968 H968 V397.3 H969 H969 V396.6 H970 H970 V396.6 H971 H971 V396.1 H972 H972 V395.3 H973 H973 V395.3 H974 H974 V395.4 H975 H975 V395.4 H976 H976 V392.4 H977 H977 V392.4 H978 H978 V393.2 H979 H979 V391.2 H980 H980 V391.2 H981 H981 V391.5 H982 H982 V393.8 H983 H983 V397.3 H984 H984 V398.9 H985 H985 V398.9 H986 H986 V397.5 H987 H987 V394.7 H988 H988 V394.7 H989 H989 V397.6 H990 H990 V394.2 H991 H991 V394.2 H992 H992 V396.2 H993 H993 V398.6 H994 H994 V398.6 H995 H995 V390.8 H996 H996 V390.8 H997 H997 V390.8 H998 H998 V394.1 H999 H999 V392.6 H1000 H1000 V391.7 H1001 H1001 V392.6 H1002 H1002 V394.6 H1003 H1003 V396.1 H1004 H1004 V396.1 H1005 H1005 V396.1 H1006 H1006 V395.9 H1007 H1007 V395.2 H1008 H1008 V395.2 H1009 H1009 V395.2 H1010 H1010 V395.5 H1011 H1011 V392.4 H1012 H1012 V392.4 H1013 H1013 V392.4 H1014 H1014 V394.6 H1015 H1015 V396.2 H1016 H1016 V394.6 H1017 H1017 V397.0 H1018 H1018 V397.0 H1019 H1019 V394.7 H1020 H1020 V394.7 H1021 H1021 V394.7 H1022 H1022 V399.4 H1023 H1023 V397.4 H1024 H1024 V395.2 H1025 H1025 V394.9 H1026 H1026 V395.4 H1027 H1027 V395.4 H1028 H1028 V396.2 H1029 H1029 V395.7 H1030 H1030 V395.7 H1031 H1031 V395.7 H1032 H1032 V397.6 H1033 H1033 V397.3 H1034 H1034 V397.3 H1035 H1035 V397.3 H1036 H1036 V394.4 H1037 H1037 V394.4 H1038 H1038 V395.5 H1039 H1039 V395.5 H1040 H1040 V397.9 H1041 H1041 V397.9 H1042 H1042 V398.3 H1043 H1043 V396.9 H1044 H1044 V394.6 H1045 H1045 V393.3 H1046 H1046 V392.1 H1047 H1047 V392.1 H1048 H1048 V394.1 H1049 H1049 V396.1 H1050 H1050 V395.8 H1051 H1051 V395.4 H1052 H1052 V397.0 H1053 H1053 V396.6 H1054 H1054 V396.6 H1055 H1055 V397.2 H1056 H1056 V393.0 H1057 H1057 V393.0 H1058 H1058 V392.5 H1059 H1059 V392.5 H1060 H1060 V394.0 H1061 H1061 V397.6 H1062 H1062 V399.1 H1063 H1063 V396.1 H1064 H1064 V397.6 H1065 H1065 V396.3 H1066 H1066 V396.3 H1067 H1067 V395.6 H1068 H1068 V396.5 H1069 H1069 V395.2 H1070 H1070 V394.4 H1071 H1071 V397.1 H1072 H1072 V397.1 H1073 H1073 V397.1 H1074 H1074 V397.4 H1075 H1075 V397.8 H1076 H1076 V397.2 H1077 H1077 V393.9 H1078 H1078 V393.9 H1079 H1079 V394.7 H1080 H1080 V394.4 H1081 H1081 V392.9 H1082 H1082 V392.9 H1083 H1083 V392.9 H1084 H1084 V395.8 H1085 H1085 V394.3 H1086 H1086 V394.3 H1087 H1087 V395.3 H1088 H1088 V394.5 H1089 H1089 V394.5 H1090 H1090 V394.8 H1091 H1091 V395.6 H1092 H1092 V392.8 H1093 H1093 V394.5 H1094 H1094 V393.3 H1095 H1095 V393.3 H1096 H1096 V393.7 H1097 H1097 V394.1 H1098 H1098 V393.0 H1099 H1099 V393.0 H1100 H1100 V395.5 H1101 H1101 V398.2 H1102 H1102 V396.9 H1103 H1103 V393.4 H1104 H1104 V393.4 H1105 H1105 V393.6 H1106 H1106 V392.7 H1107 H1107 V392.7 H1108 H1108 V392.7 H1109 H1109 V395.3 H1110 H1110 V394.6 H1111 H1111 V394.6 H1112 H1112 V396.3 H1113 H1113 V395.7 H1114 H1114 V395.7 H1115 H1115 V395.2 H1116 H1116 V393.5 H1117 H1117 V394.5 H1118 H1118 V396.2 H1119 H1119 V390.9 H1120 H1120 V390.9 H1121 H1121 V391.4 H1122 H1122 V390.5 H1123 H1123 V390.5 H1124 H1124 V396.4 H1125 H1125 V395.8 H1126 H1126 V392.3 H1127 H1127 V392.3 H1128 H1128 V393.8 H1129 H1129 V390.9 H1130 H1130 V390.4 H1131 H1131 V390.4 H1132 H1132 V390.8 H1133 H1133 V390.8 H1134 H1134 V392.9 H1135 H1135 V392.9 H1136 H1136 V393.6 H1137 H1137 V395.2 H1138 H1138 V395.2 H1139 H1139 V391.9 H1140 H1140 V391.9 H1141 H1141 V395.5 H1142 H1142 V392.6 H1143 H1143 V392.6 H1144 H1144 V395.5 H1145 H1145 V395.5 H1146 H1146 V396.9 H1147 H1147 V395.0 H1148 H1148 V392.6 H1149 H1149 V392.2 H1150 H1150 V390.4 H1151 H1151 V390.2 H1152 H1152 V390.4 H1153 H1153 V390.8 H1154 H1154 V394.1 H1155 H1155 V393.8 H1156 H1156 V391.5 H1157 H1157 V392.9 H1158 H1158 V394.6 H1159 H1159 V394.4 H1160 H1160 V393.8 H1161 H1161 V393.4 H1162 H1162 V393.4 H1163 H1163 V392.8 H1164 H1164 V392.8 H1165 H1165 V392.8 H1166 H1166 V393.3 H1167 H1167 V393.3 H1168 H1168 V391.2 H1169 H1169 V391.2 H1170 H1170 V394.2 H1171 H1171 V395.2 H1172 H1172 V390.4 H1173 H1173 V391.3 H1174 H1174 V395.1 H1175 H1175 V395.0 H1176 H1176 V391.5 H1177 H1177 V391.5 H1178 H1178 V393.3 H1179 H1179 V394.0 H1180 H1180 V390.8 H1181 H1181 V390.8 H1182 H1182 V392.4 H1183 H1183 V392.4 H1184 H1184 V394.1 H1185 H1185 V392.4 H1186 H1186 V392.2 H1187 H1187 V392.2 H1188 H1188 V392.5 H1189 H1189 V390.5 H1190 H1190 V389.3 H1191 H1191 V391.0 H1192 H1192 V391.7 H1193 H1193 V391.7 H1194 H1194 V391.8 H1195 H1195 V392.2 H1196 H1196 V393.4 H1197 H1197 V395.3 H1198 H1198 V394.4 H1199 H1199 V392.7 H1200 H1200 V392.7 H1201 H1201 V392.2 H1202 H1202 V392.6 H1203 H1203 V393.1 H1204 H1204 V394.9 H1205 H1205 V392.3 H1206 H1206 V392.3 H1207 H1207 V390.9 H1208 H1208 V390.1 H1209 H1209 V390.1 H1210 H1210 V391.5 H1211 H1211 V393.5 H1212 H1212 V393.6 H1213 H1213 V390.0 H1214 H1214 V390.0 H1215 H1215 V390.0 H1216 H1216 V391.1 H1217 H1217 V394.2 H1218 H1218 V389.3 H1219 H1219 V389.5 H1220 H1220 V389.5 H1221 H1221 V391.7 H1222 H1222 V393.3 H1223 H1223 V391.7 H1224 H1224 V393.3 H1225 H1225 V394.8 H1226 H1226 V394.3 H1227 H1227 V393.5 H1228 H1228 V393.5 H1229 H1229 V391.4 H1230 H1230 V390.2 H1231 H1231 V392.7 H1232 H1232 V391.2 H1233 H1233 V391.2 H1234 H1234 V391.5 H1235 H1235 V391.5 H1236 H1236 V391.7 H1237 H1237 V392.7 H1238 H1238 V393.5 H1239 H1239 V390.1 H1240 H1240 V390.1 H1241 H1241 V391.1 H1242 H1242 V391.7 H1243 H1243 V393.3 H1244 H1244 V392.1 H1245 H1245 V392.0 H1246 H1246 V392.0 H1247 H1247 V393.9 H1248 H1248 V393.9 H1249 H1249 V393.4 H1250 H1250 V392.0 H1251 H1251 V392.0 H1252 H1252 V391.5 H1253 H1253 V391.5 H1254 H1254 V391.5 H1255 H1255 V392.1 H1256 H1256 V390.6 H1257 H1257 V389.9 H1258 H1258 V392.1 H1259 H1259 V392.4 H1260 H1260 V392.4 H1261 H1261 V392.4 H1262 H1262 V393.4 H1263 H1263 V391.3 H1264 H1264 V391.3 H1265 H1265 V391.3 H1266 H1266 V391.3 H1267 H1267 V391.3 H1268 H1268 V391.8 H1269 H1269 V391.8 H1270 H1270 V391.5 H1271 H1271 V391.5 H1272 H1272 V393.0 H1273 H1273 V392.7 H1274 H1274 V390.7 H1275 H1275 V390.7 H1276 H1276 V390.9 H1277 H1277 V390.8 H1278 H1278 V390.8 H1279 H1279 V390.2 H1280 H1280 V390.2 H1281 H1281 V390.2 H1282 H1282 V391.0 H1283 H1283 V391.1 H1284 H1284 V391.1 H1285 H1285 V391.1 H1286 H1286 V392.5 H1287 H1287 V390.0 H1288 H1288 V389.4 H1289 H1289 V390.0 H1290 H1290 V390.7 H1291 H1291 V390.7 H1292 H1292 V388.3 H1293 H1293 V389.7 H1294 H1294 V392.6 H1295 H1295 V389.7 H1296 H1296 V390.3 H1297 H1297 V390.3 H1298 H1298 V391.2 H1299 H1299 V393.0 H1300 H1300 V392.1 H1301 H1301 V392.2 H1302 H1302 V392.2 H1303 H1303 V390.0 H1304 H1304 V390.0 H1305 H1305 V390.7 H1306 H1306 V391.0 H1307 H1307 V391.6 H1308 H1308 V393.6 H1309 H1309 V391.9 H1310 H1310 V391.7 H1311 H1311 V391.3 H1312 H1312 V391.3 H1313 H1313 V391.3 H1314 H1314 V389.9 H1315 H1315 V389.9 H1316 H1316 V391.1 H1317 H1317 V391.1 H1318 H1318 V391.1 H1319 H1319 V390.5 H1320 H1320 V390.0 H1321 H1321 V390.3 H1322 H1322 V391.3 H1323 H1323 V391.5 H1324 H1324 V391.3 H1325 H1325 V387.7 H1326 H1326 V387.7 H1327 H1327 V391.2 H1328 H1328 V391.2 H1329 H1329 V391.2 H1330 H1330 V390.3 H1331 H1331 V390.3 H1332 H1332 V392.0 H1333 H1333 V391.5 H1334 H1334 V390.5 H1335 H1335 V388.0 H1336 H1336 V389.7 H1337 H1337 V389.7 H1338 H1338 V390.4 H1339 H1339 V391.3 H1340 H1340 V391.2 H1341 H1341 V391.5 H1342 H1342 V389.3 H1343 H1343 V390.5 H1344 H1344 V390.5 H1345 H1345 V390.3 H1346 H1346 V390.3 H1347 H1347 V389.7 H1348 H1348 V389.7 H1349 H1349 V389.7 H1350 H1350 V391.2 H1351 H1351 V390.4 H1352 H1352 V390.4 H1353 H1353 V390.7 H1354 H1354 V392.2 H1355 H1355 V392.2 H1356 H1356 V390.8 H1357 H1357 V389.8 H1358 H1358 V389.8 H1359 H1359 V391.1 H1360 H1360 V392.9 H1361 H1361 V391.4 H1362 H1362 V391.4 H1363 H1363 V390.9 H1364 H1364 V390.6 H1365 H1365 V390.2 H1366 H1366 V390.2 H1367 H1367 V389.8 H1368 H1368 V389.8 H1369 H1369 V389.8 H1370 H1370 V390.0 H1371 H1371 V390.0 H1372 H1372 V388.9 H1373 H1373 V388.9 H1374 H1374 V388.9 H1375 H1375 V391.1 H1376 H1376 V390.9 H1377 H1377 V390.7 H1378 H1378 V390.7 H1379 H1379 V390.7 H1380 H1380 V389.5 H1381 H1381 V387.1 H1382 H1382 V389.5 H1383 H1383 V390.3 H1384 H1384 V390.9 H1385 H1385 V389.0 H1386 H1386 V388.4 H1387 H1387 V388.4 H1388 H1388 V390.9 H1389 H1389 V390.0 H1390 H1390 V390.0 H1391 H1391 V390.2 H1392 H1392 V390.4 H1393 H1393 V391.7 H1394 H1394 V390.6 H1395 H1395 V390.3 H1396 H1396 V389.8 H1397 H1397 V389.3 H1398 H1398 V389.3 H1399 H1399 V390.6 H1400 H1400 V391.0 H1401 H1401 V391.6 H1402 H1402 V391.6 H1403 H1403 V389.3 H1404 H1404 V389.3 H1405 H1405 V390.6 H1406 H1406 V390.1 H1407 H1407 V388.2 H1408 H1408 V388.2 H1409 H1409 V388.4 H1410 H1410 V388.8 H1411 H1411 V389.1 H1412 H1412 V389.3 H1413 H1413 V389.4 H1414 H1414 V389.5 H1415 H1415 V389.5 H1416 H1416 V389.5 H1417 H1417 V388.2 H1418 H1418 V388.2 H1419 H1419 V388.9 H1420 H1420 V389.1 H1421 H1421 V390.9 H1422 H1422 V390.8 H1423 H1423 V390.1 H1424 H1424 V390.1 H1425 H1425 V389.1 H1426 H1426 V389.1 H1427 H1427 V389.4 H1428 H1428 V389.4 H1429 H1429 V388.3 H1430 H1430 V388.3 H1431 H1431 V389.9 H1432 H1432 V389.9 H1433 H1433 V389.2 H1434 H1434 V389.2 H1435 H1435 V389.7 H1436 H1436 V389.6 H1437 H1437 V389.5 H1438 H1438 V389.5 H1439 H1439 V391.3 H1440 H1440 V390.6 H1441 H1441 V390.5 H1442 H1442 V390.7 H1443 H1443 V390.2 H1444 H1444 V390.2 H1445 H1445 V390.2 H1446 H1446 V390.0 H1447 H1447 V389.7 H1448 H1448 V389.5 H1449 H1449 V389.5 H1450 H1450 V389.5 H1451 H1451 V388.3 H1452 H1452 V388.5 H1453 H1453 V388.5 H1454 H1454 V389.0 H1455 H1455 V389.0 H1456 H1456 V388.4 H1457 H1457 V388.4 H1458 H1458 V389.6 H1459 H1459 V389.5 H1460 H1460 V389.3 H1461 H1461 V389.3 H1462 H1462 V389.3 H1463 H1463 V389.5 H1464 H1464 V389.1 H1465 H1465 V389.4 H1466 H1466 V389.4 H1467 H1467 V389.8 H1468 H1468 V388.7 H1469 H1469 V389.5 H1470 H1470 V389.7 H1471 H1471 V389.6 H1472 H1472 V390.1 H1473 H1473 V388.4 H1474 H1474 V388.4 H1475 H1475 V389.5 H1476 H1476 V389.9 H1477 H1477 V389.1 H1478 H1478 V388.5 H1479 H1479 V387.6 H1480 H1480 V387.6 H1481 H1481 V387.6 H1482 H1482 V388.8 H1483 H1483 V389.3 H1484 H1484 V388.8 H1485 H1485 V388.9 H1486 H1486 V388.9 H1487 H1487 V388.9 H1488 H1488 V388.9 H1489 H1489 V389.1 H1490 H1490 V388.9 H1491 H1491 V388.9 H1492 H1492 V388.9 H1493 H1493 V387.7 H1494 H1494 V387.7 H1495 H1495 V388.6 H1496 H1496 V389.6 H1497 H1497 V390.9 H1498 H1498 V388.7 H1499 H1499 V388.6 H1500 H1500 V388.6 H1501 H1501 V391.0 H1502 H1502 V419.5 H1501 H1501 V426.4 H1500 H1500 V426.4 H1499 H1499 V423.6 H1498 H1498 V423.2 H1497 H1497 V425.8 H1496 H1496 V427.1 H1495 H1495 V430.4 H1494 H1494 V425.7 H1493 H1493 V424.9 H1492 H1492 V421.5 H1491 H1491 V421.9 H1490 H1490 V427.9 H1489 H1489 V427.9 H1488 H1488 V427.5 H1487 H1487 V427.5 H1486 H1486 V426.5 H1485 H1485 V428.1 H1484 H1484 V420.6 H1483 H1483 V423.2 H1482 H1482 V422.3 H1481 H1481 V422.5 H1480 H1480 V422.5 H1479 H1479 V422.5 H1478 H1478 V421.8 H1477 H1477 V422.0 H1476 H1476 V422.1 H1475 H1475 V422.1 H1474 H1474 V422.1 H1473 H1473 V428.5 H1472 H1472 V426.4 H1471 H1471 V426.4 H1470 H1470 V423.9 H1469 H1469 V423.9 H1468 H1468 V425.4 H1467 H1467 V425.4 H1466 H1466 V422.8 H1465 H1465 V422.3 H1464 H1464 V423.3 H1463 H1463 V423.3 H1462 H1462 V427.1 H1461 H1461 V424.0 H1460 H1460 V431.4 H1459 H1459 V424.4 H1458 H1458 V424.6 H1457 H1457 V424.4 H1456 H1456 V424.6 H1455 H1455 V425.8 H1454 H1454 V425.8 H1453 H1453 V421.3 H1452 H1452 V421.7 H1451 H1451 V425.3 H1450 H1450 V426.7 H1449 H1449 V424.0 H1448 H1448 V422.3 H1447 H1447 V424.0 H1446 H1446 V423.8 H1445 H1445 V424.1 H1444 H1444 V425.5 H1443 H1443 V423.7 H1442 H1442 V425.5 H1441 H1441 V425.8 H1440 H1440 V425.8 H1439 H1439 V425.6 H1438 H1438 V425.3 H1437 H1437 V424.8 H1436 H1436 V420.2 H1435 H1435 V423.5 H1434 H1434 V424.1 H1433 H1433 V425.1 H1432 H1432 V426.0 H1431 H1431 V424.1 H1430 H1430 V425.5 H1429 H1429 V423.3 H1428 H1428 V423.3 H1427 H1427 V420.1 H1426 H1426 V420.5 H1425 H1425 V421.4 H1424 H1424 V424.5 H1423 H1423 V420.4 H1422 H1422 V424.2 H1421 H1421 V420.3 H1420 H1420 V422.9 H1419 H1419 V422.7 H1418 H1418 V422.9 H1417 H1417 V423.0 H1416 H1416 V422.5 H1415 H1415 V422.5 H1414 H1414 V420.9 H1413 H1413 V420.9 H1412 H1412 V424.5 H1411 H1411 V424.5 H1410 H1410 V419.0 H1409 H1409 V419.2 H1408 H1408 V420.1 H1407 H1407 V419.3 H1406 H1406 V418.0 H1405 H1405 V418.3 H1404 H1404 V420.6 H1403 H1403 V420.6 H1402 H1402 V419.1 H1401 H1401 V419.1 H1400 H1400 V421.7 H1399 H1399 V420.4 H1398 H1398 V420.4 H1397 H1397 V420.6 H1396 H1396 V420.6 H1395 H1395 V420.4 H1394 H1394 V422.2 H1393 H1393 V420.5 H1392 H1392 V420.5 H1391 H1391 V421.7 H1390 H1390 V421.8 H1389 H1389 V421.7 H1388 H1388 V421.8 H1387 H1387 V421.5 H1386 H1386 V419.9 H1385 H1385 V419.0 H1384 H1384 V422.8 H1383 H1383 V422.8 H1382 H1382 V420.9 H1381 H1381 V421.1 H1380 H1380 V421.1 H1379 H1379 V420.9 H1378 H1378 V419.9 H1377 H1377 V420.6 H1376 H1376 V419.9 H1375 H1375 V419.9 H1374 H1374 V421.6 H1373 H1373 V421.6 H1372 H1372 V420.4 H1371 H1371 V417.9 H1370 H1370 V417.5 H1369 H1369 V417.5 H1368 H1368 V417.7 H1367 H1367 V423.0 H1366 H1366 V420.1 H1365 H1365 V420.1 H1364 H1364 V417.8 H1363 H1363 V421.8 H1362 H1362 V421.8 H1361 H1361 V421.8 H1360 H1360 V419.8 H1359 H1359 V425.0 H1358 H1358 V423.7 H1357 H1357 V423.7 H1356 H1356 V420.4 H1355 H1355 V422.3 H1354 H1354 V422.3 H1353 H1353 V423.3 H1352 H1352 V420.3 H1351 H1351 V427.3 H1350 H1350 V422.2 H1349 H1349 V422.2 H1348 H1348 V421.8 H1347 H1347 V417.4 H1346 H1346 V417.4 H1345 H1345 V417.4 H1344 H1344 V422.3 H1343 H1343 V416.9 H1342 H1342 V419.8 H1341 H1341 V417.5 H1340 H1340 V419.2 H1339 H1339 V419.2 H1338 H1338 V423.2 H1337 H1337 V423.2 H1336 H1336 V422.5 H1335 H1335 V415.3 H1334 H1334 V417.4 H1333 H1333 V420.3 H1332 H1332 V420.3 H1331 H1331 V421.9 H1330 H1330 V420.0 H1329 H1329 V419.2 H1328 H1328 V417.9 H1327 H1327 V419.2 H1326 H1326 V422.5 H1325 H1325 V419.3 H1324 H1324 V419.3 H1323 H1323 V424.5 H1322 H1322 V424.5 H1321 H1321 V424.5 H1320 H1320 V421.1 H1319 H1319 V421.4 H1318 H1318 V421.4 H1317 H1317 V421.4 H1316 H1316 V422.4 H1315 H1315 V422.4 H1314 H1314 V420.5 H1313 H1313 V420.5 H1312 H1312 V420.7 H1311 H1311 V420.7 H1310 H1310 V420.6 H1309 H1309 V419.0 H1308 H1308 V416.2 H1307 H1307 V417.9 H1306 H1306 V417.9 H1305 H1305 V416.9 H1304 H1304 V416.9 H1303 H1303 V419.2 H1302 H1302 V422.1 H1301 H1301 V419.2 H1300 H1300 V415.0 H1299 H1299 V415.0 H1298 H1298 V416.2 H1297 H1297 V418.5 H1296 H1296 V422.1 H1295 H1295 V419.9 H1294 H1294 V421.2 H1293 H1293 V419.9 H1292 H1292 V419.7 H1291 H1291 V422.7 H1290 H1290 V422.7 H1289 H1289 V424.7 H1288 H1288 V417.3 H1287 H1287 V417.7 H1286 H1286 V425.6 H1285 H1285 V425.6 H1284 H1284 V425.6 H1283 H1283 V416.3 H1282 H1282 V420.9 H1281 H1281 V418.4 H1280 H1280 V418.4 H1279 H1279 V417.5 H1278 H1278 V416.7 H1277 H1277 V414.9 H1276 H1276 V414.5 H1275 H1275 V417.0 H1274 H1274 V420.1 H1273 H1273 V420.1 H1272 H1272 V417.0 H1271 H1271 V418.3 H1270 H1270 V421.8 H1269 H1269 V420.2 H1268 H1268 V420.2 H1267 H1267 V416.0 H1266 H1266 V415.8 H1265 H1265 V415.8 H1264 H1264 V413.6 H1263 H1263 V418.2 H1262 H1262 V420.2 H1261 H1261 V420.2 H1260 H1260 V421.6 H1259 H1259 V420.3 H1258 H1258 V419.0 H1257 H1257 V419.0 H1256 H1256 V419.0 H1255 H1255 V417.7 H1254 H1254 V418.2 H1253 H1253 V416.2 H1252 H1252 V418.2 H1251 H1251 V418.5 H1250 H1250 V419.5 H1249 H1249 V419.5 H1248 H1248 V414.8 H1247 H1247 V414.9 H1246 H1246 V414.9 H1245 H1245 V416.1 H1244 H1244 V416.1 H1243 H1243 V415.9 H1242 H1242 V417.2 H1241 H1241 V420.8 H1240 H1240 V418.1 H1239 H1239 V416.9 H1238 H1238 V414.7 H1237 H1237 V414.7 H1236 H1236 V417.5 H1235 H1235 V417.5 H1234 H1234 V416.3 H1233 H1233 V418.1 H1232 H1232 V418.1 H1231 H1231 V414.8 H1230 H1230 V415.3 H1229 H1229 V415.7 H1228 H1228 V415.7 H1227 H1227 V415.7 H1226 H1226 V415.5 H1225 H1225 V415.5 H1224 H1224 V415.5 H1223 H1223 V418.5 H1222 H1222 V418.5 H1221 H1221 V418.5 H1220 H1220 V411.8 H1219 H1219 V411.6 H1218 H1218 V412.6 H1217 H1217 V418.0 H1216 H1216 V418.0 H1215 H1215 V417.5 H1214 H1214 V416.7 H1213 H1213 V417.7 H1212 H1212 V417.7 H1211 H1211 V418.3 H1210 H1210 V418.5 H1209 H1209 V418.8 H1208 H1208 V418.8 H1207 H1207 V418.8 H1206 H1206 V412.1 H1205 H1205 V420.4 H1204 H1204 V414.8 H1203 H1203 V414.7 H1202 H1202 V413.9 H1201 H1201 V416.5 H1200 H1200 V418.3 H1199 H1199 V412.8 H1198 H1198 V415.6 H1197 H1197 V415.6 H1196 H1196 V415.6 H1195 H1195 V414.5 H1194 H1194 V414.3 H1193 H1193 V413.8 H1192 H1192 V413.0 H1191 H1191 V413.4 H1190 H1190 V416.5 H1189 H1189 V416.5 H1188 H1188 V412.2 H1187 H1187 V412.0 H1186 H1186 V413.8 H1185 H1185 V414.9 H1184 H1184 V414.9 H1183 H1183 V415.4 H1182 H1182 V415.4 H1181 H1181 V415.2 H1180 H1180 V415.1 H1179 H1179 V415.1 H1178 H1178 V415.5 H1177 H1177 V415.5 H1176 H1176 V415.8 H1175 H1175 V411.2 H1174 H1174 V412.7 H1173 H1173 V414.6 H1172 H1172 V414.9 H1171 H1171 V414.9 H1170 H1170 V414.9 H1169 H1169 V414.8 H1168 H1168 V411.8 H1167 H1167 V412.4 H1166 H1166 V412.4 H1165 H1165 V412.4 H1164 H1164 V412.4 H1163 H1163 V412.0 H1162 H1162 V413.1 H1161 H1161 V414.7 H1160 H1160 V413.7 H1159 H1159 V413.7 H1158 H1158 V412.0 H1157 H1157 V410.9 H1156 H1156 V410.8 H1155 H1155 V411.9 H1154 H1154 V413.2 H1153 H1153 V411.9 H1152 H1152 V411.5 H1151 H1151 V411.1 H1150 H1150 V411.5 H1149 H1149 V409.5 H1148 H1148 V411.8 H1147 H1147 V415.3 H1146 H1146 V415.3 H1145 H1145 V416.3 H1144 H1144 V416.2 H1143 H1143 V413.8 H1142 H1142 V412.9 H1141 H1141 V412.3 H1140 H1140 V414.0 H1139 H1139 V414.0 H1138 H1138 V413.5 H1137 H1137 V413.5 H1136 H1136 V415.0 H1135 H1135 V415.2 H1134 H1134 V415.2 H1133 H1133 V412.4 H1132 H1132 V412.4 H1131 H1131 V412.0 H1130 H1130 V413.6 H1129 H1129 V413.1 H1128 H1128 V413.1 H1127 H1127 V411.8 H1126 H1126 V415.8 H1125 H1125 V415.8 H1124 H1124 V413.8 H1123 H1123 V413.3 H1122 H1122 V413.3 H1121 H1121 V413.1 H1120 H1120 V411.2 H1119 H1119 V411.5 H1118 H1118 V411.5 H1117 H1117 V411.5 H1116 H1116 V415.0 H1115 H1115 V414.5 H1114 H1114 V414.5 H1113 H1113 V412.2 H1112 H1112 V412.2 H1111 H1111 V413.1 H1110 H1110 V409.8 H1109 H1109 V408.9 H1108 H1108 V410.2 H1107 H1107 V410.2 H1106 H1106 V409.9 H1105 H1105 V409.9 H1104 H1104 V410.6 H1103 H1103 V414.2 H1102 H1102 V414.5 H1101 H1101 V414.5 H1100 H1100 V417.6 H1099 H1099 V416.8 H1098 H1098 V416.8 H1097 H1097 V410.3 H1096 H1096 V410.3 H1095 H1095 V410.3 H1094 H1094 V412.6 H1093 H1093 V409.1 H1092 H1092 V412.6 H1091 H1091 V412.0 H1090 H1090 V412.0 H1089 H1089 V412.0 H1088 H1088 V409.1 H1087 H1087 V417.3 H1086 H1086 V417.3 H1085 H1085 V413.0 H1084 H1084 V413.0 H1083 H1083 V409.4 H1082 H1082 V412.1 H1081 H1081 V412.1 H1080 H1080 V412.1 H1079 H1079 V407.2 H1078 H1078 V407.1 H1077 H1077 V407.1 H1076 H1076 V406.9 H1075 H1075 V407.0 H1074 H1074 V407.0 H1073 H1073 V407.6 H1072 H1072 V407.6 H1071 H1071 V412.6 H1070 H1070 V412.6 H1069 H1069 V408.3 H1068 H1068 V405.3 H1067 H1067 V406.2 H1066 H1066 V407.3 H1065 H1065 V407.3 H1064 H1064 V407.2 H1063 H1063 V408.1 H1062 H1062 V415.4 H1061 H1061 V415.4 H1060 H1060 V405.6 H1059 H1059 V406.0 H1058 H1058 V406.8 H1057 H1057 V410.0 H1056 H1056 V410.0 H1055 H1055 V407.6 H1054 H1054 V408.4 H1053 H1053 V408.5 H1052 H1052 V409.2 H1051 H1051 V409.5 H1050 H1050 V411.1 H1049 H1049 V409.6 H1048 H1048 V407.8 H1047 H1047 V407.8 H1046 H1046 V414.5 H1045 H1045 V414.5 H1044 H1044 V414.5 H1043 H1043 V406.8 H1042 H1042 V405.3 H1041 H1041 V406.9 H1040 H1040 V407.8 H1039 H1039 V410.8 H1038 H1038 V415.5 H1037 H1037 V408.2 H1036 H1036 V408.3 H1035 H1035 V408.8 H1034 H1034 V412.4 H1033 H1033 V412.4 H1032 H1032 V405.9 H1031 H1031 V407.6 H1030 H1030 V411.8 H1029 H1029 V413.6 H1028 H1028 V413.6 H1027 H1027 V412.3 H1026 H1026 V408.0 H1025 H1025 V408.0 H1024 H1024 V412.0 H1023 H1023 V412.0 H1022 H1022 V413.4 H1021 H1021 V407.6 H1020 H1020 V410.9 H1019 H1019 V405.2 H1018 H1018 V402.8 H1017 H1017 V402.5 H1016 H1016 V402.5 H1015 H1015 V402.8 H1014 H1014 V404.5 H1013 H1013 V405.1 H1012 H1012 V405.1 H1011 H1011 V415.7 H1010 H1010 V408.5 H1009 H1009 V408.5 H1008 H1008 V409.5 H1007 H1007 V409.5 H1006 H1006 V408.2 H1005 H1005 V403.4 H1004 H1004 V405.2 H1003 H1003 V405.9 H1002 H1002 V405.8 H1001 H1001 V402.9 H1000 H1000 V400.9 H999 H999 V400.9 H998 H998 V405.3 H997 H997 V405.3 H996 H996 V404.4 H995 H995 V409.2 H994 H994 V408.5 H993 H993 V405.1 H992 H992 V405.1 H991 H991 V413.7 H990 H990 V413.7 H989 H989 V412.3 H988 H988 V409.7 H987 H987 V409.2 H986 H986 V406.2 H985 H985 V406.1 H984 H984 V405.4 H983 H983 V405.4 H982 H982 V405.7 H981 H981 V405.7 H980 H980 V400.2 H979 H979 V400.2 H978 H978 V395.8 H977 H977 V408.0 H976 H976 V408.6 H975 H975 V408.6 H974 H974 V399.1 H973 H973 V397.9 H972 H972 V403.7 H971 H971 V403.7 H970 H970 V402.4 H969 H969 V402.4 H968 H968 V401.3 H967 H967 V399.3 H966 H966 V403.1 H965 H965 V401.7 H964 H964 V405.9 H963 H963 V401.2 H962 H962 V406.5 H961 H961 V404.0 H960 H960 V406.2 H959 H959 V404.0 H958 H958 V404.0 H957 H957 V403.6 H956 H956 V399.1 H955 H955 V399.3 H954 H954 V399.3 H953 H953 V398.0 H952 H952 V406.6 H951 H951 V401.8 H950 H950 V401.8 H949 H949 V401.8 H948 H948 V398.2 H947 H947 V404.4 H946 H946 V404.4 H945 H945 V399.0 H944 H944 V407.6 H943 H943 V407.6 H942 H942 V395.9 H941 H941 V399.2 H940 H940 V401.7 H939 H939 V401.7 H938 H938 V402.3 H937 H937 V406.2 H936 H936 V406.2 H935 H935 V398.3 H934 H934 V402.9 H933 H933 V402.9 H932 H932 V400.9 H931Z" fill="#b63a46"/><path clip-path="url(#c2)" d="M953 397.6 H953 V397.6 H954 H954 V397.5 H955 H955 V393.4 H956 H956 V393.4 H957 H957 V401.9 H956 H956 V397.9 H955 H955 V399.1 H954 H954 V399.1 H953Z M958 401.5 H958 V401.5 H959 H959 V404.0 H958Z M960 397.6 H960 V397.6 H961 H961 V395.0 H962 H962 V399.5 H963 H963 V400.4 H962 H962 V400.4 H961 H961 V400.4 H960Z M964 396.0 H964 V396.0 H965 H965 V396.0 H966 H966 V397.6 H965 H965 V401.2 H964Z M967 397.7 H967 V397.7 H968 H968 V397.7 H969 H969 V397.7 H970 H970 V397.5 H971 H971 V396.6 H972 H972 V395.4 H973 H973 V395.4 H974 H974 V398.7 H975 H975 V401.5 H976 H976 V395.0 H977 H977 V394.5 H978 H978 V394.5 H979 H979 V393.2 H980 H980 V391.5 H981 H981 V393.8 H982 H982 V397.7 H983 H983 V397.7 H984 H984 V404.5 H985 H985 V401.7 H986 H986 V398.9 H987 H987 V397.5 H988 H988 V399.7 H989 H989 V399.7 H990 H990 V396.9 H991 H991 V396.2 H992 H992 V398.5 H993 H993 V402.9 H994 H994 V403.8 H995 H995 V394.6 H996 H996 V394.6 H997 H997 V396.0 H998 H998 V396.0 H999 H999 V393.8 H1000 H1000 V392.6 H1001 H1001 V394.6 H1002 H1002 V396.6 H1003 H1003 V396.6 H1004 H1004 V396.6 H1005 H1005 V397.9 H1006 H1006 V397.9 H1007 H1007 V395.9 H1008 H1008 V395.9 H1009 H1009 V395.5 H1010 H1010 V395.5 H1011 H1011 V395.5 H1012 H1012 V395.5 H1013 H1013 V395.4 H1014 H1014 V395.4 H1015 H1015 V397.4 H1016 H1016 V397.3 H1017 H1017 V397.3 H1018 H1018 V397.3 H1019 H1019 V397.9 H1020 H1020 V397.9 H1021 H1021 V399.5 H1022 H1022 V399.5 H1023 H1023 V399.4 H1024 H1024 V397.4 H1025 H1025 V395.2 H1026 H1026 V403.1 H1027 H1027 V396.2 H1028 H1028 V398.1 H1029 H1029 V398.1 H1030 H1030 V396.1 H1031 H1031 V396.1 H1032 H1032 V397.9 H1033 H1033 V397.6 H1034 H1034 V399.0 H1035 H1035 V399.0 H1036 H1036 V398.2 H1037 H1037 V394.4 H1038 H1038 V396.7 H1039 H1039 V396.7 H1040 H1040 V398.2 H1041 H1041 V398.2 H1042 H1042 V398.7 H1043 H1043 V397.6 H1044 H1044 V395.0 H1045 H1045 V394.6 H1046 H1046 V394.1 H1047 H1047 V394.1 H1048 H1048 V396.1 H1049 H1049 V397.0 H1050 H1050 V400.6 H1051 H1051 V395.8 H1052 H1052 V397.2 H1053 H1053 V397.0 H1054 H1054 V397.0 H1055 H1055 V397.9 H1056 H1056 V393.6 H1057 H1057 V393.6 H1058 H1058 V394.0 H1059 H1059 V394.0 H1060 H1060 V397.6 H1061 H1061 V398.3 H1062 H1062 V403.2 H1063 H1063 V399.1 H1064 H1064 V399.2 H1065 H1065 V397.6 H1066 H1066 V396.5 H1067 H1067 V396.3 H1068 H1068 V397.4 H1069 H1069 V397.4 H1070 H1070 V397.4 H1071 H1071 V398.5 H1072 H1072 V397.8 H1073 H1073 V397.4 H1074 H1074 V397.8 H1075 H1075 V398.7 H1076 H1076 V397.8 H1077 H1077 V394.5 H1078 H1078 V394.5 H1079 H1079 V395.9 H1080 H1080 V394.7 H1081 H1081 V394.4 H1082 H1082 V394.4 H1083 H1083 V395.5 H1084 H1084 V396.0 H1085 H1085 V395.8 H1086 H1086 V395.3 H1087 H1087 V397.2 H1088 H1088 V394.8 H1089 H1089 V394.8 H1090 H1090 V395.6 H1091 H1091 V397.8 H1092 H1092 V395.6 H1093 H1093 V397.2 H1094 H1094 V394.5 H1095 H1095 V394.1 H1096 H1096 V394.1 H1097 H1097 V395.4 H1098 H1098 V393.1 H1099 H1099 V393.1 H1100 H1100 V397.7 H1101 H1101 V398.5 H1102 H1102 V398.3 H1103 H1103 V394.7 H1104 H1104 V394.7 H1105 H1105 V394.7 H1106 H1106 V393.6 H1107 H1107 V393.6 H1108 H1108 V395.3 H1109 H1109 V395.8 H1110 H1110 V395.3 H1111 H1111 V396.3 H1112 H1112 V396.5 H1113 H1113 V396.3 H1114 H1114 V396.3 H1115 H1115 V396.9 H1116 H1116 V395.2 H1117 H1117 V396.2 H1118 H1118 V396.9 H1119 H1119 V393.8 H1120 H1120 V391.4 H1121 H1121 V392.4 H1122 H1122 V392.4 H1123 H1123 V393.7 H1124 H1124 V396.6 H1125 H1125 V396.5 H1126 H1126 V393.8 H1127 H1127 V393.8 H1128 H1128 V394.4 H1129 H1129 V396.4 H1130 H1130 V390.9 H1131 H1131 V391.6 H1132 H1132 V391.6 H1133 H1133 V391.6 H1134 H1134 V393.6 H1135 H1135 V393.6 H1136 H1136 V395.3 H1137 H1137 V395.3 H1138 H1138 V395.3 H1139 H1139 V394.4 H1140 H1140 V394.4 H1141 H1141 V396.8 H1142 H1142 V394.4 H1143 H1143 V394.4 H1144 H1144 V395.7 H1145 H1145 V395.7 H1146 H1146 V397.8 H1147 H1147 V396.9 H1148 H1148 V395.0 H1149 H1149 V392.6 H1150 H1150 V392.6 H1151 H1151 V390.4 H1152 H1152 V390.8 H1153 H1153 V394.4 H1154 H1154 V394.4 H1155 H1155 V394.1 H1156 H1156 V392.9 H1157 H1157 V395.7 H1158 H1158 V396.5 H1159 H1159 V394.6 H1160 H1160 V394.1 H1161 H1161 V393.8 H1162 H1162 V394.5 H1163 H1163 V393.3 H1164 H1164 V392.9 H1165 H1165 V392.9 H1166 H1166 V395.3 H1167 H1167 V393.9 H1168 H1168 V391.3 H1169 H1169 V391.3 H1170 H1170 V395.5 H1171 H1171 V395.5 H1172 H1172 V395.1 H1173 H1173 V395.1 H1174 H1174 V395.1 H1175 H1175 V395.1 H1176 H1176 V393.3 H1177 H1177 V393.3 H1178 H1178 V394.0 H1179 H1179 V396.2 H1180 H1180 V395.8 H1181 H1181 V392.4 H1182 H1182 V396.2 H1183 H1183 V395.5 H1184 H1184 V394.5 H1185 H1185 V393.7 H1186 H1186 V393.2 H1187 H1187 V392.5 H1188 H1188 V393.2 H1189 H1189 V391.9 H1190 H1190 V390.5 H1191 H1191 V391.7 H1192 H1192 V392.0 H1193 H1193 V391.8 H1194 H1194 V392.6 H1195 H1195 V393.1 H1196 H1196 V393.4 H1197 H1197 V395.3 H1198 H1198 V395.3 H1199 H1199 V394.3 H1200 H1200 V392.8 H1201 H1201 V392.6 H1202 H1202 V393.1 H1203 H1203 V393.3 H1204 H1204 V395.3 H1205 H1205 V393.0 H1206 H1206 V392.9 H1207 H1207 V392.9 H1208 H1208 V390.9 H1209 H1209 V391.5 H1210 H1210 V391.8 H1211 H1211 V393.6 H1212 H1212 V393.7 H1213 H1213 V390.2 H1214 H1214 V390.2 H1215 H1215 V391.1 H1216 H1216 V392.2 H1217 H1217 V394.4 H1218 H1218 V391.4 H1219 H1219 V391.4 H1220 H1220 V393.3 H1221 H1221 V393.6 H1222 H1222 V394.1 H1223 H1223 V393.3 H1224 H1224 V394.1 H1225 H1225 V395.0 H1226 H1226 V395.1 H1227 H1227 V395.0 H1228 H1228 V394.0 H1229 H1229 V394.0 H1230 H1230 V391.4 H1231 H1231 V393.0 H1232 H1232 V392.7 H1233 H1233 V393.5 H1234 H1234 V391.7 H1235 H1235 V391.7 H1236 H1236 V391.8 H1237 H1237 V392.8 H1238 H1238 V393.9 H1239 H1239 V392.8 H1240 H1240 V391.9 H1241 H1241 V391.7 H1242 H1242 V392.1 H1243 H1243 V393.4 H1244 H1244 V393.3 H1245 H1245 V392.1 H1246 H1246 V392.1 H1247 H1247 V394.2 H1248 H1248 V394.5 H1249 H1249 V394.5 H1250 H1250 V393.4 H1251 H1251 V393.4 H1252 H1252 V392.0 H1253 H1253 V392.9 H1254 H1254 V392.5 H1255 H1255 V392.3 H1256 H1256 V392.1 H1257 H1257 V392.1 H1258 H1258 V392.5 H1259 H1259 V392.5 H1260 H1260 V393.0 H1261 H1261 V393.0 H1262 H1262 V394.0 H1263 H1263 V393.3 H1264 H1264 V393.0 H1265 H1265 V391.3 H1266 H1266 V392.0 H1267 H1267 V391.8 H1268 H1268 V392.5 H1269 H1269 V392.5 H1270 H1270 V393.0 H1271 H1271 V392.5 H1272 H1272 V393.2 H1273 H1273 V393.1 H1274 H1274 V392.2 H1275 H1275 V390.9 H1276 H1276 V391.3 H1277 H1277 V391.3 H1278 H1278 V392.6 H1279 H1279 V390.8 H1280 H1280 V390.9 H1281 H1281 V391.7 H1282 H1282 V392.2 H1283 H1283 V391.9 H1284 H1284 V391.9 H1285 H1285 V391.9 H1286 H1286 V392.8 H1287 H1287 V392.1 H1288 H1288 V390.0 H1289 H1289 V392.6 H1290 H1290 V390.8 H1291 H1291 V390.8 H1292 H1292 V391.4 H1293 H1293 V391.6 H1294 H1294 V392.7 H1295 H1295 V391.6 H1296 H1296 V391.6 H1297 H1297 V391.2 H1298 H1298 V391.6 H1299 H1299 V393.1 H1300 H1300 V393.0 H1301 H1301 V393.0 H1302 H1302 V393.0 H1303 H1303 V392.2 H1304 H1304 V390.6 H1305 H1305 V392.4 H1306 H1306 V391.6 H1307 H1307 V392.4 H1308 H1308 V393.9 H1309 H1309 V392.1 H1310 H1310 V391.9 H1311 H1311 V391.9 H1312 H1312 V392.0 H1313 H1313 V392.5 H1314 H1314 V391.2 H1315 H1315 V391.2 H1316 H1316 V393.0 H1317 H1317 V392.3 H1318 H1318 V391.5 H1319 H1319 V390.9 H1320 H1320 V390.3 H1321 H1321 V390.5 H1322 H1322 V391.5 H1323 H1323 V391.7 H1324 H1324 V391.7 H1325 H1325 V388.5 H1326 H1326 V388.5 H1327 H1327 V391.8 H1328 H1328 V392.0 H1329 H1329 V392.0 H1330 H1330 V391.2 H1331 H1331 V391.5 H1332 H1332 V392.5 H1333 H1333 V392.0 H1334 H1334 V390.6 H1335 H1335 V390.5 H1336 H1336 V390.5 H1337 H1337 V390.4 H1338 H1338 V391.2 H1339 H1339 V392.9 H1340 H1340 V392.9 H1341 H1341 V391.5 H1342 H1342 V391.2 H1343 H1343 V391.2 H1344 H1344 V390.5 H1345 H1345 V390.3 H1346 H1346 V390.3 H1347 H1347 V390.1 H1348 H1348 V390.1 H1349 H1349 V390.1 H1350 H1350 V391.8 H1351 H1351 V390.7 H1352 H1352 V390.7 H1353 H1353 V393.2 H1354 H1354 V392.4 H1355 H1355 V392.4 H1356 H1356 V391.4 H1357 H1357 V390.8 H1358 H1358 V390.8 H1359 H1359 V391.8 H1360 H1360 V393.3 H1361 H1361 V391.9 H1362 H1362 V391.8 H1363 H1363 V391.8 H1364 H1364 V390.9 H1365 H1365 V390.6 H1366 H1366 V390.9 H1367 H1367 V390.7 H1368 H1368 V390.7 H1369 H1369 V391.6 H1370 H1370 V391.8 H1371 H1371 V390.2 H1372 H1372 V390.0 H1373 H1373 V390.0 H1374 H1374 V390.0 H1375 H1375 V391.5 H1376 H1376 V391.1 H1377 H1377 V390.8 H1378 H1378 V390.7 H1379 H1379 V390.7 H1380 H1380 V390.8 H1381 H1381 V389.5 H1382 H1382 V390.3 H1383 H1383 V390.9 H1384 H1384 V391.6 H1385 H1385 V391.6 H1386 H1386 V389.0 H1387 H1387 V389.7 H1388 H1388 V391.3 H1389 H1389 V390.9 H1390 H1390 V390.2 H1391 H1391 V390.3 H1392 H1392 V391.9 H1393 H1393 V391.9 H1394 H1394 V390.8 H1395 H1395 V390.6 H1396 H1396 V390.1 H1397 H1397 V389.6 H1398 H1398 V389.8 H1399 H1399 V391.0 H1400 H1400 V391.0 H1401 H1401 V391.6 H1402 H1402 V392.0 H1403 H1403 V391.2 H1404 H1404 V390.6 H1405 H1405 V390.6 H1406 H1406 V390.6 H1407 H1407 V388.4 H1408 H1408 V388.4 H1409 H1409 V388.6 H1410 H1410 V389.0 H1411 H1411 V389.3 H1412 H1412 V390.6 H1413 H1413 V390.6 H1414 H1414 V390.0 H1415 H1415 V389.5 H1416 H1416 V389.5 H1417 H1417 V389.5 H1418 H1418 V389.3 H1419 H1419 V389.1 H1420 H1420 V389.2 H1421 H1421 V391.1 H1422 H1422 V391.1 H1423 H1423 V390.4 H1424 H1424 V390.1 H1425 H1425 V389.7 H1426 H1426 V389.3 H1427 H1427 V390.5 H1428 H1428 V389.5 H1429 H1429 V389.5 H1430 H1430 V390.3 H1431 H1431 V390.3 H1432 H1432 V390.3 H1433 H1433 V390.3 H1434 H1434 V389.8 H1435 H1435 V389.8 H1436 H1436 V389.7 H1437 H1437 V389.6 H1438 H1438 V389.9 H1439 H1439 V391.4 H1440 H1440 V390.8 H1441 H1441 V390.6 H1442 H1442 V391.1 H1443 H1443 V390.5 H1444 H1444 V390.5 H1445 H1445 V390.5 H1446 H1446 V390.2 H1447 H1447 V390.0 H1448 H1448 V389.7 H1449 H1449 V389.7 H1450 H1450 V389.8 H1451 H1451 V388.7 H1452 H1452 V388.7 H1453 H1453 V388.7 H1454 H1454 V389.3 H1455 H1455 V389.2 H1456 H1456 V389.0 H1457 H1457 V389.2 H1458 H1458 V390.1 H1459 H1459 V390.2 H1460 H1460 V389.5 H1461 H1461 V389.5 H1462 H1462 V389.5 H1463 H1463 V390.3 H1464 H1464 V390.0 H1465 H1465 V390.0 H1466 H1466 V390.0 H1467 H1467 V389.8 H1468 H1468 V389.5 H1469 H1469 V389.8 H1470 H1470 V390.2 H1471 H1471 V389.7 H1472 H1472 V390.2 H1473 H1473 V389.6 H1474 H1474 V389.5 H1475 H1475 V390.1 H1476 H1476 V390.1 H1477 H1477 V389.8 H1478 H1478 V388.7 H1479 H1479 V387.7 H1480 H1480 V387.7 H1481 H1481 V388.8 H1482 H1482 V389.5 H1483 H1483 V389.5 H1484 H1484 V389.0 H1485 H1485 V389.0 H1486 H1486 V389.3 H1487 H1487 V388.9 H1488 H1488 V389.5 H1489 H1489 V389.9 H1490 H1490 V388.9 H1491 H1491 V388.9 H1492 H1492 V389.1 H1493 H1493 V389.7 H1494 H1494 V388.6 H1495 H1495 V389.6 H1496 H1496 V389.8 H1497 H1497 V391.0 H1498 H1498 V389.7 H1499 H1499 V388.7 H1500 H1500 V389.8 H1501 H1501 V391.2 H1502 H1502 V419.4 H1501 H1501 V423.6 H1500 H1500 V423.6 H1499 H1499 V423.4 H1498 H1498 V422.6 H1497 H1497 V424.9 H1496 H1496 V424.9 H1495 H1495 V427.1 H1494 H1494 V424.9 H1493 H1493 V422.0 H1492 H1492 V420.7 H1491 H1491 V421.8 H1490 H1490 V424.4 H1489 H1489 V424.4 H1488 H1488 V426.5 H1487 H1487 V426.5 H1486 H1486 V423.3 H1485 H1485 V423.1 H1484 H1484 V419.8 H1483 H1483 V422.3 H1482 H1482 V421.9 H1481 H1481 V422.3 H1480 H1480 V421.8 H1479 H1479 V421.8 H1478 H1478 V421.7 H1477 H1477 V421.8 H1476 H1476 V422.0 H1475 H1475 V421.0 H1474 H1474 V421.0 H1473 H1473 V426.4 H1472 H1472 V419.8 H1471 H1471 V420.0 H1470 H1470 V422.7 H1469 H1469 V422.7 H1468 H1468 V423.9 H1467 H1467 V422.8 H1466 H1466 V422.3 H1465 H1465 V421.6 H1464 H1464 V422.3 H1463 H1463 V422.4 H1462 H1462 V423.3 H1461 H1461 V422.4 H1460 H1460 V424.0 H1459 H1459 V424.0 H1458 H1458 V424.4 H1457 H1457 V423.1 H1456 H1456 V424.2 H1455 H1455 V424.7 H1454 H1454 V424.7 H1453 H1453 V420.7 H1452 H1452 V421.3 H1451 H1451 V421.7 H1450 H1450 V425.3 H1449 H1449 V422.3 H1448 H1448 V421.5 H1447 H1447 V420.8 H1446 H1446 V421.1 H1445 H1445 V423.8 H1444 H1444 V423.8 H1443 H1443 V422.5 H1442 H1442 V424.6 H1441 H1441 V425.6 H1440 H1440 V425.6 H1439 H1439 V424.8 H1438 H1438 V424.8 H1437 H1437 V424.3 H1436 H1436 V419.3 H1435 H1435 V421.3 H1434 H1434 V423.8 H1433 H1433 V424.1 H1432 H1432 V424.1 H1431 H1431 V421.4 H1430 H1430 V423.3 H1429 H1429 V421.9 H1428 H1428 V421.9 H1427 H1427 V419.3 H1426 H1426 V420.4 H1425 H1425 V420.5 H1424 H1424 V421.4 H1423 H1423 V420.3 H1422 H1422 V420.4 H1421 H1421 V420.2 H1420 H1420 V420.2 H1419 H1419 V420.2 H1418 H1418 V422.7 H1417 H1417 V420.2 H1416 H1416 V420.2 H1415 H1415 V420.2 H1414 H1414 V419.6 H1413 H1413 V420.4 H1412 H1412 V423.0 H1411 H1411 V423.0 H1410 H1410 V418.8 H1409 H1409 V418.8 H1408 H1408 V419.3 H1407 H1407 V419.0 H1406 H1406 V417.5 H1405 H1405 V418.0 H1404 H1404 V420.5 H1403 H1403 V420.5 H1402 H1402 V418.7 H1401 H1401 V418.7 H1400 H1400 V419.5 H1399 H1399 V420.0 H1398 H1398 V420.0 H1397 H1397 V420.4 H1396 H1396 V420.3 H1395 H1395 V420.3 H1394 H1394 V420.4 H1393 H1393 V418.9 H1392 H1392 V418.9 H1391 H1391 V419.5 H1390 H1390 V421.7 H1389 H1389 V420.7 H1388 H1388 V420.7 H1387 H1387 V420.7 H1386 H1386 V419.0 H1385 H1385 V417.9 H1384 H1384 V420.9 H1383 H1383 V420.9 H1382 H1382 V419.8 H1381 H1381 V419.8 H1380 H1380 V420.9 H1379 H1379 V419.9 H1378 H1378 V419.3 H1377 H1377 V419.9 H1376 H1376 V418.7 H1375 H1375 V419.9 H1374 H1374 V419.9 H1373 H1373 V418.6 H1372 H1372 V417.9 H1371 H1371 V417.2 H1370 H1370 V417.3 H1369 H1369 V417.3 H1368 H1368 V417.5 H1367 H1367 V420.1 H1366 H1366 V418.7 H1365 H1365 V418.7 H1364 H1364 V416.8 H1363 H1363 V418.6 H1362 H1362 V419.8 H1361 H1361 V419.8 H1360 H1360 V419.0 H1359 H1359 V419.0 H1358 H1358 V420.4 H1357 H1357 V420.4 H1356 H1356 V419.9 H1355 H1355 V419.9 H1354 H1354 V419.9 H1353 H1353 V416.3 H1352 H1352 V417.5 H1351 H1351 V420.3 H1350 H1350 V418.1 H1349 H1349 V421.8 H1348 H1348 V421.8 H1347 H1347 V417.1 H1346 H1346 V417.2 H1345 H1345 V417.3 H1344 H1344 V417.3 H1343 H1343 V416.8 H1342 H1342 V416.9 H1341 H1341 V416.4 H1340 H1340 V417.5 H1339 H1339 V418.3 H1338 H1338 V422.2 H1337 H1337 V422.5 H1336 H1336 V420.1 H1335 H1335 V415.2 H1334 H1334 V415.7 H1333 H1333 V417.4 H1332 H1332 V416.7 H1331 H1331 V418.0 H1330 H1330 V418.0 H1329 H1329 V418.0 H1328 H1328 V417.1 H1327 H1327 V417.1 H1326 H1326 V419.3 H1325 H1325 V418.4 H1324 H1324 V416.4 H1323 H1323 V424.3 H1322 H1322 V424.3 H1321 H1321 V424.3 H1320 H1320 V417.8 H1319 H1319 V421.1 H1318 H1318 V421.1 H1317 H1317 V420.1 H1316 H1316 V422.1 H1315 H1315 V422.1 H1314 H1314 V420.2 H1313 H1313 V420.2 H1312 H1312 V420.2 H1311 H1311 V419.7 H1310 H1310 V419.7 H1309 H1309 V417.5 H1308 H1308 V415.3 H1307 H1307 V414.1 H1306 H1306 V417.9 H1305 H1305 V416.2 H1304 H1304 V416.4 H1303 H1303 V416.9 H1302 H1302 V419.2 H1301 H1301 V415.6 H1300 H1300 V414.3 H1299 H1299 V414.8 H1298 H1298 V415.6 H1297 H1297 V417.9 H1296 H1296 V418.5 H1295 H1295 V419.6 H1294 H1294 V419.9 H1293 H1293 V419.7 H1292 H1292 V419.0 H1291 H1291 V419.7 H1290 H1290 V421.5 H1289 H1289 V422.7 H1288 H1288 V415.9 H1287 H1287 V417.3 H1286 H1286 V418.9 H1285 H1285 V418.9 H1284 H1284 V420.9 H1283 H1283 V415.3 H1282 H1282 V417.4 H1281 H1281 V417.4 H1280 H1280 V417.4 H1279 H1279 V416.0 H1278 H1278 V416.0 H1277 H1277 V414.0 H1276 H1276 V414.0 H1275 H1275 V414.5 H1274 H1274 V419.4 H1273 H1273 V419.4 H1272 H1272 V416.8 H1271 H1271 V418.2 H1270 H1270 V420.2 H1269 H1269 V418.3 H1268 H1268 V418.3 H1267 H1267 V415.3 H1266 H1266 V415.3 H1265 H1265 V415.3 H1264 H1264 V413.0 H1263 H1263 V414.8 H1262 H1262 V418.2 H1261 H1261 V418.2 H1260 H1260 V420.3 H1259 H1259 V416.4 H1258 H1258 V416.4 H1257 H1257 V416.1 H1256 H1256 V416.1 H1255 H1255 V414.7 H1254 H1254 V417.7 H1253 H1253 V415.4 H1252 H1252 V416.2 H1251 H1251 V415.7 H1250 H1250 V418.5 H1249 H1249 V418.8 H1248 H1248 V413.9 H1247 H1247 V414.8 H1246 H1246 V412.6 H1245 H1245 V413.3 H1244 H1244 V413.3 H1243 H1243 V412.3 H1242 H1242 V415.9 H1241 H1241 V418.1 H1240 H1240 V414.8 H1239 H1239 V414.8 H1238 H1238 V413.6 H1237 H1237 V413.9 H1236 H1236 V414.7 H1235 H1235 V416.3 H1234 H1234 V416.0 H1233 H1233 V416.3 H1232 H1232 V415.3 H1231 H1231 V413.2 H1230 H1230 V413.2 H1229 H1229 V414.6 H1228 H1228 V414.6 H1227 H1227 V414.6 H1226 H1226 V413.7 H1225 H1225 V413.3 H1224 H1224 V412.8 H1223 H1223 V415.6 H1222 H1222 V418.2 H1221 H1221 V418.2 H1220 H1220 V411.6 H1219 H1219 V410.1 H1218 H1218 V411.6 H1217 H1217 V415.3 H1216 H1216 V415.3 H1215 H1215 V416.7 H1214 H1214 V414.3 H1213 H1213 V417.5 H1212 H1212 V414.3 H1211 H1211 V417.7 H1210 H1210 V418.3 H1209 H1209 V418.3 H1208 H1208 V418.4 H1207 H1207 V418.4 H1206 H1206 V411.7 H1205 H1205 V414.8 H1204 H1204 V414.7 H1203 H1203 V413.9 H1202 H1202 V412.8 H1201 H1201 V413.9 H1200 H1200 V416.5 H1199 H1199 V412.6 H1198 H1198 V414.3 H1197 H1197 V414.5 H1196 H1196 V414.5 H1195 H1195 V414.3 H1194 H1194 V413.8 H1193 H1193 V413.6 H1192 H1192 V412.4 H1191 H1191 V413.0 H1190 H1190 V413.2 H1189 H1189 V413.2 H1188 H1188 V412.0 H1187 H1187 V410.5 H1186 H1186 V413.1 H1185 H1185 V413.1 H1184 H1184 V411.7 H1183 H1183 V414.9 H1182 H1182 V415.1 H1181 H1181 V415.1 H1180 H1180 V415.1 H1179 H1179 V413.1 H1178 H1178 V414.8 H1177 H1177 V414.8 H1176 H1176 V415.5 H1175 H1175 V410.8 H1174 H1174 V411.2 H1173 H1173 V412.7 H1172 H1172 V414.6 H1171 H1171 V412.2 H1170 H1170 V414.8 H1169 H1169 V409.9 H1168 H1168 V409.9 H1167 H1167 V411.8 H1166 H1166 V412.4 H1165 H1165 V412.4 H1164 H1164 V409.7 H1163 H1163 V411.7 H1162 H1162 V412.0 H1161 H1161 V413.1 H1160 H1160 V412.0 H1159 H1159 V412.0 H1158 H1158 V410.9 H1157 H1157 V410.8 H1156 H1156 V410.6 H1155 H1155 V410.8 H1154 H1154 V411.9 H1153 H1153 V408.9 H1152 H1152 V409.2 H1151 H1151 V409.2 H1150 H1150 V411.1 H1149 H1149 V408.9 H1148 H1148 V411.3 H1147 H1147 V415.2 H1146 H1146 V415.2 H1145 H1145 V416.2 H1144 H1144 V413.8 H1143 H1143 V412.9 H1142 H1142 V412.3 H1141 H1141 V411.2 H1140 H1140 V412.3 H1139 H1139 V412.3 H1138 H1138 V412.3 H1137 H1137 V413.1 H1136 H1136 V413.1 H1135 H1135 V415.0 H1134 H1134 V412.4 H1133 H1133 V410.3 H1132 H1132 V410.3 H1131 H1131 V410.3 H1130 H1130 V412.0 H1129 H1129 V411.9 H1128 H1128 V411.8 H1127 H1127 V410.9 H1126 H1126 V414.1 H1125 H1125 V414.1 H1124 H1124 V413.3 H1123 H1123 V411.6 H1122 H1122 V413.1 H1121 H1121 V412.1 H1120 H1120 V411.0 H1119 H1119 V411.2 H1118 H1118 V411.1 H1117 H1117 V411.4 H1116 H1116 V414.5 H1115 H1115 V411.5 H1114 H1114 V411.5 H1113 H1113 V409.8 H1112 H1112 V409.9 H1111 H1111 V409.9 H1110 H1110 V409.6 H1109 H1109 V408.2 H1108 H1108 V408.2 H1107 H1107 V407.6 H1106 H1106 V407.6 H1105 H1105 V406.4 H1104 H1104 V409.9 H1103 H1103 V412.9 H1102 H1102 V414.2 H1101 H1101 V410.7 H1100 H1100 V414.5 H1099 H1099 V414.5 H1098 H1098 V412.3 H1097 H1097 V409.0 H1096 H1096 V409.1 H1095 H1095 V409.1 H1094 H1094 V409.1 H1093 H1093 V407.4 H1092 H1092 V410.2 H1091 H1091 V410.8 H1090 H1090 V410.8 H1089 H1089 V410.8 H1088 H1088 V406.9 H1087 H1087 V409.1 H1086 H1086 V413.0 H1085 H1085 V409.2 H1084 H1084 V409.4 H1083 H1083 V407.3 H1082 H1082 V407.3 H1081 H1081 V411.7 H1080 H1080 V411.7 H1079 H1079 V406.3 H1078 H1078 V406.9 H1077 H1077 V406.9 H1076 H1076 V406.5 H1075 H1075 V406.5 H1074 H1074 V406.5 H1073 H1073 V405.5 H1072 H1072 V406.9 H1071 H1071 V409.2 H1070 H1070 V409.2 H1069 H1069 V407.8 H1068 H1068 V404.5 H1067 H1067 V405.3 H1066 H1066 V407.2 H1065 H1065 V407.2 H1064 H1064 V406.2 H1063 H1063 V407.0 H1062 H1062 V414.6 H1061 H1061 V414.6 H1060 H1060 V404.3 H1059 H1059 V405.6 H1058 H1058 V406.0 H1057 H1057 V406.0 H1056 H1056 V407.6 H1055 H1055 V402.9 H1054 H1054 V404.3 H1053 H1053 V408.4 H1052 H1052 V408.4 H1051 H1051 V409.2 H1050 H1050 V409.5 H1049 H1049 V409.5 H1048 H1048 V407.8 H1047 H1047 V407.1 H1046 H1046 V407.8 H1045 H1045 V407.8 H1044 H1044 V407.8 H1043 H1043 V405.3 H1042 H1042 V404.9 H1041 H1041 V403.9 H1040 H1040 V407.5 H1039 H1039 V407.5 H1038 H1038 V407.5 H1037 H1037 V407.3 H1036 H1036 V408.2 H1035 H1035 V408.3 H1034 H1034 V408.8 H1033 H1033 V408.8 H1032 H1032 V404.5 H1031 H1031 V407.4 H1030 H1030 V407.4 H1029 H1029 V411.8 H1028 H1028 V412.3 H1027 H1027 V408.2 H1026 H1026 V406.8 H1025 H1025 V406.8 H1024 H1024 V405.4 H1023 H1023 V407.6 H1022 H1022 V407.6 H1021 H1021 V406.5 H1020 H1020 V405.2 H1019 H1019 V404.0 H1018 H1018 V402.0 H1017 H1017 V401.4 H1016 H1016 V401.4 H1015 H1015 V400.2 H1014 H1014 V402.8 H1013 H1013 V404.1 H1012 H1012 V404.3 H1011 H1011 V408.5 H1010 H1010 V407.6 H1009 H1009 V407.6 H1008 H1008 V408.2 H1007 H1007 V408.2 H1006 H1006 V403.4 H1005 H1005 V403.1 H1004 H1004 V403.5 H1003 H1003 V405.8 H1002 H1002 V405.2 H1001 H1001 V400.9 H1000 H1000 V399.5 H999 H999 V400.8 H998 H998 V400.8 H997 H997 V404.4 H996 H996 V404.2 H995 H995 V408.5 H994 H994 V405.1 H993 H993 V405.1 H992 H992 V403.3 H991 H991 V412.3 H990 H990 V412.3 H989 H989 V409.7 H988 H988 V409.2 H987 H987 V406.2 H986 H986 V405.5 H985 H985 V405.5 H984 H984 V404.9 H983 H983 V399.6 H982 H982 V400.9 H981 H981 V400.9 H980 H980 V397.5 H979 H979 V397.5 H978 H978 V395.8 H977 H977 V402.6 H976 H976 V408.0 H975 H975 V408.0 H974 H974 V396.6 H973 H973 V396.6 H972 H972 V397.9 H971 H971 V403.1 H970 H970 V400.0 H969 H969 V401.3 H968 H968 V399.3 H967Z" fill="#a5303e"/><path d="M1207.6 81.7 V392.2" stroke="#a32f3e" stroke-width="2.8" fill="none" stroke-linecap="round"/><path d="M889.5 47 V511 M929.5 47 V511 M944.5 47 V511 M957.5 47 V511 M969.5 47 V511 M1116.5 47 V511 M1156.5 47 V511 M1171.5 47 V511 M1184.5 47 V511 M1196.5 47 V511 M1343.5 47 V511 M1382.5 47 V511 M1398.5 47 V511 M1411.5 47 V511 M1422.5 47 V511" stroke="#000" stroke-opacity="0.06" stroke-width="1" fill="none" shape-rendering="crispEdges"/><path d="M861.5 47 V511 M911.5 47 V511 M979.5 47 V511 M1048.5 47 V511 M1088.5 47 V511 M1138.5 47 V511 M1206.5 47 V511 M1274.5 47 V511 M1314.5 47 V511 M1365.5 47 V511 M1433.5 47 V511 M821 54.5 H1501 M821 79.5 H1501 M821 105.5 H1501 M821 131.5 H1501 M821 156.5 H1501 M821 182.5 H1501 M821 208.5 H1501 M821 233.5 H1501 M821 259.5 H1501 M821 285.5 H1501 M821 310.5 H1501 M821 336.5 H1501 M821 361.5 H1501 M821 387.5 H1501 M821 413.5 H1501 M821 438.5 H1501 M821 464.5 H1501 M821 490.5 H1501" stroke="#000" stroke-opacity="0.165" stroke-width="1" fill="none" shape-rendering="crispEdges"/><rect x="821.5" y="47.5" width="680" height="464" fill="none" stroke="#666" stroke-width="1" shape-rendering="crispEdges"/><text x="817" y="58.1" text-anchor="end">+10</text><text x="817" y="83.7" text-anchor="end">0</text><text x="817" y="109.3" text-anchor="end">-10</text><text x="817" y="135.0" text-anchor="end">-20</text><text x="817" y="160.6" text-anchor="end">-30</text><text x="817" y="186.3" text-anchor="end">-40</text><text x="817" y="211.9" text-anchor="end">-50</text><text x="817" y="237.5" text-anchor="end">-60</text><text x="817" y="263.2" text-anchor="end">-70</text><text x="817" y="288.8" text-anchor="end">-80</text><text x="817" y="314.5" text-anchor="end">-90</text><text x="817" y="340.1" text-anchor="end">-100</text><text x="817" y="365.7" text-anchor="end">-110</text><text x="817" y="391.4" text-anchor="end">-120</text><text x="817" y="417.0" text-anchor="end">-130</text><text x="817" y="442.7" text-anchor="end">-140</text><text x="817" y="468.3" text-anchor="end">-150</text><text x="817" y="493.9" text-anchor="end">-160</text><text x="821.0" y="526" text-anchor="middle">20</text><text x="860.9" y="526" text-anchor="middle">30</text><text x="911.2" y="526" text-anchor="middle">50</text><text x="979.4" y="526" text-anchor="middle">100</text><text x="1047.7" y="526" text-anchor="middle">200</text><text x="1087.6" y="526" text-anchor="middle">300</text><text x="1137.9" y="526" text-anchor="middle">500</text><text x="1206.1" y="526" text-anchor="middle">1k</text><text x="1274.3" y="526" text-anchor="middle">2k</text><text x="1314.2" y="526" text-anchor="middle">3k</text><text x="1364.5" y="526" text-anchor="middle">5k</text><text x="1432.8" y="526" text-anchor="middle">10k</text><text x="1501.0" y="526" text-anchor="middle">20k</text><text x="1161" y="44" text-anchor="middle">FFT</text><text x="1161" y="538" text-anchor="middle" letter-spacing="-0.25">Frequency (Hz)</text><text transform="translate(788,279) rotate(-90)" text-anchor="middle" letter-spacing="-0.3">Level (dBrA)</text></svg>
<div class="t" style="left:17px;top:557px">Interpolated:</div>
<svg class="a" style="left:100px;top:557px" width="13" height="13"><circle cx="6.5" cy="6.5" r="6.4" fill="#0a5db5"/><circle cx="6.5" cy="6.5" r="2.4" fill="#fff"/></svg>
<div class="t" style="left:119px;top:557px">On</div>
<svg class="a" style="left:149px;top:557px" width="13" height="13"><circle cx="6.5" cy="6.5" r="6" fill="#fff" stroke="#333" stroke-width="1"/></svg>
<div class="t" style="left:169px;top:557px;letter-spacing:-0.2px">Off</div>
<div class="t" style="left:206px;top:556px;letter-spacing:-0.31px">Show Residual:</div>
<div class="cb" style="left:297px;top:552px;width:123px;height:22px"></div><div class="t" style="left:301px;top:556px">Off</div>
<svg class="a" style="left:405px;top:560px" width="10" height="6"><path d="M1 0.5L5 4.5L9 0.5" stroke="#444" stroke-width="1" fill="none"/></svg>
<div class="t" style="left:431px;top:556px;letter-spacing:-0.34px">Show Cycles:</div>
<div class="cb" style="left:512px;top:551px;width:70px;height:23px;border-color:#8e92a2;border-bottom-color:#8e92a2;border-radius:0"></div><div class="t" style="left:514px;top:553px">3</div><div class="a" style="left:566px;top:553px;width:14px;height:9px;background:#f4f4f4;border:1px solid #d8d8d8"></div><div class="a" style="left:566px;top:562px;width:14px;height:10px;background:#f4f4f4;border:1px solid #d8d8d8"></div><svg class="a" style="left:569px;top:555px" width="8" height="16"><path d="M1 5L4 1.5L7 5Z M1 10L4 13.5L7 10Z" fill="#000"/></svg>
<div class="t" style="left:784px;top:556px;letter-spacing:-0.35px">FFT Length:</div>
<div class="cb" style="left:858px;top:551px;width:62px;height:23px"></div><div class="t" style="left:862px;top:556px;letter-spacing:-0.5px">256K</div>
<svg class="a" style="left:906px;top:560px" width="10" height="6"><path d="M1 0.5L5 4.5L9 0.5" stroke="#444" stroke-width="1" fill="none"/></svg>
<div class="t" style="left:932px;top:556px;letter-spacing:-0.1px">Window:</div>
<div class="cb" style="left:990px;top:551px;width:181px;height:23px"></div><div class="t" style="left:994px;top:556px">AP-Equiripple</div>
<svg class="a" style="left:1156px;top:560px" width="10" height="6"><path d="M1 0.5L5 4.5L9 0.5" stroke="#444" stroke-width="1" fill="none"/></svg>
<div class="t" style="left:1182px;top:556px;letter-spacing:-0.34px">Averages:</div>
<div class="cb" style="left:1245px;top:551px;width:70px;height:23px;border-color:#8e92a2;border-bottom-color:#8e92a2;border-radius:0"></div><div class="t" style="left:1247px;top:553px">3</div><div class="a" style="left:1299px;top:553px;width:14px;height:9px;background:#f4f4f4;border:1px solid #d8d8d8"></div><div class="a" style="left:1299px;top:562px;width:14px;height:10px;background:#f4f4f4;border:1px solid #d8d8d8"></div><svg class="a" style="left:1302px;top:555px" width="8" height="16"><path d="M1 5L4 1.5L7 5Z M1 10L4 13.5L7 10Z" fill="#000"/></svg>
<div class="cb" style="left:1322px;top:556px;width:13px;height:13px;border-color:#333;border-bottom-color:#333;border-radius:3px"></div>
<div class="t" style="left:1341px;top:556px;letter-spacing:-0.32px">Show Residual</div>
<div class="cb" style="left:1431px;top:552px;width:53px;height:23px;border-radius:4px 0 0 4px;border-right:none;background:#fdfdfd;border-color:#d4d4d4;border-bottom-color:#c0c0c0"></div><div class="t" style="left:1453px;top:557px;letter-spacing:-0.8px">Reset</div>
<div class="cb" style="left:1491px;top:549px;width:32px;height:25px;border-radius:4px;background:#fdfdfd;border-color:#d4d4d4;border-bottom-color:#c0c0c0"></div><div class="t" style="left:1498px;top:555px;letter-spacing:1px;font-size:11.5px">&gt;&gt;</div>
<div class="a" style="left:0;top:592px;width:1535px;height:7px;background:#477584"></div>
<div class="a" style="left:760px;top:594px;width:3px;height:3px;border-radius:50%;background:#b5cad2"></div>
<div class="a" style="left:766px;top:594px;width:3px;height:3px;border-radius:50%;background:#b5cad2"></div>
<div class="a" style="left:772px;top:594px;width:3px;height:3px;border-radius:50%;background:#b5cad2"></div>
<div class="a" style="left:0;top:599px;width:1535px;height:24px;background:#d3d3d3"></div><div class="a" style="left:0;top:599px;width:1535px;height:1px;background:#e2e2e2"></div><div class="a" style="left:0;top:592px;width:1535px;height:1px;background:#416e7c"></div>
<div class="a" style="left:0;top:623px;width:1535px;height:1px;background:#dfe6e9"></div>
<svg class="a" style="left:2px;top:603px" width="16" height="16"><rect width="16" height="16" fill="url(#ig)"/><path d="M8 2V14M2 8H14" stroke="#fff" stroke-width="2"/></svg>
<div class="t" style="left:21px;top:604px">Add Meter</div><div class="arr" style="left:83px;top:610px"></div>
<div class="sep" style="left:95px;top:604px"></div>
<svg class="a" style="left:100px;top:603px" width="16" height="16" viewBox="0 0 16 16"><rect width="16" height="16" fill="url(#ig)"/><path d="M1 4.2C1 2.9 3 2 5.5 2S10 2.9 10 4.2V12.8C10 14.1 8 15 5.5 15S1 14.100 1 12.8Z" fill="#fff"/><ellipse cx="5.5" cy="3.7" rx="1.6" ry="0.5" fill="#4f8796"/><path d="M1.6 6.1C3 7 8 7 9.4 6.100" stroke="#2f6071" stroke-width="1" fill="none"/><path d="M1.6 9.2C3 10.100 8 10.100 9.4 9.2" stroke="#3b4f8c" stroke-width="1" fill="none"/><path d="M1.6 12.2C3 13.100 8 13.100 9.4 12.2" stroke="#2f6071" stroke-width="1" fill="none"/><path d="M7.800 7H11.900V4.800L16 8.500L11.900 12.200V10H7.800Z" fill="#fff" stroke="#24445a" stroke-width="1" paint-order="stroke"/></svg>
<div class="t" style="left:119px;top:604px;letter-spacing:-0.39px">Save Meter Data</div>
<div class="sep" style="left:213px;top:604px"></div>
<svg class="a" style="left:218px;top:603px" width="16" height="16"><rect width="16" height="16" fill="url(#ig)"/><path d="M5 3L12 8L5 13Z" fill="#fff"/></svg>
<div class="t" style="left:237px;top:604px;letter-spacing:-0.33px">Regulate</div>
<svg class="a" style="left:1515px;top:605px" width="14" height="12"><path d="M5 0H8V3H10.5L6.5 7L2.5 3H5Z" fill="#2f4f8f"/><rect x="0" y="9" width="13" height="2" fill="#2f4f8f"/></svg>
<div class="pan" style="left:3px;top:627px;width:749px;height:158px"></div><div class="a" style="left:3px;top:652px;width:749px;height:1px;background:#a3a3a3"></div><div class="a" style="left:3px;top:653px;width:749px;height:1px;background:#fff"></div><div class="t b" style="left:7px;top:631px;letter-spacing:0.2px">RMS Level</div><div class="dd" style="left:92px;top:628px;width:75px"><i></i></div><div class="t" style="left:96px;top:633px">Vrms</div><div class="arr" style="left:158px;top:638px"></div><svg class="a" style="left:170px;top:631px" width="16" height="16" viewBox="0 0 16 16"><rect width="16" height="16" fill="url(#ig)"/><rect x="1" y="3" width="14" height="10" fill="#fff"/><rect x="1" y="5" width="14" height="2.800" fill="#4f6196"/><rect x="1" y="7.800" width="14" height="3.200" fill="#4a8590"/><path d="M1 10.800L5.500 6.200L9.500 10.900L15 5" stroke="#fff" stroke-width="1.300" fill="none"/></svg><div class="arr" style="left:188px;top:638px"></div><svg class="a" style="left:200px;top:631px" width="16" height="16" viewBox="0 0 16 16"><rect width="16" height="16" fill="url(#ig)"/><path d="M7.14 1.96 L8.86 1.96 L9.21 3.30 L10.47 3.83 L11.66 3.12 L12.88 4.34 L12.17 5.53 L12.70 6.79 L14.04 7.14 L14.04 8.86 L12.70 9.21 L12.17 10.47 L12.88 11.66 L11.66 12.88 L10.47 12.17 L9.21 12.70 L8.86 14.04 L7.14 14.04 L6.79 12.70 L5.53 12.17 L4.34 12.88 L3.12 11.66 L3.83 10.47 L3.30 9.21 L1.96 8.86 L1.96 7.14 L3.30 6.79 L3.83 5.53 L3.12 4.34 L4.34 3.12 L5.53 3.83 L6.79 3.30Z" fill="#fff"/><circle cx="8" cy="8" r="2.1" fill="#27475a"/></svg><div class="sep" style="left:702px;top:632px"></div><svg class="a" style="left:710px;top:633px" width="12" height="12" viewBox="0 0 12 12"><path d="M0 0H4V2H2V10H10V8H12V12H0Z" fill="#12307a"/><path d="M6.2 0H12V5.800Z" fill="#1c3f85"/><path d="M9.3 2.700L5.500 6.500" stroke="#12307a" stroke-width="2" stroke-linecap="round"/></svg><svg class="a" style="left:734px;top:634px" width="10" height="10" viewBox="0 0 10 10"><path d="M1.100 1.100L8.900 8.900M8.900 1.100L1.100 8.900" stroke="#14303f" stroke-width="2.1" stroke-linecap="round"/></svg><div class="a" style="left:194px;top:657px;width:549px;height:60px;background:#000"></div><div class="a" style="left:194px;top:720px;width:549px;height:60px;background:#000"></div><div class="a" style="left:5px;top:717px;width:189px;height:1px;background:#9d9d9d"></div><div class="bar" style="left:194px;top:698px;width:549px"><b style="width:239px"></b><u style="left:0px;width:474px"></u></div><div class="bar" style="left:194px;top:720px;width:549px"><b style="width:239px"></b><u style="left:0px;width:474px"></u></div><div class="ch" style="left:10px;top:668px">Ch1</div><div class="ch" style="left:10px;top:731px">Ch2</div><div class="tri" style="left:181px;top:682px"></div><div class="tri" style="left:181px;top:745px"></div><div class="val" style="right:945.5px;top:659px;letter-spacing:-0.85px">49.69</div><div class="val" style="right:798.0px;top:659px;letter-spacing:0px">mVrms</div><div class="val" style="right:945.5px;top:739px;letter-spacing:-0.85px">49.69</div><div class="val" style="right:798.0px;top:739px;letter-spacing:0px">mVrms</div>
<div class="pan" style="left:758px;top:627px;width:749px;height:158px"></div><div class="a" style="left:758px;top:652px;width:749px;height:1px;background:#a3a3a3"></div><div class="a" style="left:758px;top:653px;width:749px;height:1px;background:#fff"></div><div class="t b" style="left:762px;top:631px;letter-spacing:0.7px">THD+N Ratio</div><div class="dd" style="left:870px;top:628px;width:75px"><i></i></div><div class="t" style="left:874px;top:633px">%</div><div class="arr" style="left:936px;top:638px"></div><svg class="a" style="left:948px;top:631px" width="16" height="16" viewBox="0 0 16 16"><rect width="16" height="16" fill="url(#ig)"/><rect x="1" y="3" width="14" height="10" fill="#fff"/><rect x="1" y="5" width="14" height="2.800" fill="#4f6196"/><rect x="1" y="7.800" width="14" height="3.200" fill="#4a8590"/><path d="M1 10.800L5.500 6.200L9.500 10.900L15 5" stroke="#fff" stroke-width="1.300" fill="none"/></svg><div class="arr" style="left:966px;top:638px"></div><svg class="a" style="left:978px;top:631px" width="16" height="16" viewBox="0 0 16 16"><rect width="16" height="16" fill="url(#ig)"/><path d="M7.14 1.96 L8.86 1.96 L9.21 3.30 L10.47 3.83 L11.66 3.12 L12.88 4.34 L12.17 5.53 L12.70 6.79 L14.04 7.14 L14.04 8.86 L12.70 9.21 L12.17 10.47 L12.88 11.66 L11.66 12.88 L10.47 12.17 L9.21 12.70 L8.86 14.04 L7.14 14.04 L6.79 12.70 L5.53 12.17 L4.34 12.88 L3.12 11.66 L3.83 10.47 L3.30 9.21 L1.96 8.86 L1.96 7.14 L3.30 6.79 L3.83 5.53 L3.12 4.34 L4.34 3.12 L5.53 3.83 L6.79 3.30Z" fill="#fff"/><circle cx="8" cy="8" r="2.1" fill="#27475a"/></svg><div class="sep" style="left:1457px;top:632px"></div><svg class="a" style="left:1465px;top:633px" width="12" height="12" viewBox="0 0 12 12"><path d="M0 0H4V2H2V10H10V8H12V12H0Z" fill="#12307a"/><path d="M6.2 0H12V5.800Z" fill="#1c3f85"/><path d="M9.3 2.700L5.500 6.500" stroke="#12307a" stroke-width="2" stroke-linecap="round"/></svg><svg class="a" style="left:1489px;top:634px" width="10" height="10" viewBox="0 0 10 10"><path d="M1.100 1.100L8.900 8.900M8.900 1.100L1.100 8.900" stroke="#14303f" stroke-width="2.1" stroke-linecap="round"/></svg><div class="a" style="left:949px;top:657px;width:549px;height:60px;background:#000"></div><div class="a" style="left:949px;top:720px;width:549px;height:60px;background:#000"></div><div class="a" style="left:760px;top:717px;width:189px;height:1px;background:#9d9d9d"></div><div class="bar" style="left:949px;top:698px;width:549px"><b style="width:186px"></b><u style="left:7px;width:540px"></u></div><div class="bar" style="left:949px;top:720px;width:549px"><b style="width:186px"></b><u style="left:7px;width:540px"></u></div><div class="ch" style="left:765px;top:668px">Ch1</div><div class="ch" style="left:765px;top:731px">Ch2</div><div class="tri" style="left:936px;top:682px"></div><div class="tri" style="left:936px;top:745px"></div><div class="val" style="right:91.0px;top:659px;letter-spacing:-0.85px">0.010642</div><div class="val" style="right:42.5px;top:659px;letter-spacing:0px">%</div><div class="val" style="right:91.0px;top:739px;letter-spacing:-0.85px">0.010691</div><div class="val" style="right:42.5px;top:739px;letter-spacing:0px">%</div>
<div class="pan" style="left:3px;top:791px;width:749px;height:158px"></div><div class="a" style="left:3px;top:816px;width:749px;height:1px;background:#a3a3a3"></div><div class="a" style="left:3px;top:817px;width:749px;height:1px;background:#fff"></div><div class="t b" style="left:7px;top:795px;letter-spacing:0.28px">Frequency</div><div class="dd" style="left:93px;top:792px;width:75px"><i></i></div><div class="t" style="left:97px;top:797px">Hz</div><div class="arr" style="left:159px;top:802px"></div><svg class="a" style="left:171px;top:795px" width="16" height="16" viewBox="0 0 16 16"><rect width="16" height="16" fill="url(#ig)"/><rect x="1" y="3" width="14" height="10" fill="#fff"/><rect x="1" y="5" width="14" height="2.800" fill="#4f6196"/><rect x="1" y="7.800" width="14" height="3.200" fill="#4a8590"/><path d="M1 10.800L5.500 6.200L9.500 10.900L15 5" stroke="#fff" stroke-width="1.300" fill="none"/></svg><div class="arr" style="left:189px;top:802px"></div><svg class="a" style="left:201px;top:795px" width="16" height="16" viewBox="0 0 16 16"><rect width="16" height="16" fill="url(#ig)"/><path d="M7.14 1.96 L8.86 1.96 L9.21 3.30 L10.47 3.83 L11.66 3.12 L12.88 4.34 L12.17 5.53 L12.70 6.79 L14.04 7.14 L14.04 8.86 L12.70 9.21 L12.17 10.47 L12.88 11.66 L11.66 12.88 L10.47 12.17 L9.21 12.70 L8.86 14.04 L7.14 14.04 L6.79 12.70 L5.53 12.17 L4.34 12.88 L3.12 11.66 L3.83 10.47 L3.30 9.21 L1.96 8.86 L1.96 7.14 L3.30 6.79 L3.83 5.53 L3.12 4.34 L4.34 3.12 L5.53 3.83 L6.79 3.30Z" fill="#fff"/><circle cx="8" cy="8" r="2.1" fill="#27475a"/></svg><div class="sep" style="left:702px;top:796px"></div><svg class="a" style="left:710px;top:797px" width="12" height="12" viewBox="0 0 12 12"><path d="M0 0H4V2H2V10H10V8H12V12H0Z" fill="#12307a"/><path d="M6.2 0H12V5.800Z" fill="#1c3f85"/><path d="M9.3 2.700L5.500 6.500" stroke="#12307a" stroke-width="2" stroke-linecap="round"/></svg><svg class="a" style="left:734px;top:798px" width="10" height="10" viewBox="0 0 10 10"><path d="M1.100 1.100L8.900 8.900M8.900 1.100L1.100 8.900" stroke="#14303f" stroke-width="2.1" stroke-linecap="round"/></svg><div class="a" style="left:194px;top:821px;width:549px;height:60px;background:#000"></div><div class="a" style="left:194px;top:884px;width:549px;height:60px;background:#000"></div><div class="a" style="left:5px;top:881px;width:189px;height:1px;background:#9d9d9d"></div><div class="bar" style="left:194px;top:862px;width:549px"><b style="width:311px"></b><u style="left:0px;width:547px"></u></div><div class="bar" style="left:194px;top:884px;width:549px"><b style="width:311px"></b><u style="left:0px;width:547px"></u></div><div class="ch" style="left:10px;top:832px">Ch1</div><div class="ch" style="left:10px;top:895px">Ch2</div><div class="tri" style="left:181px;top:846px"></div><div class="tri" style="left:181px;top:909px"></div><div class="val" style="right:883.9px;top:823px;letter-spacing:-1.25px">1.00005</div><div class="val" style="right:797.0px;top:823px;letter-spacing:0px">kHz</div><div class="val" style="right:883.9px;top:903px;letter-spacing:-1.25px">1.00005</div><div class="val" style="right:797.0px;top:903px;letter-spacing:0px">kHz</div>
<div class="pan" style="left:758px;top:791px;width:749px;height:158px"></div><div class="a" style="left:758px;top:816px;width:749px;height:1px;background:#a3a3a3"></div><div class="a" style="left:758px;top:817px;width:749px;height:1px;background:#fff"></div><div class="t b" style="left:762px;top:795px;letter-spacing:0.5px">SINAD</div><div class="dd" style="left:819px;top:792px;width:75px"><i></i></div><div class="t" style="left:823px;top:797px">dB</div><div class="arr" style="left:885px;top:802px"></div><svg class="a" style="left:897px;top:795px" width="16" height="16" viewBox="0 0 16 16"><rect width="16" height="16" fill="url(#ig)"/><rect x="1" y="3" width="14" height="10" fill="#fff"/><rect x="1" y="5" width="14" height="2.800" fill="#4f6196"/><rect x="1" y="7.800" width="14" height="3.200" fill="#4a8590"/><path d="M1 10.800L5.500 6.200L9.500 10.900L15 5" stroke="#fff" stroke-width="1.300" fill="none"/></svg><div class="arr" style="left:915px;top:802px"></div><svg class="a" style="left:927px;top:795px" width="16" height="16" viewBox="0 0 16 16"><rect width="16" height="16" fill="url(#ig)"/><path d="M7.14 1.96 L8.86 1.96 L9.21 3.30 L10.47 3.83 L11.66 3.12 L12.88 4.34 L12.17 5.53 L12.70 6.79 L14.04 7.14 L14.04 8.86 L12.70 9.21 L12.17 10.47 L12.88 11.66 L11.66 12.88 L10.47 12.17 L9.21 12.70 L8.86 14.04 L7.14 14.04 L6.79 12.70 L5.53 12.17 L4.34 12.88 L3.12 11.66 L3.83 10.47 L3.30 9.21 L1.96 8.86 L1.96 7.14 L3.30 6.79 L3.83 5.53 L3.12 4.34 L4.34 3.12 L5.53 3.83 L6.79 3.30Z" fill="#fff"/><circle cx="8" cy="8" r="2.1" fill="#27475a"/></svg><div class="sep" style="left:1457px;top:796px"></div><svg class="a" style="left:1465px;top:797px" width="12" height="12" viewBox="0 0 12 12"><path d="M0 0H4V2H2V10H10V8H12V12H0Z" fill="#12307a"/><path d="M6.2 0H12V5.800Z" fill="#1c3f85"/><path d="M9.3 2.700L5.500 6.500" stroke="#12307a" stroke-width="2" stroke-linecap="round"/></svg><svg class="a" style="left:1489px;top:798px" width="10" height="10" viewBox="0 0 10 10"><path d="M1.100 1.100L8.900 8.900M8.900 1.100L1.100 8.900" stroke="#14303f" stroke-width="2.1" stroke-linecap="round"/></svg><div class="a" style="left:949px;top:821px;width:549px;height:60px;background:#000"></div><div class="a" style="left:949px;top:884px;width:549px;height:60px;background:#000"></div><div class="a" style="left:760px;top:881px;width:189px;height:1px;background:#9d9d9d"></div><div class="bar" style="left:949px;top:862px;width:549px"><b style="width:363px"></b><u style="left:0px;width:540px"></u></div><div class="bar" style="left:949px;top:884px;width:549px"><b style="width:363px"></b><u style="left:0px;width:541px"></u></div><div class="ch" style="left:765px;top:832px">Ch1</div><div class="ch" style="left:765px;top:895px">Ch2</div><div class="tri" style="left:936px;top:846px"></div><div class="tri" style="left:936px;top:909px"></div><div class="val" style="right:106.4px;top:823px;letter-spacing:-0.85px">79.460</div><div class="val" style="right:44.6px;top:823px;letter-spacing:-1.0px">dB</div><div class="val" style="right:106.4px;top:903px;letter-spacing:-0.85px">79.419</div><div class="val" style="right:44.6px;top:903px;letter-spacing:-1.0px">dB</div>
</body></html>
